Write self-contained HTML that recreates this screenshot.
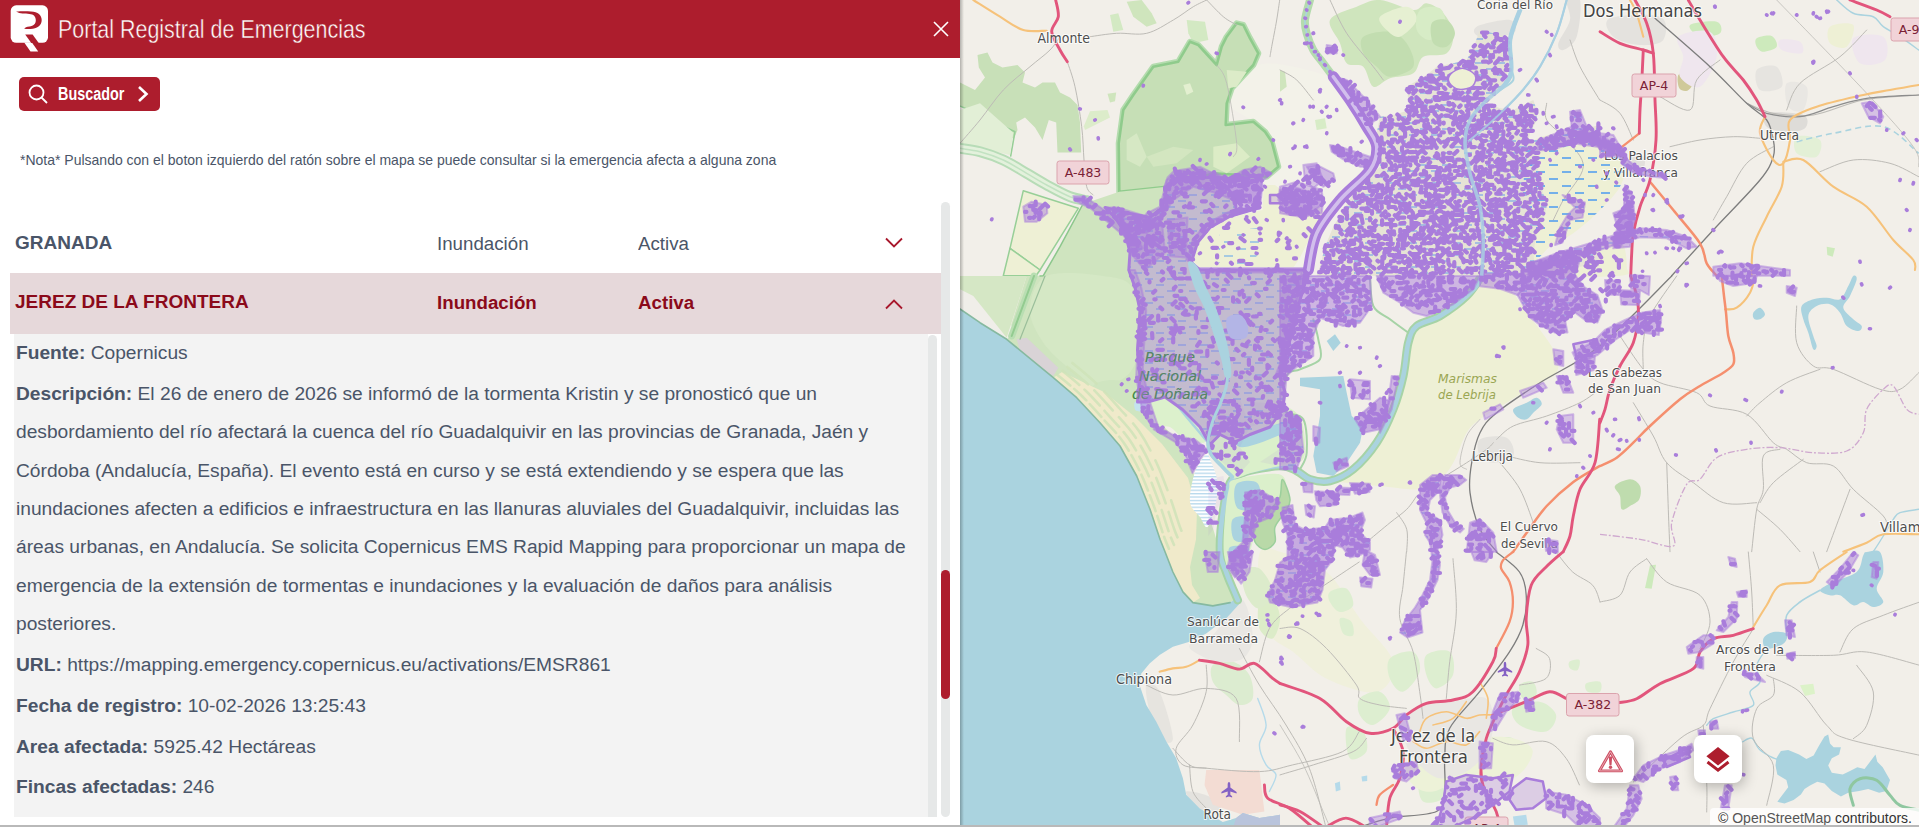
<!DOCTYPE html>
<html lang="es">
<head>
<meta charset="utf-8">
<title>Portal Registral de Emergencias</title>
<style>
*{box-sizing:border-box;margin:0;padding:0}
html,body{width:1919px;height:827px;overflow:hidden;background:#fff;font-family:"Liberation Sans",sans-serif;color:#4a5568}
#app{position:relative;width:1919px;height:827px;overflow:hidden}
#panel{position:absolute;left:0;top:0;width:960px;height:827px;background:#fff;overflow:hidden}
#hdr{position:absolute;left:0;top:0;width:960px;height:58px;background:#ad1d2d}
#logo{position:absolute;left:0;top:0;width:60px;height:58px}
#title{position:absolute;left:58px;top:13px;font-size:26px;line-height:32px;color:#fff;white-space:nowrap;transform-origin:0 50%;transform:scaleX(.825);font-weight:400;-webkit-text-stroke:.45px #ad1d2d}
#close{position:absolute;left:933px;top:21px;width:16px;height:16px}
#btn{position:absolute;left:19px;top:77px;width:141px;height:34px;border-radius:5px;background:#ad1d2d;color:#fff}
#btn svg{position:absolute}
#btn span{position:absolute;left:39px;top:6px;font-size:18px;line-height:22px;font-weight:700;white-space:nowrap;transform-origin:0 50%;transform:scaleX(.8)}
#nota{position:absolute;left:20px;top:151px;font-size:15px;line-height:18px;white-space:nowrap;transform-origin:0 50%;transform:scaleX(.933);color:#4a5568}
.row{position:absolute;left:10px;width:931px;height:61px}
.row .n{position:absolute;left:5px;font-size:19px;line-height:24px;font-weight:700;white-space:nowrap}
.row .c{position:absolute;font-size:19.2px;line-height:24px;white-space:nowrap;transform-origin:0 50%;transform:scaleX(.975)}
#r1{top:212px}
#r2{top:273px;background:#e6d8da;color:#8b0a1a}
#r2 .c{font-weight:700}
.chev{position:absolute;left:875px;width:18px;height:12px}
#det{position:absolute;left:14px;top:334px;width:914px;height:483px;background:#f3f3f3}
#det p{position:absolute;left:2px;font-size:19.2px;line-height:38.4px;white-space:nowrap;color:#4a5568}
#det b{font-weight:700}
#sb1{position:absolute;left:928px;top:335px;width:9px;height:482px;background:#e6e8e8;border-radius:5px 5px 0 0}
#sb2{position:absolute;left:941px;top:202px;width:9px;height:615px;background:#e6e8e8;border-radius:5px}
#sb2 i{position:absolute;left:0;top:368px;width:9px;height:129px;border-radius:5px;background:#ad1d2d}
#bottom{position:absolute;left:0;top:825px;width:1919px;height:2px;background:#b9b9b9}
#map{position:absolute;left:960px;top:0;width:959px;height:827px;background:#f2efe9;overflow:hidden}
.mb{position:absolute;top:735px;width:48px;height:48px;border-radius:8px;background:#fff;box-shadow:2px 3px 14px rgba(0,0,0,.28)}
.mb svg{position:absolute;left:0;top:0}
#attr{position:absolute;left:750px;top:808px;width:209px;height:18px;background:rgba(255,255,255,.8);border-radius:4px 0 0 0}
#attr span{position:absolute;left:8px;top:3px;font-size:14px;line-height:15px;color:#333;white-space:nowrap;transform-origin:0 50%;transform:scaleX(1)}
#attr span i{font-style:normal;color:#555}
</style>
</head>
<body>
<div id="app">
<div id="panel">
  <div id="hdr">
    <svg id="logo" viewBox="0 0 60 58"><rect x="10.700" y="5.300" width="37.300" height="37.500" rx="5.500" fill="#fff"/><path d="M24.200 42.500H31.900L38.200 51.600H30.500z" fill="#fff"/><path d="M25.200 34.400H32.600L38.700 42.900H31.300z" fill="#ad1d2d"/><path d="M16.100 11.600C20 11.300 26 11.200 31 11.500C38 12 41.700 15 41.700 20C41.700 25.500 37 28.800 30.500 29C28 29.100 26 29 24.200 28.700C25 27.300 26.500 26.600 29.500 26.400C33.500 26.100 35.800 23.800 35.800 20.300C35.800 16.500 33.500 14.300 29.500 14C25 13.700 20 14.200 16.100 11.600z" fill="#ad1d2d"/></svg>
    <div id="title">Portal Registral de Emergencias</div>
    <svg id="close" viewBox="0 0 16 16"><path d="M1 1L15 15M15 1L1 15" stroke="#fff" stroke-width="1.6" fill="none"/></svg>
  </div>
  <div id="btn">
    <svg style="left:8px;top:6px" width="22" height="22" viewBox="0 0 22 22"><circle cx="9.500" cy="9.500" r="7" fill="none" stroke="#fff" stroke-width="1.800"/><path d="M14.500 14.500L20 20" stroke="#fff" stroke-width="1.800"/></svg>
    <span>Buscador</span>
    <svg style="left:117px;top:8px" width="14" height="18" viewBox="0 0 14 18"><path d="M3 2L10.500 9 3 16" fill="none" stroke="#fff" stroke-width="2.600"/></svg>
  </div>
  <div id="nota">*Nota* Pulsando con el boton izquierdo del ratón sobre el mapa se puede consultar si la emergencia afecta a alguna zona</div>

  <div class="row" id="r1">
    <div class="n" style="top:19px">GRANADA</div>
    <div class="c" style="left:427px;top:20px">Inundación</div>
    <div class="c" style="left:628px;top:20px">Activa</div>
    <svg class="chev" style="top:25px" viewBox="0 0 18 12"><path d="M1 1.500L9 9.500 17 1.500" fill="none" stroke="#a8182c" stroke-width="1.800"/></svg>
  </div>
  <div class="row" id="r2">
    <div class="n" style="top:17px">JEREZ DE LA FRONTERA</div>
    <div class="c" style="left:427px;top:18px">Inundación</div>
    <div class="c" style="left:628px;top:18px">Activa</div>
    <svg class="chev" style="top:25px" viewBox="0 0 18 12"><path d="M1 10.500L9 2.500 17 10.500" fill="none" stroke="#a8182c" stroke-width="1.800"/></svg>
  </div>
  <div id="det">
    <p style="top:0px"><b>Fuente:</b> Copernicus</p>
    <p style="top:41px"><b>Descripción:</b> El 26 de enero de 2026 se informó de la tormenta Kristin y se pronosticó que un</p>
    <p style="top:79px">desbordamiento del río afectará la cuenca del río Guadalquivir en las provincias de Granada, Jaén y</p>
    <p style="top:118px">Córdoba (Andalucía, España). El evento está en curso y se está extendiendo y se espera que las</p>
    <p style="top:156px">inundaciones afecten a edificios e infraestructura en las llanuras aluviales del Guadalquivir, incluidas las</p>
    <p style="top:194px">áreas urbanas, en Andalucía. Se solicita Copernicus EMS Rapid Mapping para proporcionar un mapa de</p>
    <p style="top:233px">emergencia de la extensión de tormentas e inundaciones y la evaluación de daños para análisis</p>
    <p style="top:271px">posteriores.</p>
    <p style="top:312px"><b>URL:</b> https://mapping.emergency.copernicus.eu/activations/EMSR861</p>
    <p style="top:353px"><b>Fecha de registro:</b> 10-02-2026 13:25:43</p>
    <p style="top:394px"><b>Area afectada:</b> 5925.42 Hectáreas</p>
    <p style="top:434px"><b>Fincas afectadas:</b> 246</p>
  </div>
  <div id="sb1"></div>
  <div id="sb2"><i></i></div>
</div>
<div id="map">
<!--MAPSVG-->
<svg width="959" height="827" viewBox="960 0 959 827" font-family="'DejaVu Sans','Liberation Sans',sans-serif" style="position:absolute;left:0;top:0">
<defs><pattern id="wet" width="22" height="12" patternUnits="userSpaceOnUse"><path d="M1 3h8M12 9h8" stroke="#5b9df0" stroke-width="1.200" fill="none"/></pattern><pattern id="wet2" width="26" height="14" patternUnits="userSpaceOnUse"><path d="M2 4h9M15 11h9" stroke="#4c9bf0" stroke-width="1.300" fill="none"/></pattern></defs>
<rect x="960" y="0" width="959" height="827" fill="#f2efe9"/>
<path d="M1480 276C1486.7 274.3 1498.9 279.9 1506.7 286C1514.5 292.1 1518.9 302.1 1526.7 312.7C1534.5 323.2 1548.3 339.3 1553.3 349.3C1558.3 359.3 1560 366.6 1556.7 372.7C1553.4 378.8 1541.6 381 1533.3 386C1525 391 1515.6 397.1 1506.7 402.7C1497.8 408.2 1486.7 414.3 1480 419.3C1473.3 424.3 1471.2 425.5 1466.7 432.7C1462.2 439.9 1457.8 454.9 1453.3 462.7C1448.8 470.5 1445.5 474.9 1440 479.3C1434.5 483.7 1430 488.2 1420 489.3C1410 490.4 1392.2 487.1 1380 486C1367.8 484.9 1355 483.5 1346.7 482.7C1338.4 481.9 1328.9 483.2 1330 481C1331.1 478.8 1345.5 475.7 1353.3 469.3C1361.1 462.9 1370 452.7 1376.7 442.7C1383.4 432.7 1388.9 420.4 1393.3 409.3C1397.7 398.2 1400.8 387.1 1403.3 376C1405.8 364.9 1406.1 351 1408.3 342.7C1410.5 334.4 1411.4 330.4 1416.7 326C1422 321.6 1431.7 321 1440 316C1448.3 311 1460 302.7 1466.7 296C1473.4 289.3 1473.3 277.7 1480 276z" fill="#eef0d5"/>
<path d="M1226.7 100C1226.7 109.2 1245.8 115 1253.3 121.7C1260.8 128.4 1267.2 131.9 1271.7 140C1276.2 148.1 1281.7 163.1 1280 170C1278.3 176.9 1265 175 1261.7 181.7C1258.4 188.4 1267.5 203.3 1260 210C1252.5 216.7 1227.8 215.6 1216.7 221.7C1205.6 227.8 1197.8 238.6 1193.3 246.7C1188.8 254.8 1171.1 266.1 1190 270C1208.9 273.9 1286.2 276.1 1306.7 270C1327.2 263.9 1307.8 245 1313.3 233.3C1318.8 221.6 1331.1 211.1 1340 200C1348.9 188.9 1360.6 176.7 1366.7 166.7C1372.8 156.7 1377.8 149.4 1376.7 140C1375.6 130.6 1365.6 119.5 1360 110C1354.4 100.5 1354.4 90.5 1343.3 83.3C1332.2 76.1 1308.3 69.5 1293.3 66.7C1278.3 63.9 1264.4 61.2 1253.3 66.7C1242.2 72.2 1226.7 90.8 1226.7 100z" fill="#f3f2e9"/>
<path d="M1530 143.3C1538.3 134.4 1558.3 132.5 1573.3 133.3C1588.3 134.1 1611.1 143.9 1620 148.3C1628.9 152.8 1626.7 153.6 1626.7 160C1626.7 166.4 1625 177.8 1620 186.7C1615 195.6 1604.5 205.5 1596.7 213.3C1588.9 221.1 1581.1 227.7 1573.3 233.3C1565.5 238.9 1557.2 241.7 1550 246.7C1542.8 251.7 1535 265.5 1530 263.3C1525 261.1 1521.1 246.1 1520 233.3C1518.9 220.5 1521.6 201.7 1523.3 186.7C1525 171.7 1521.7 152.2 1530 143.3z" fill="#eef0d5"/>
<path d="M1540 263.3C1548.3 258.5 1576.7 250.6 1590 246.7C1603.3 242.8 1613.9 236.7 1620 240C1626.1 243.3 1626.7 260.8 1626.7 266.7C1626.7 272.6 1634.5 274.2 1620 275.7C1605.5 277.2 1553.3 277.8 1540 275.7C1526.7 273.6 1531.7 268.1 1540 263.3z" fill="#eef0d5"/>
<path d="M1023.3 190.7L1078.3 208.3L1040 270L1010 248.3z" fill="#eef0d5" stroke="#97cf97" stroke-width="1.5" stroke-linejoin="round"/>
<path d="M1010 248.3L1040 270L1036 275.7L1003.3 275.7z" fill="#eef0d5" stroke="#97cf97" stroke-width="1.5" stroke-linejoin="round"/>
<path d="M1260 552C1263.5 543.7 1269.6 548.7 1280.7 552C1291.8 555.3 1313.5 560.9 1326.7 572C1339.9 583.1 1348.9 603.7 1360 618.7C1371.1 633.7 1390.5 649.8 1393.3 662C1396.1 674.2 1387.8 689.2 1376.7 692C1365.6 694.8 1340.6 685.4 1326.7 678.7C1312.8 672 1302.8 659.2 1293.3 652C1283.8 644.8 1275.5 643.6 1270 635.3C1264.5 627 1261.7 615.9 1260 602C1258.3 588.1 1256.5 560.3 1260 552z" fill="#f0f0dc"/>
<path d="M977.5 55L987.5 52.5L992.5 62.5L1002.5 67.5L1017.5 65L1025 72.5L1022.5 82.5L1035 87.5L1042.5 82.5L1055 82.5L1060 92.5L1070 97.5L1077.5 105L1080 122.5L1081.2 152.5L1057.5 152.5L1056.2 122.5L1048.8 120L1042.5 140L1035 127.5L1025 117.5L1016.2 122.5L1017.5 130L1013.8 138.8L1000 132.5L960 105L960 82.5L975 90L985 77.5L978.8 67.5z" fill="#c8e0b8"/>
<path d="M1107.5 93.8L1116.2 92.5L1115 101.2L1110 102.5z" fill="#cfe5bd"/>
<path d="M1090 111.2L1107.5 110L1110 117.5L1100 122.5L1085 130L1083.8 126.2z" fill="#dcecca"/>
<path d="M1126.7 1.7L1141.7 0L1151.7 13.3L1156.7 23.3L1146.7 26.7L1133.3 16.7z" fill="#cfe5bd"/>
<path d="M1186.7 20L1205 21.7L1208.3 40L1193.3 43.3L1188.3 33.3z" fill="#d3e9c3"/>
<path d="M1110 15L1118.3 13.3L1123.3 30L1113.3 31.7z" fill="#d3e9c3"/>
<path d="M960 106L1015 131.7L1010.7 156" fill="none" stroke="#97cf97" stroke-width="1.5" stroke-linecap="round" stroke-linejoin="round"/>
<path d="M960 110L980 103.3L1013.3 132.7L1010 155L960 143.3z" fill="#e2efd6"/>
<path d="M1119.3 191.7L1118.7 143.3L1123.3 110L1133.3 95L1153.3 66.7L1178.3 61.7L1190 41.7L1198.3 45L1216.7 65L1221.7 46.7L1226.7 36.7L1236.7 23.3L1243.3 25L1250 38.3L1258.3 53.3L1253.3 65L1231.7 88.3L1226.7 103.3L1225.7 125L1253.3 121.7L1265 131.7L1271.7 141.7L1278.3 166.7L1266.7 176.7L1213.3 173.3L1166.7 186.7z" fill="#c6dfb6" stroke="#b4dcae" stroke-width="6" stroke-linejoin="round"/>
<path d="M1119.3 191.7L1118.7 143.3L1123.3 110L1133.3 95L1153.3 66.7L1178.3 61.7L1190 41.7L1198.3 45L1216.7 65L1221.7 46.7L1226.7 36.7L1236.7 23.3L1243.3 25L1250 38.3L1258.3 53.3L1253.3 65L1231.7 88.3L1226.7 103.3L1225.7 125L1253.3 121.7L1265 131.7L1271.7 141.7L1278.3 166.7L1266.7 176.7L1213.3 173.3L1166.7 186.7z" fill="#c6dfb6" stroke="#8fcb8c" stroke-width="2.6" stroke-linejoin="round"/>
<path d="M1183.3 85L1190 83.3L1193.3 91.7L1186.7 95z" fill="#e3efd0"/>
<path d="M1126.7 140L1136.7 133.3L1146.7 156.7L1140 166.7L1126.7 160z" fill="#d6e8c4"/>
<path d="M1146.7 156.7L1173.3 146.7L1193.3 150L1176.7 163.3L1153.3 166.7z" fill="#d3e6c0"/>
<path d="M1226.7 70L1246.7 71.7L1236.7 86.7L1228.3 88.3z" fill="#dcebc8"/>
<path d="M1213.3 146.7L1236.7 143.3L1250 156.7L1226.7 173.3L1213.3 166.7z" fill="#dcecc6"/>
<path d="M1330 20C1332.8 13.9 1348.4 10 1356.7 6.7C1365 3.4 1370.6 -0.5 1380 0C1389.4 0.5 1405.5 9.4 1413.3 10C1421.1 10.6 1421.7 2.7 1426.7 3.3C1431.7 3.9 1438.9 8.3 1443.3 13.3C1447.7 18.3 1452.7 26.6 1453.3 33.3C1453.9 40 1451.7 49.4 1446.7 53.3C1441.7 57.2 1428.9 53.4 1423.3 56.7C1417.7 60 1418.8 69.7 1413.3 73.3C1407.8 76.9 1396.7 76.1 1390 78.3C1383.3 80.5 1377.8 88.6 1373.3 86.7C1368.8 84.8 1367.7 70.6 1363.3 66.7C1358.9 62.8 1350.6 67.2 1346.7 63.3C1342.8 59.4 1342.8 50.5 1340 43.3C1337.2 36.1 1327.2 26.1 1330 20z" fill="#cfe5bd"/>
<path d="M1363.3 36.7C1367.8 33.1 1382.8 30.6 1390 31.7C1397.2 32.8 1402.8 37.5 1406.7 43.3C1410.6 49.1 1416.1 61.1 1413.3 66.7C1410.5 72.3 1396.1 76.7 1390 76.7C1383.9 76.7 1381.2 70.6 1376.7 66.7C1372.2 62.8 1365.5 58.3 1363.3 53.3C1361.1 48.3 1358.8 40.3 1363.3 36.7z" fill="#c2ddb0"/>
<path d="M1380 16.7C1383.3 12.8 1400.6 6.2 1406.7 6.7C1412.8 7.2 1417.8 15 1416.7 20C1415.6 25 1405 35 1400 36.7C1395 38.4 1390 33.3 1386.7 30C1383.4 26.7 1376.7 20.6 1380 16.7z" fill="#e6f0d2"/>
<path d="M1420 10C1423.9 6.4 1435.8 5.5 1440 8.3C1444.2 11.1 1446.7 21.4 1445 26.7C1443.3 32 1434.7 39.5 1430 40C1425.3 40.5 1418.4 35 1416.7 30C1415 25 1416.1 13.6 1420 10z" fill="#d7ecc6"/>
<path d="M1431.7 23.3C1433.9 19.4 1442.8 18.3 1446.7 20C1450.6 21.7 1455 28.8 1455 33.3C1455 37.8 1450.3 45 1446.7 46.7C1443.1 48.4 1435.8 47.2 1433.3 43.3C1430.8 39.4 1429.5 27.2 1431.7 23.3z" fill="#c2ddb0"/>
<path d="M1280 70L1285 71.7L1286.7 86.7L1280 91.7z" fill="#cfe5bd"/>
<path d="M1315 120L1325 118.3L1326.7 128.3L1316.7 130z" fill="#d7ecc6"/>
<path d="M1083 204L1119.3 191.7L1166.7 186.7L1166.7 233.3L1146.7 275.7L1146.7 276L1146.7 326L1140 362.7L1146.7 409.3L1173.3 436L1193.3 472.7L1213.3 529.3L1220 551.7L1222.8 552L1226.1 572L1232.8 588.6L1236.1 598.6L1230.1 602.6L1212.8 605.9L1192.9 602.6L1182.9 591.9L1172.9 572L1164.6 552L1160 539.3L1150 509.3L1136.7 476L1120 446L1100 422.7L1076.7 397.7L1053.3 377.7L1006.7 339.3L1026.7 276L1043.3 275.7L1060 246.7L1080 208.3z" fill="#cfe4bf"/>
<path d="M1046.7 276C1058.9 270.4 1088.9 273.8 1103.3 276C1117.7 278.2 1127.2 278.2 1133.3 289.3C1139.4 300.4 1141.1 328.2 1140 342.7C1138.9 357.1 1134.5 368.8 1126.7 376C1118.9 383.2 1102.8 387.1 1093.3 386C1083.8 384.9 1078.3 376.5 1070 369.3C1061.7 362.1 1050 352.7 1043.3 342.7C1036.6 332.7 1029.4 320.4 1030 309.3C1030.6 298.2 1034.5 281.6 1046.7 276z" fill="#d5e8c5"/>
<path d="M1093.3 386C1095 380.4 1117.8 377.7 1126.7 382.7C1135.6 387.7 1138.9 406 1146.7 416C1154.5 426 1166.1 432.7 1173.3 442.7C1180.5 452.7 1185.5 464.9 1190 476C1194.5 487.1 1199.5 500.4 1200 509.3C1200.5 518.2 1197.8 533.7 1193.3 529.3C1188.8 524.9 1181.1 496 1173.3 482.7C1165.5 469.4 1156.1 460.4 1146.7 449.3C1137.3 438.2 1125.6 426.6 1116.7 416C1107.8 405.4 1091.6 391.6 1093.3 386z" fill="#cfe5c0"/>
<path d="M1053.3 377.7L1076.7 397.7L1100 422.7L1120 446L1136.7 476L1150 509.3L1160 539.3L1165 551.7L1172.9 572L1182.9 591.9L1192.9 602.6L1200 598L1192 585L1190 567L1196 539.5L1197 510L1188 478L1162 444L1134 416L1104 392L1085 383L1062 372z" fill="#f0eaca"/>
<path d="M1057.2 374.7C1061.1 378 1072.8 387.2 1080.6 394.7C1088.4 402.2 1096.7 411.6 1103.9 419.7C1111.1 427.8 1117.8 434.1 1123.9 443C1130 451.9 1135.6 462.4 1140.6 473C1145.6 483.6 1150 495.8 1153.9 506.3C1157.8 516.9 1161.4 529.2 1163.9 536.3C1166.4 543.4 1168.1 546.6 1168.9 548.7" fill="none" stroke="#cfe3b9" stroke-width="2.6" stroke-linecap="round" stroke-linejoin="round" stroke-opacity=".85" stroke-dasharray="17 5"/>
<path d="M1062.3 370.8C1066.2 374.1 1077.9 383.3 1085.7 390.8C1093.5 398.3 1101.8 407.8 1109 415.8C1116.2 423.9 1122.9 430.2 1129 439.1C1135.1 448 1140.7 458.6 1145.7 469.1C1150.7 479.7 1155.1 491.9 1159 502.4C1162.9 513 1166.5 525.3 1169 532.4C1171.5 539.5 1173.1 542.7 1174 544.8" fill="none" stroke="#cfe3b9" stroke-width="2.6" stroke-linecap="round" stroke-linejoin="round" stroke-opacity=".85" stroke-dasharray="22 7"/>
<path d="M1067.3 366.9C1071.2 370.2 1083 379.4 1090.7 386.9C1098.5 394.4 1106.8 403.8 1114 411.9C1121.3 419.9 1127.9 426.3 1134 435.2C1140.2 444.1 1145.7 454.6 1150.7 465.2C1155.7 475.8 1160.2 487.9 1164 498.5C1167.9 509.1 1171.5 521.4 1174 528.5C1176.5 535.6 1178.2 538.8 1179 540.9" fill="none" stroke="#cfe3b9" stroke-width="2.6" stroke-linecap="round" stroke-linejoin="round" stroke-opacity=".85" stroke-dasharray="27 9"/>
<path d="M1072.4 363C1076.3 366.3 1088 375.5 1095.8 383C1103.6 390.5 1111.9 399.9 1119.1 408C1126.3 416.1 1133 422.4 1139.1 431.3C1145.2 440.2 1150.8 450.8 1155.8 461.3C1160.8 471.9 1165.2 484.1 1169.1 494.6C1173 505.1 1176.6 517.5 1179.1 524.6C1181.6 531.7 1183.3 534.9 1184.1 537" fill="none" stroke="#cfe3b9" stroke-width="2.6" stroke-linecap="round" stroke-linejoin="round" stroke-opacity=".85" stroke-dasharray="32 11"/>
<path d="M960 286L976.7 292.7L1010 322.7L1015 332.7L1006.7 339.3L980 322.7L960 309.3z" fill="#f0eee9"/>
<path d="M1016.7 339.3L1026.7 337.7L1058.3 367.7L1053.3 376L1036.7 366L1020 351z" fill="#d9d3d6"/>
<path d="M960 276L1026.7 276L1006.7 337.7L973.3 296L960 289.3z" fill="#d5e7c5"/>
<path d="M1034 276L1011.7 336" fill="none" stroke="#b9deb2" stroke-width="7" stroke-linecap="round" stroke-linejoin="round"/>
<path d="M1034 276L1011.7 336" fill="none" stroke="#93cb90" stroke-width="2" stroke-linecap="round" stroke-linejoin="round"/>
<path d="M1045 276L1020 339.3" fill="none" stroke="#9bbf9b" stroke-width="1.2" stroke-linecap="round" stroke-linejoin="round"/>
<path d="M1083 204L1060 246.7L1043.3 275.7L1040 276" fill="none" stroke="#8cc78c" stroke-width="1.5" stroke-linecap="round" stroke-linejoin="round"/>
<path d="M960 148.3C963.3 148.9 972.8 149.8 980 151.7C987.2 153.6 995.5 156.4 1003.3 160C1011.1 163.6 1019.5 169.1 1026.7 173.3C1033.9 177.5 1039.5 181.1 1046.7 185C1053.9 188.9 1063.3 194.1 1070 196.7C1076.7 199.3 1083.9 200 1086.7 200.7" fill="none" stroke="#b7dcb7" stroke-width="11" stroke-linecap="round" stroke-linejoin="round"/>
<path d="M960 148.3C963.3 148.9 972.8 149.8 980 151.7C987.2 153.6 995.5 156.4 1003.3 160C1011.1 163.6 1019.5 169.1 1026.7 173.3C1033.9 177.5 1039.5 181.1 1046.7 185C1053.9 188.9 1063.3 194.1 1070 196.7C1076.7 199.3 1083.9 200 1086.7 200.7" fill="none" stroke="#e3f1dc" stroke-width="7" stroke-linecap="round" stroke-linejoin="round"/>
<path d="M960 148.3C963.3 148.9 972.8 149.8 980 151.7C987.2 153.6 995.5 156.4 1003.3 160C1011.1 163.6 1019.5 169.1 1026.7 173.3C1033.9 177.5 1039.5 181.1 1046.7 185C1053.9 188.9 1063.3 194.1 1070 196.7C1076.7 199.3 1083.9 200 1086.7 200.7" fill="none" stroke="#c2e2c2" stroke-width="1.5" stroke-linecap="round" stroke-linejoin="round"/>
<path d="M1212.8 665.1C1216.1 661.8 1226.7 660.1 1232.8 661.8C1238.9 663.5 1246.1 669 1249.4 675.1C1252.7 681.2 1254.4 693.4 1252.7 698.4C1251 703.4 1243.8 705.6 1239.4 705C1235 704.4 1230.5 698.9 1226.1 695C1221.7 691.1 1215 686.7 1212.8 681.7C1210.6 676.7 1209.5 668.4 1212.8 665.1z" fill="#dcecd0"/>
<path d="M1259.4 601.9C1261.6 596.9 1269.3 595.8 1272.7 598.6C1276.1 601.4 1280 611.9 1280 618.5C1280 625.1 1276.1 636.8 1272.7 638.5C1269.3 640.2 1261.6 634.6 1259.4 628.5C1257.2 622.4 1257.2 606.9 1259.4 601.9z" fill="#dcecc8"/>
<path d="M1242.8 572C1245 567.6 1254.4 565.3 1259.4 568.6C1264.4 571.9 1272.7 585.2 1272.7 591.9C1272.7 598.6 1263.8 608 1259.4 608.6C1255 609.2 1248.9 601.3 1246.1 595.2C1243.3 589.1 1240.6 576.4 1242.8 572z" fill="#dcebcb"/>
<path d="M1252.7 738.3L1266.1 741.6L1272.7 764.9L1259.4 784.9L1249.4 764.9z" fill="#f2efe9"/>
<path d="M1329.9 591.9C1332.7 589.7 1342.6 586.4 1346.5 588.6C1350.4 590.8 1354.3 601.3 1353.2 605.2C1352.1 609.1 1343.8 612.5 1339.9 611.9C1336 611.3 1331.6 605.2 1329.9 601.9C1328.2 598.6 1327.1 594.1 1329.9 591.9z" fill="#ddeed0"/>
<path d="M1339.9 618.5C1341.3 616.6 1349.3 619.1 1351.5 621.9C1353.7 624.7 1354.6 633.3 1353.2 635.2C1351.8 637.1 1345.4 636.3 1343.2 633.5C1341 630.7 1338.5 620.4 1339.9 618.5z" fill="#ddeed0"/>
<path d="M1359.8 698.4C1363.1 694.5 1374.8 690 1379.8 691.7C1384.8 693.4 1390.9 702.9 1389.8 708.4C1388.7 713.9 1378.1 723.9 1373.1 725C1368.1 726.1 1362 719.4 1359.8 715C1357.6 710.6 1356.5 702.3 1359.8 698.4z" fill="#ddeed0"/>
<path d="M1389.8 658.5C1393.7 654.1 1408.1 649.6 1413.1 651.8C1418.1 654 1421.4 665.1 1419.7 671.8C1418 678.4 1408.1 690.6 1403.1 691.7C1398.1 692.8 1392 683.9 1389.8 678.4C1387.6 672.9 1385.9 662.9 1389.8 658.5z" fill="#ddeed0"/>
<path d="M1426.4 655.1C1430.3 651.2 1445.3 648.5 1449.7 651.8C1454.1 655.1 1455.2 669 1453 675.1C1450.8 681.2 1440.8 688.4 1436.4 688.4C1432 688.4 1428.1 680.6 1426.4 675.1C1424.7 669.6 1422.5 659 1426.4 655.1z" fill="#ddeed0"/>
<path d="M1346.5 728.3C1348.7 723.8 1359.9 727.7 1363.2 731.6C1366.5 735.5 1368.7 747.2 1366.5 751.6C1364.3 756 1353.2 762.2 1349.9 758.3C1346.6 754.4 1344.3 732.8 1346.5 728.3z" fill="#ddeed0"/>
<path d="M1492.9 741.6C1495.1 737.2 1508.5 735.5 1512.9 738.3C1517.3 741.1 1521.7 753.9 1519.5 758.3C1517.3 762.7 1504 767.7 1499.6 764.9C1495.2 762.1 1490.7 746 1492.9 741.6z" fill="#ddeed0"/>
<path d="M1512.9 708.4C1516.2 704.5 1532.3 700.6 1539.5 701.7C1546.7 702.8 1555 710 1556.1 715C1557.2 720 1552.2 729.9 1546.1 731.6C1540 733.3 1525 728.9 1519.5 725C1514 721.1 1509.6 712.3 1512.9 708.4z" fill="#ddeed0"/>
<path d="M1519.5 685.1C1521.2 682.3 1530 680.1 1532.8 681.7C1535.6 683.4 1537.9 692.2 1536.2 695C1534.5 697.8 1525.6 700 1522.8 698.4C1520 696.8 1517.8 687.9 1519.5 685.1z" fill="#ddeed0"/>
<path d="M1419.7 781.5C1422.5 777.6 1435.8 775.4 1439.7 778.2C1443.6 781 1445.8 794.3 1443 798.2C1440.2 802.1 1426.9 804.3 1423 801.5C1419.1 798.7 1416.9 785.4 1419.7 781.5z" fill="#ddeed0"/>
<path d="M1569.4 661.8C1571 660.4 1578 658.7 1579.4 660.1C1580.8 661.5 1579.2 668.7 1577.7 670.1C1576.2 671.5 1571.5 669.8 1570.1 668.4C1568.7 667 1567.9 663.2 1569.4 661.8z" fill="#ddeed0"/>
<path d="M1586.1 683.4C1588.1 681.7 1597.7 680.3 1600 681.7C1602.3 683.1 1602 690 1600 691.7C1598 693.4 1590 693.1 1587.7 691.7C1585.4 690.3 1584 685.1 1586.1 683.4z" fill="#ddeed0"/>
<path d="M1406.4 764.9C1410.3 759.4 1424.2 756 1436.4 751.6C1448.6 747.2 1466.8 740.5 1479.6 738.3C1492.3 736.1 1504 736.1 1512.9 738.3C1521.8 740.5 1532.8 745 1532.8 751.6C1532.8 758.2 1524 773.8 1512.9 778.2C1501.8 782.6 1479.6 776 1466.3 778.2C1453 780.4 1441.9 790.4 1433 791.5C1424.1 792.6 1417.5 789.3 1413.1 784.9C1408.7 780.5 1402.5 770.4 1406.4 764.9z" fill="#edf2d8"/>
<path d="M1678.3 75C1679.8 72.5 1685.9 71.9 1688.3 73.3C1690.7 74.7 1692.9 80.4 1692.7 83.3C1692.5 86.2 1689.5 89.9 1687.3 90.7C1685.1 91.5 1680.8 90.9 1679.3 88.3C1677.8 85.7 1676.8 77.5 1678.3 75z" fill="#cfc99a"/>
<path d="M1615 486C1616.7 483.2 1625.8 479.3 1630 479.3C1634.2 479.3 1638.5 482.7 1640 486C1641.5 489.3 1641 496 1639.3 499.3C1637.6 502.6 1632.9 504.3 1630 506C1627.1 507.7 1623.4 511 1621.7 509.3C1620 507.6 1621.1 499.9 1620 496C1618.9 492.1 1613.3 488.8 1615 486z" fill="#bfdcae"/>
<path d="M1650 565.3L1656 564.7L1651.7 588.7L1645 588z" fill="#cdeabc"/>
<path d="M1800 685.3L1813.3 683.7L1815 693.7L1805 696z" fill="#dcf2c8"/>
<path d="M1756.7 38.3C1759.2 36.5 1768.4 34.6 1771.7 36C1775 37.4 1778.1 44.1 1776.7 46.7C1775.3 49.3 1766.6 51.7 1763.3 51.7C1760 51.7 1757.8 48.9 1756.7 46.7C1755.6 44.5 1754.2 40.1 1756.7 38.3z" fill="#cdeabc"/>
<path d="M1690 25C1692.8 22.5 1711.7 20.3 1716.7 21.7C1721.7 23.1 1722.8 30.8 1720 33.3C1717.2 35.8 1705 38.1 1700 36.7C1695 35.3 1687.2 27.5 1690 25z" fill="#cdeabc"/>
<path d="M1826.7 246.7L1835 248.3L1832.7 256.7L1827.3 255z" fill="#cdeabc"/>
<path d="M1796.7 136.7C1800.6 134.5 1816.7 136.7 1820 140C1823.3 143.3 1820.6 154.5 1816.7 156.7C1812.8 158.9 1800 156.6 1796.7 153.3C1793.4 150 1792.8 138.9 1796.7 136.7z" fill="#e3f0d6"/>
<path d="M1678.3 36.7C1682.8 32.5 1703.6 28.4 1710 31.7C1716.4 35 1718.4 47.5 1716.7 56.7C1715 65.9 1706.1 83.4 1700 86.7C1693.9 90 1682.8 81.7 1680 76.7C1677.2 71.7 1683.6 63.4 1683.3 56.7C1683 50 1673.8 40.9 1678.3 36.7z" fill="#efe6ee"/>
<path d="M1780 40C1783 38.6 1796.4 39.5 1800 41.7C1803.6 43.9 1804.8 51.9 1801.7 53.3C1798.7 54.7 1785.3 52.2 1781.7 50C1778.1 47.8 1777 41.4 1780 40z" fill="#efe6ee"/>
<path d="M1853.3 38.3C1857.2 33.9 1878 33.1 1883.3 36.7C1888.6 40.3 1888.9 55.6 1885 60C1881.1 64.4 1865.3 66.9 1860 63.3C1854.7 59.7 1849.4 42.7 1853.3 38.3z" fill="#efe6ee"/>
<path d="M1830 26.7C1833.9 23.6 1850.5 21.7 1853.3 25C1856.1 28.3 1850.6 43.7 1846.7 46.7C1842.8 49.8 1832.8 46.6 1830 43.3C1827.2 40 1826.1 29.8 1830 26.7z" fill="#eef0d5"/>
<path d="M1610 18.3C1617.8 15 1651.1 13.1 1660 16.7C1668.9 20.3 1666.6 35.3 1663.3 40C1660 44.7 1648.3 45.5 1640 45C1631.7 44.5 1618.3 41.2 1613.3 36.7C1608.3 32.2 1602.2 21.6 1610 18.3z" fill="#e4e2de"/>
<path d="M1766.7 113.3C1772.8 111.3 1796.9 112.5 1803.3 115C1809.7 117.5 1807.8 125.5 1805 128.3C1802.2 131.1 1793.1 132 1786.7 131.7C1780.3 131.4 1770 129.8 1766.7 126.7C1763.4 123.6 1760.6 115.2 1766.7 113.3z" fill="#dedcd8"/>
<path d="M1756.7 70C1759.5 66.1 1772.5 63.9 1776.7 66.7C1780.9 69.5 1784.5 82.8 1781.7 86.7C1778.9 90.6 1764.2 92.8 1760 90C1755.8 87.2 1753.9 73.9 1756.7 70z" fill="#e6e4e0"/>
<path d="M1786.7 83.3C1789.8 80 1803.9 82.2 1806.7 86.7C1809.5 91.2 1806.4 106.7 1803.3 110C1800.2 113.3 1791.1 111.2 1788.3 106.7C1785.5 102.2 1783.6 86.6 1786.7 83.3z" fill="#e9e7e3"/>
<path d="M1630 156.7C1632.2 154.8 1641.1 154.8 1643.3 156.7C1645.5 158.6 1645.5 166.4 1643.3 168.3C1641.1 170.2 1632.2 170.2 1630 168.3C1627.8 166.4 1627.8 158.6 1630 156.7z" fill="#e2e0dc"/>
<path d="M1476.7 26.7C1481.7 23.9 1503.9 18.9 1510 20C1516.1 21.1 1518.3 30.5 1513.3 33.3C1508.3 36.1 1486.1 37.8 1480 36.7C1473.9 35.6 1471.7 29.5 1476.7 26.7z" fill="#e4e2de"/>
<path d="M1566.7 0C1568.4 -3.3 1578.3 -6.1 1580 0C1581.7 6.1 1579.5 28.4 1576.7 36.7C1573.9 45 1566.4 48.9 1563.3 50C1560.2 51.1 1557.2 48.3 1558.3 43.3C1559.4 38.3 1568.6 27.2 1570 20C1571.4 12.8 1565 3.3 1566.7 0z" fill="#e2e0dc"/>
<path d="M1413.1 708.4C1420.9 704.5 1440.8 703.4 1453 701.7C1465.2 700 1479.6 694.5 1486.3 698.4C1493 702.3 1492.9 716.1 1492.9 725C1492.9 733.9 1490.7 743.8 1486.3 751.6C1481.9 759.4 1474.1 767.2 1466.3 771.6C1458.5 776 1447.5 779.3 1439.7 778.2C1431.9 777.1 1425.2 770.5 1419.7 764.9C1414.2 759.3 1408.6 751.5 1406.4 744.9C1404.2 738.2 1405.3 731.1 1406.4 725C1407.5 718.9 1405.3 712.3 1413.1 708.4z" fill="#e9e7e3"/>
<path d="M1189.5 645.1C1191.7 641.8 1205 642.4 1212.8 635.2C1220.6 628 1230.5 606.9 1236.1 601.9C1241.6 596.9 1243.3 599.1 1246.1 605.2C1248.9 611.3 1253.2 629.6 1252.7 638.5C1252.2 647.4 1248.3 654.6 1242.8 658.5C1237.3 662.4 1226.7 662.4 1219.5 661.8C1212.3 661.2 1204.5 657.9 1199.5 655.1C1194.5 652.3 1187.3 648.4 1189.5 645.1z" fill="#e9e7e3"/>
<path d="M1146.3 685.1C1148 681.8 1155.2 682.8 1159.6 691.7C1164 700.6 1172.9 730.5 1172.9 738.3C1172.9 746.1 1163.5 742.7 1159.6 738.3C1155.7 733.9 1151.8 720.6 1149.6 711.7C1147.4 702.8 1144.6 688.4 1146.3 685.1z" fill="#e6e4df"/>
<path d="M1186.2 791.5C1188.4 789.8 1206.7 794.3 1212.8 798.2C1218.9 802.1 1225 813.1 1222.8 814.8C1220.6 816.5 1205.6 812.1 1199.5 808.2C1193.4 804.3 1184 793.2 1186.2 791.5z" fill="#e4e2de"/>
<path d="M1206.2 769.9L1259.4 769.9L1264.4 811.5L1242.8 814.8L1212.8 804.8L1204.5 784.9z" fill="#f3dcd3"/>
<path d="M1480 439.3C1484.5 436.2 1501.2 434.9 1506.7 437.7C1512.2 440.5 1515.5 451.8 1513.3 456C1511.1 460.2 1498.8 462.7 1493.3 462.7C1487.8 462.7 1482.2 459.9 1480 456C1477.8 452.1 1475.5 442.4 1480 439.3z" fill="#e4e2de"/>
<path d="M960 309L980 322.7L1006.7 339.3L1053.3 377.7L1076.7 397.7L1100 422.7L1120 446L1136.7 476L1150 509.3L1160 539.3L1165 551.7L1172.9 572L1182.9 591.9L1192.9 602.6L1212.8 605.9L1230.1 602.6L1237.8 596.9L1241.1 601.9L1226.1 618.5L1206.2 633.5L1189.5 641.8L1172.9 646.8L1159.6 655.1L1149.6 663.4L1141.3 673.4L1139.6 685.1L1146.3 705L1156.3 721.7L1166.3 741.6L1176.2 758.3L1182.9 778.2L1186.2 794.8L1199.5 808.2L1222.8 822.1L1236.1 818.1L1242.8 813.1L1259.4 818.1L1280 814.8L1280 828.1L960 828.1z" fill="#aad3df"/>
<path d="M960 309L980 322.7L1006.7 339.3L1053.3 377.7L1076.7 397.7L1100 422.7L1120 446L1136.7 476L1150 509.3L1160 539.3L1165 551.7L1172.9 572L1182.9 591.9L1192.9 602.6L1212.8 605.9L1230.1 602.6" fill="none" stroke="#86b9a0" stroke-width="1.6" stroke-linecap="round" stroke-linejoin="round"/>
<path d="M1236.1 818.1L1242.8 813.1L1259.4 818.1L1280 814.8L1280 828.1L1232.8 828.1z" fill="#b9c4dc"/>
<path d="M1481.7 275.7C1479.2 279.1 1473.7 289.3 1466.7 296C1459.8 302.7 1448.3 311 1440 316C1431.7 321 1422 321.6 1416.7 326C1411.4 330.4 1410.5 334.4 1408.3 342.7C1406.1 351 1405.8 364.9 1403.3 376C1400.8 387.1 1397.7 398.2 1393.3 409.3C1388.9 420.4 1383.4 432.7 1376.7 442.7C1370 452.7 1361.1 462.9 1353.3 469.3C1345.5 475.7 1337.2 479.3 1330 481C1322.8 482.7 1315.5 481 1310 479.3C1304.5 477.6 1301.7 473.2 1296.7 471C1291.7 468.8 1288.9 465.7 1280 466C1271.1 466.3 1251.6 469.9 1243.3 472.7C1235 475.5 1233.3 476.6 1230 482.7C1226.7 488.8 1225 497.8 1223.3 509.3C1221.6 520.8 1219.5 541.2 1220 551.7C1220.5 562.2 1224 565.9 1226.1 572C1228.2 578.1 1230.8 583.9 1232.8 588.6C1234.8 593.3 1237 598.3 1237.8 600.2" fill="none" stroke="#a6d3a6" stroke-width="8.5" stroke-linecap="round" stroke-linejoin="round"/>
<path d="M1520 10C1518.3 15 1511.7 28.9 1510 40C1508.3 51.1 1513.9 66.7 1510 76.7C1506.1 86.7 1493.4 92.8 1486.7 100C1480 107.2 1473.6 112.8 1470 120C1466.4 127.2 1465 134.4 1465 143.3C1465 152.2 1467.5 162.7 1470 173.3C1472.5 183.9 1477.8 195.6 1480 206.7C1482.2 217.8 1483 228.5 1483.3 240C1483.6 251.5 1484.5 266.4 1481.7 275.7C1478.9 285 1473.7 289.3 1466.7 296C1459.8 302.7 1448.3 311 1440 316C1431.7 321 1422 321.6 1416.7 326C1411.4 330.4 1410.5 334.4 1408.3 342.7C1406.1 351 1405.8 364.9 1403.3 376C1400.8 387.1 1397.7 398.2 1393.3 409.3C1388.9 420.4 1383.4 432.7 1376.7 442.7C1370 452.7 1361.1 462.9 1353.3 469.3C1345.5 475.7 1337.2 479.3 1330 481C1322.8 482.7 1315.5 481 1310 479.3C1304.5 477.6 1301.7 473.2 1296.7 471C1291.7 468.8 1288.9 465.7 1280 466C1271.1 466.3 1251.6 469.9 1243.3 472.7C1235 475.5 1233.3 476.6 1230 482.7C1226.7 488.8 1225 497.8 1223.3 509.3C1221.6 520.8 1219.5 541.2 1220 551.7C1220.5 562.2 1224 565.9 1226.1 572C1228.2 578.1 1230.8 583.9 1232.8 588.6C1234.8 593.3 1237 598.3 1237.8 600.2" fill="none" stroke="#aad3df" stroke-width="4.6" stroke-linecap="round" stroke-linejoin="round"/>
<path d="M1333.3 76.7C1331.6 74.5 1326.6 67.8 1323.3 63.3C1320 58.8 1316.1 55 1313.3 50C1310.5 45 1308.1 38.3 1306.7 33.3C1305.3 28.3 1304.5 25.6 1305 20C1305.5 14.4 1309.2 3.3 1310 0" fill="none" stroke="#b4dbae" stroke-width="8" stroke-linecap="round" stroke-linejoin="round"/>
<path d="M1333.3 76.7C1331.6 74.5 1326.6 67.8 1323.3 63.3C1320 58.8 1316.1 55 1313.3 50C1310.5 45 1308.1 38.3 1306.7 33.3C1305.3 28.3 1304.5 25.6 1305 20C1305.5 14.4 1309.2 3.3 1310 0" fill="none" stroke="#aad3df" stroke-width="1.6" stroke-linecap="round" stroke-linejoin="round"/>
<path d="M1566.7 0C1565 5.5 1561.2 22.2 1556.7 33.3C1552.2 44.4 1546.1 56.7 1540 66.7C1533.9 76.7 1527.8 84.4 1520 93.3C1512.2 102.2 1501.6 112.2 1493.3 120C1485 127.8 1473.9 136.7 1470 140" fill="none" stroke="#aad3df" stroke-width="2.2" stroke-linecap="round" stroke-linejoin="round"/>
<path d="M1510 66.7C1510.5 68.9 1515 76.1 1513.3 80C1511.6 83.9 1502.2 88.3 1500 90" fill="none" stroke="#aad3df" stroke-width="2" stroke-linecap="round" stroke-linejoin="round"/>
<path d="M1262.5 210L1230 217.5L1211.2 228.8L1198.8 242.5L1193 261.2L1200 267L1293.8 267L1300 257.5L1307.5 242.5L1317.5 225L1325 212.5L1320 207.5L1300 205L1275 185L1263.8 185z" fill="#eef0d5"/>
<path d="M1220 232.5L1260 227.5L1265 245L1250 265L1217.5 262.5z" fill="url(#wet2)" opacity=".6"/>
<path d="M1210 402C1215.4 396.2 1229.2 392 1240 392C1250.8 392 1265 397.8 1275 402C1285 406.2 1295 408.7 1300 417C1305 425.3 1305.4 444.3 1305 452C1304.6 459.7 1302.5 460.7 1297.5 463.2C1292.5 465.7 1282.9 465.3 1275 467C1267.1 468.7 1257.1 471.3 1250 473.2C1242.9 475.1 1237.5 479.6 1232.5 478.2C1227.5 476.8 1223.8 469.3 1220 464.5C1216.2 459.7 1212.1 455.8 1210 449.5C1207.9 443.2 1207.5 434.9 1207.5 427C1207.5 419.1 1204.6 407.8 1210 402z" fill="#dbf0cb"/>
<path d="M1235 479.5C1243.5 477 1271.7 472 1280 474.5C1288.3 477 1285.8 489.1 1285 494.5C1284.2 499.9 1279.2 503.2 1275 507C1270.8 510.8 1264.2 509.5 1260 517C1255.8 524.5 1253.3 542.4 1250 552C1246.7 561.6 1243.3 571.2 1240 574.5C1236.7 577.8 1232.7 575.8 1230 572C1227.3 568.2 1224.6 561.2 1223.8 552C1223 542.8 1224.2 527.4 1225 517C1225.8 506.6 1227.1 495.8 1228.8 489.5C1230.5 483.2 1226.5 482 1235 479.5z" fill="#dbf0cb"/>
<path d="M1147.5 402C1149.4 397.4 1159.2 395.8 1165 397C1170.8 398.2 1176.7 404.5 1182.5 409.5C1188.3 414.5 1196.2 421.6 1200 427C1203.8 432.4 1207.5 439.9 1205 442C1202.5 444.1 1190.8 442 1185 439.5C1179.2 437 1175.2 429.5 1170 427C1164.8 424.5 1157.5 428.7 1153.8 424.5C1150 420.3 1145.6 406.6 1147.5 402z" fill="#dcf1cc"/>
<path d="M1282.5 479.5C1284.2 479.9 1289.6 494.1 1290 499.5C1290.4 504.9 1287.5 507.4 1285 512C1282.5 516.6 1276.7 522 1275 527C1273.3 532 1276.7 538.2 1275 542C1273.3 545.8 1268.3 549.5 1265 549.5C1261.7 549.5 1256.9 545.8 1255 542C1253.1 538.2 1252.5 531.2 1253.8 527C1255 522.8 1259.4 520.3 1262.5 517C1265.6 513.7 1269.6 510.3 1272.5 507C1275.4 503.7 1278.3 501.6 1280 497C1281.7 492.4 1280.8 479.1 1282.5 479.5z" fill="#b9d9a8" stroke="#9ccf9c" stroke-width="1.5" stroke-linejoin="round"/>
<path d="M1188 263C1188.4 259.4 1194 261.9 1197 266C1200 270.1 1203.3 281 1206.2 287.5C1209.1 294 1211.9 298.8 1214.5 305C1217.1 311.2 1219.8 318.3 1222 325C1224.2 331.7 1226.1 338.8 1227.5 345C1228.9 351.2 1229.9 357.2 1230.5 362.5C1231.1 367.8 1231.9 374.4 1231 376.8C1230.1 379.2 1226.5 379.2 1225 376.8C1223.5 374.4 1223.3 367.8 1222 362.5C1220.7 357.2 1218.9 351.2 1217 345C1215.1 338.8 1212.8 331.7 1210.5 325C1208.2 318.3 1205.7 311.2 1203 305C1200.3 298.8 1197 294.5 1194.5 287.5C1192 280.5 1187.6 266.6 1188 263z" fill="#aad3df"/>
<path d="M1227.5 377C1227.3 378.7 1227.5 382.4 1226.2 387C1225 391.6 1222.3 398.7 1220 404.5C1217.7 410.3 1214.5 415.8 1212.5 422C1210.5 428.2 1208.2 436.6 1208 442C1207.8 447.4 1208.8 450.3 1211.2 454.5C1213.6 458.7 1219 463.2 1222.5 467C1226 470.8 1230.8 475.3 1232.5 477" fill="none" stroke="#aad3df" stroke-width="3.5" stroke-linecap="round" stroke-linejoin="round"/>
<path d="M1172.5 399.5C1174.2 401.6 1178.8 407.4 1182.5 412C1186.2 416.6 1190.8 422 1195 427C1199.2 432 1205.4 439.5 1207.5 442" fill="none" stroke="#aad3df" stroke-width="2.5" stroke-linecap="round" stroke-linejoin="round"/>
<path d="M1285 275C1284.2 277.1 1280 282.5 1280 287.5C1280 292.5 1285.8 299.6 1285 305C1284.2 310.4 1278.3 315.8 1275 320C1271.7 324.2 1267.1 325.8 1265 330C1262.9 334.2 1263.3 340 1262.5 345C1261.7 350 1261.2 354.7 1260 360C1258.8 365.3 1256.2 372.7 1255 376.8C1253.8 380.9 1253.8 381.6 1252.5 384.5C1251.2 387.4 1250.8 391.2 1247.5 394.5C1244.2 397.8 1237.1 400.3 1232.5 404.5C1227.9 408.7 1223.8 414.1 1220 419.5C1216.2 424.9 1211.7 434.1 1210 437" fill="none" stroke="#aad3df" stroke-width="2.5" stroke-linecap="round" stroke-linejoin="round"/>
<path d="M1235 439.5C1236.7 437 1243.3 434.5 1250 432C1256.7 429.5 1268.3 426.2 1275 424.5C1281.7 422.8 1287.1 421.2 1290 422C1292.9 422.8 1295 427 1292.5 429.5C1290 432 1281.2 434.5 1275 437C1268.8 439.5 1260.8 442.8 1255 444.5C1249.2 446.2 1243.3 447.8 1240 447C1236.7 446.2 1233.3 442 1235 439.5z" fill="#aad3df"/>
<path d="M1227.5 317.5C1229.7 315 1236.7 313.8 1240 315C1243.3 316.2 1246.5 321.2 1247.5 325C1248.5 328.8 1248.7 335.2 1246.2 337.5C1243.7 339.8 1235.7 340.1 1232.5 338.8C1229.3 337.6 1227.8 333.6 1227 330C1226.2 326.4 1225.3 320 1227.5 317.5z" fill="#b3b5e6"/>
<path d="M1213.8 287.5L1219.5 287L1220.5 294.5L1214.5 295z" fill="#aad3df"/>
<path d="M1227.5 290L1233.8 289.5L1234 295L1228 295.5z" fill="#aad3df"/>
<path d="M1236.2 484.5C1239.5 480.3 1253.7 479.4 1257.5 483.2C1261.3 486.9 1262.1 502.8 1258.8 507C1255.5 511.2 1241.3 511.9 1237.5 508.2C1233.7 504.4 1232.9 488.7 1236.2 484.5z" fill="#aad3df"/>
<path d="M1232.5 519.5C1234.8 516 1245 514.9 1247.5 518.2C1250 521.5 1249.8 536 1247.5 539.5C1245.2 543 1236.3 542.8 1233.8 539.5C1231.3 536.2 1230.2 523 1232.5 519.5z" fill="#aad3df"/>
<path d="M1230 547C1232.7 545.1 1244.6 545.3 1247.5 547C1250.4 548.7 1250.2 555.1 1247.5 557C1244.8 558.9 1234.1 559.9 1231.2 558.2C1228.3 556.5 1227.3 548.9 1230 547z" fill="#aad3df"/>
<path d="M1135 402C1136.5 400.3 1143.1 399.6 1145 400.8C1146.9 402.1 1147.7 407.8 1146.2 409.5C1144.7 411.2 1138.1 412.1 1136.2 410.8C1134.3 409.6 1133.5 403.7 1135 402z" fill="#c4e3ee"/>
<pattern id="hz" width="6" height="3.4" patternUnits="userSpaceOnUse"><rect width="6" height="3.4" fill="#fff"/><rect width="6" height="1.3" fill="#b7d8ec"/></pattern>
<path d="M1195 472C1197.7 464.1 1203.7 456.6 1206.2 454.5C1208.7 452.4 1208.1 454.9 1210 459.5C1211.9 464.1 1216.7 474.1 1217.5 482C1218.3 489.9 1216.7 499.5 1215 507C1213.3 514.5 1210 525.3 1207.5 527C1205 528.7 1202.9 521.2 1200 517C1197.1 512.8 1190.8 509.5 1190 502C1189.2 494.5 1192.3 479.9 1195 472z" fill="url(#hz)"/>
<path d="M1300 377.7L1343.3 376L1346.7 392.7L1351.7 416L1363.3 426L1360 442.7L1346.7 462.7L1333.3 476L1316.7 472.7L1313.3 456L1320 416L1320 389.3L1300 386z" fill="#aad3df"/>
<path d="M1326.7 341L1335 334.3L1340.7 342.7L1333.3 351z" fill="#aad3df"/>
<path d="M1280 422.7C1282.2 420.5 1290 423.8 1293.3 426C1296.6 428.2 1301.1 433.2 1300 436C1298.9 438.8 1290 442.1 1286.7 442.7C1283.4 443.2 1281.1 442.6 1280 439.3C1278.9 436 1277.8 424.9 1280 422.7z" fill="#aad3df"/>
<path d="M1370 276C1370.5 281 1370 298.8 1373.3 306C1376.6 313.2 1384.2 314.9 1390 319.3C1395.8 323.8 1405.2 330.5 1408.3 332.7" fill="none" stroke="#a6d3a6" stroke-width="2" stroke-linecap="round" stroke-linejoin="round"/>
<path d="M1313.3 319.3C1314.1 322.6 1317.2 332.6 1318.3 339.3C1319.4 346 1323 354.3 1320 359.3C1317 364.3 1305.5 366.5 1300 369.3C1294.5 372.1 1289.5 369.3 1286.7 376C1283.9 382.7 1280.5 402.1 1283.3 409.3C1286.1 416.5 1299.4 412.1 1303.3 419.3C1307.2 426.5 1307.2 444.4 1306.7 452.7C1306.2 461 1301.1 466.5 1300 469.3" fill="none" stroke="#a6d3a6" stroke-width="2" stroke-linecap="round" stroke-linejoin="round"/>
<path d="M1513.3 409.3C1514.7 406.8 1522.8 404.6 1526.7 402.7C1530.6 400.8 1534.2 397.4 1536.7 397.7C1539.2 398 1542.3 401.8 1541.7 404.3C1541.1 406.8 1535.8 410.2 1533.3 412.7C1530.8 415.2 1529.2 418.5 1526.7 419.3C1524.2 420.1 1520.5 419.4 1518.3 417.7C1516.1 416 1511.9 411.8 1513.3 409.3z" fill="#aad3df"/>
<path d="M1801.7 306C1803.4 302.7 1809.1 300.7 1813.3 299.3C1817.5 297.9 1822.2 297.7 1826.7 297.7C1831.2 297.7 1836.4 301.2 1840 299.3C1843.6 297.4 1846.1 289.9 1848.3 286C1850.5 282.1 1851.9 277.1 1853.3 276C1854.7 274.9 1857.2 276 1856.7 279.3C1856.2 282.6 1852.2 291.3 1850 296C1847.8 300.7 1842.8 303.8 1843.3 307.7C1843.8 311.6 1850.2 316.2 1853.3 319.3C1856.4 322.4 1860.9 324.1 1861.7 326C1862.5 327.9 1860.8 331 1858.3 331C1855.8 331 1849.8 329.1 1846.7 326C1843.7 322.9 1842.8 316.3 1840 312.7C1837.2 309.1 1833.9 305.4 1830 304.3C1826.1 303.2 1820.3 304.1 1816.7 306C1813.1 307.9 1808.9 311 1808.3 316C1807.7 321 1811.9 331 1813.3 336C1814.7 341 1816.7 343.8 1816.7 346C1816.7 348.2 1814.7 351.5 1813.3 349.3C1811.9 347.1 1810 337.7 1808.3 332.7C1806.6 327.7 1804.4 323.8 1803.3 319.3C1802.2 314.9 1800 309.3 1801.7 306z" fill="#aad3df"/>
<path d="M1753.3 312.7C1754.3 310.9 1758 307.4 1760 307.7C1762 308 1765 312.4 1765 314.3C1765 316.2 1761.8 318.6 1760 319.3C1758.2 320 1755.1 319.8 1754 318.7C1752.9 317.6 1752.3 314.5 1753.3 312.7z" fill="#aad3df"/>
<path d="M1820 590.3C1820.5 588.1 1827.2 585 1833.3 582C1839.4 579 1851.7 576.5 1856.7 572C1861.7 567.5 1861.6 558.6 1863.3 555.3C1865 552 1863.9 552.5 1866.7 552C1869.5 551.5 1877.2 548.7 1880 552C1882.8 555.3 1883.8 565.9 1883.3 572C1882.8 578.1 1876.7 583.7 1876.7 588.7C1876.7 593.7 1883.9 599 1883.3 602C1882.7 605 1876.6 607 1873.3 607C1870 607 1866.6 602.3 1863.3 602C1860 601.7 1857.2 606.4 1853.3 605.3C1849.4 604.2 1843.9 597 1840 595.3C1836.1 593.6 1833.3 596.1 1830 595.3C1826.7 594.5 1819.5 592.5 1820 590.3z" fill="#aad3df"/>
<path d="M1763.3 638.7C1764.4 635.9 1769.4 632.8 1773.3 632C1777.2 631.2 1785 631.8 1786.7 633.7C1788.4 635.7 1786.6 641.2 1783.3 643.7C1780 646.2 1770 649.5 1766.7 648.7C1763.4 647.9 1762.2 641.5 1763.3 638.7z" fill="#aad3df"/>
<path d="M1776.4 758.2L1780.9 750.9L1788.2 750L1799.1 754.5L1806.4 759.1L1813.6 755.5L1819.1 745.5L1824.5 736.4L1828.2 734.5L1830 743.6L1833.6 747.3L1840.9 747.3L1839.1 754.5L1831.8 758.2L1828.2 765.5L1831.8 772.7L1842.7 774.5L1850 770.9L1857.3 767.3L1864.5 769.1L1875.5 754.5L1877.3 761.8L1882.7 767.3L1890 780L1886.4 790.9L1879.1 792.7L1868.2 789.1L1859.1 790.9L1848.2 792.7L1840.9 796.4L1831.8 790.9L1824.5 783.6L1817.3 781.8L1810 785.5L1804.5 789.1L1800.9 794.5L1793.6 800L1784.5 803.6L1777.3 801.8L1782.7 794.5L1788.2 787.3L1786.4 780L1777.3 774.5L1775.5 765.5z" fill="#aad3df"/>
<path d="M1742.7 741.8C1744.2 741.2 1749.1 737 1751.8 738.2C1754.5 739.4 1756.1 746.1 1759.1 749.1C1762.1 752.1 1767.1 754.7 1770 756.4C1772.9 758.1 1775.3 758.6 1776.4 759.1" fill="none" stroke="#aad3df" stroke-width="1.4" stroke-linecap="round" stroke-linejoin="round"/>
<path d="M1820 590.3C1816.7 592.2 1805.5 597.8 1800 602C1794.5 606.2 1788.9 610 1786.7 615.3C1784.5 620.6 1786.7 630.6 1786.7 633.7" fill="none" stroke="#aad3df" stroke-width="1.6" stroke-linecap="round" stroke-linejoin="round"/>
<path d="M1766.7 648.7C1765 651.5 1757.8 659.8 1756.7 665.3C1755.6 670.8 1761.1 677.5 1760 682C1758.9 686.5 1751.1 688.1 1750 692C1748.9 695.9 1756.1 702 1753.3 705.3C1750.5 708.6 1740 709.8 1733.3 712C1726.6 714.2 1717.7 716.5 1713.3 718.7C1708.9 720.9 1707.8 724.2 1706.7 725.3" fill="none" stroke="#aad3df" stroke-width="1.4" stroke-linecap="round" stroke-linejoin="round"/>
<path d="M1918.7 509.3C1915.6 509.9 1904.2 511 1900 512.7C1895.8 514.4 1896.1 515.4 1893.3 519.3C1890.5 523.2 1886.6 530.6 1883.3 536C1880 541.4 1875 549.1 1873.3 551.7" fill="none" stroke="#aad3df" stroke-width="1.4" stroke-linecap="round" stroke-linejoin="round"/>
<path d="M1836.7 0C1839.5 2.2 1847.2 10.5 1853.3 13.3C1859.4 16.1 1868.3 14.5 1873.3 16.7C1878.3 18.9 1878.8 23.4 1883.3 26.7C1887.8 30 1894.1 32.8 1900 36.7C1905.9 40.6 1915.6 47.8 1918.7 50" fill="none" stroke="#aad3df" stroke-width="1.5" stroke-linecap="round" stroke-linejoin="round"/>
<path d="M1796.7 141.7C1802.8 140.3 1818.9 135.8 1833.3 133.3C1847.7 130.8 1869.1 123.4 1883.3 126.7C1897.5 130 1912.8 148.9 1918.7 153.3" fill="none" stroke="#aad3df" stroke-width="1.6" stroke-dasharray="6 4"/>
<path d="M1257.7 698.4C1259.1 702.8 1265.8 717.2 1266.1 725C1266.4 732.8 1259.4 738.2 1259.4 744.9C1259.4 751.5 1263.3 759.9 1266.1 764.9C1268.9 769.9 1275.5 770.5 1276 774.9C1276.5 779.3 1270.5 788.7 1269.4 791.5" fill="none" stroke="#b5daea" stroke-width="1.4" stroke-linecap="round" stroke-linejoin="round"/>
<path d="M1334.9 783.2L1339.9 781.5L1340.5 789.9L1335.9 791.5z" fill="#b5daea"/>
<path d="M1361.5 776.6L1367.2 775.6L1367.2 780.9L1362.2 781.5z" fill="#b5daea"/>
<path d="M1512.9 816.5L1526.2 814.8L1527.8 824.8L1514.5 825.5z" fill="#b5daea"/>
<path d="M1853.3 805.3C1852.8 802.5 1848.9 793.1 1850 788.7C1851.1 784.3 1855.5 780.1 1860 778.7C1864.5 777.3 1871.7 777.5 1876.7 780.3C1881.7 783.1 1886.1 791.1 1890 795.3C1893.9 799.5 1895 802.8 1900 805.3C1905 807.8 1916.4 809.5 1919.7 810.3" fill="none" stroke="#8fc7a0" stroke-width="3" stroke-linecap="round" stroke-linejoin="round"/>
<path d="M960 143.3C963.3 139.4 972.8 128.9 980 120C987.2 111.1 995 98.9 1003.3 90C1011.6 81.1 1022.2 73.4 1030 66.7C1037.8 60 1045 55 1050 50C1055 45 1058.3 38.9 1060 36.7" fill="none" stroke="#bdbbb6" stroke-width="1" stroke-linecap="round" stroke-linejoin="round"/>
<path d="M1067.3 61.7C1068.6 65.9 1072.6 75.9 1075 86.7C1077.4 97.5 1080.2 114.5 1081.7 126.7C1083.2 138.9 1083.2 150 1084 160C1084.8 170 1085.2 180.9 1086.7 186.7C1088.2 192.5 1092.2 193.6 1093.3 195" fill="none" stroke="#bdbbb6" stroke-width="1" stroke-linecap="round" stroke-linejoin="round"/>
<path d="M1090 36.7C1094.5 36.1 1107.2 33.9 1116.7 33.3C1126.2 32.7 1137.3 35.5 1146.7 33.3C1156.1 31.1 1165.5 24.4 1173.3 20C1181.1 15.6 1187.7 10 1193.3 6.7C1198.9 3.4 1204.5 1.1 1206.7 0" fill="none" stroke="#bdbbb6" stroke-width="1" stroke-linecap="round" stroke-linejoin="round"/>
<path d="M1206.7 0C1209.5 2.8 1218.3 12.5 1223.3 16.7C1228.3 20.9 1234.5 23.6 1236.7 25" fill="none" stroke="#bdbbb6" stroke-width="1" stroke-linecap="round" stroke-linejoin="round"/>
<path d="M1279.7 0C1279.2 3.3 1278 12.2 1276.7 20C1275.4 27.8 1272.8 40.6 1271.7 46.7C1270.6 52.8 1270.3 55 1270 56.7" fill="none" stroke="#bdbbb6" stroke-width="1" stroke-linecap="round" stroke-linejoin="round"/>
<path d="M1216.7 65C1218.4 68 1223.4 70.2 1226.7 83.3C1230 96.3 1235.6 131.1 1236.7 143.3C1237.8 155.5 1233.9 154.5 1233.3 156.7" fill="none" stroke="#bdbbb6" stroke-width="0.8" stroke-linecap="round" stroke-linejoin="round"/>
<path d="M1280 70C1282.8 71.7 1291.2 75 1296.7 80C1302.2 85 1310.5 96.7 1313.3 100" fill="none" stroke="#bdbbb6" stroke-width="1" stroke-linecap="round" stroke-linejoin="round"/>
<path d="M1330 0C1332.8 5.5 1339.5 22.2 1346.7 33.3C1353.9 44.4 1367.2 58.9 1373.3 66.7C1379.4 74.5 1381.6 77.8 1383.3 80" fill="none" stroke="#bdbbb6" stroke-width="1" stroke-linecap="round" stroke-linejoin="round"/>
<path d="M1599.7 100C1596.4 94.5 1585 76.7 1580 66.7C1575 56.7 1571.7 44.5 1570 40" fill="none" stroke="#bdbbb6" stroke-width="1" stroke-linecap="round" stroke-linejoin="round"/>
<path d="M1546.7 103.3C1546.7 106.1 1543.4 113.9 1546.7 120C1550 126.1 1560.6 132.2 1566.7 140C1572.8 147.8 1583.9 156.7 1583.3 166.7C1582.7 176.7 1568.3 191.1 1563.3 200C1558.3 208.9 1555 216.7 1553.3 220" fill="none" stroke="#bdbbb6" stroke-width="1" stroke-linecap="round" stroke-linejoin="round"/>
<path d="M1600 100C1603.3 102.2 1614.5 106.6 1620 113.3C1625.5 120 1631.1 135.6 1633.3 140" fill="none" stroke="#bdbbb6" stroke-width="1" stroke-linecap="round" stroke-linejoin="round"/>
<path d="M1660 96.7C1665 98.9 1683.9 112.8 1690 110C1696.1 107.2 1691.7 88.3 1696.7 80C1701.7 71.7 1716.1 63.3 1720 60" fill="none" stroke="#bdbbb6" stroke-width="1" stroke-linecap="round" stroke-linejoin="round"/>
<path d="M1670 146.7C1675 145.6 1689.5 141.7 1700 140C1710.5 138.3 1723.3 137 1733.3 136.7C1743.3 136.4 1755.5 138 1760 138.3" fill="none" stroke="#bdbbb6" stroke-width="1" stroke-linecap="round" stroke-linejoin="round"/>
<path d="M1773.3 146.7C1768.9 149.5 1754.5 155 1746.7 163.3C1738.9 171.6 1732.3 187.2 1726.7 196.7C1721.1 206.1 1715.5 216.1 1713.3 220" fill="none" stroke="#bdbbb6" stroke-width="1" stroke-linecap="round" stroke-linejoin="round"/>
<path d="M1786.7 110C1788.9 105.5 1791.1 92.2 1800 83.3C1808.9 74.4 1828.9 65.6 1840 56.7C1851.1 47.8 1862.2 34.5 1866.7 30" fill="none" stroke="#bdbbb6" stroke-width="1" stroke-linecap="round" stroke-linejoin="round"/>
<path d="M1776.7 0C1791.7 15.5 1843.9 68.8 1866.7 93.3C1889.5 117.8 1904.6 134.5 1913.3 146.7C1922 158.9 1917.8 163.4 1918.7 166.7" fill="none" stroke="#bdbbb6" stroke-width="0.8" stroke-linecap="round" stroke-linejoin="round"/>
<path d="M1820 171.7C1825.5 169.8 1841.6 161.4 1853.3 160C1865 158.6 1879.1 160.5 1890 163.3C1900.9 166.1 1913.9 174.5 1918.7 176.7" fill="none" stroke="#bdbbb6" stroke-width="1" stroke-linecap="round" stroke-linejoin="round"/>
<path d="M1746.7 103.3C1751.1 105 1762.2 111.3 1773.3 113.3C1784.4 115.2 1798.3 117.2 1813.3 115C1828.3 112.8 1845.7 103.3 1863.3 100C1880.9 96.7 1909.5 95.8 1918.7 95" fill="none" stroke="#bdbbb6" stroke-width="1.2" stroke-linecap="round" stroke-linejoin="round"/>
<path d="M1620 336C1623.9 341.6 1636.6 361.5 1643.3 369.3C1650 377.1 1651.1 378.8 1660 382.7C1668.9 386.6 1688.4 388.8 1696.7 392.7C1705 396.6 1701.7 402.4 1710 406C1718.3 409.6 1736.2 408.2 1746.7 414.3C1757.2 420.4 1766.6 436.9 1773.3 442.7C1780 448.5 1781.1 446 1786.7 449.3C1792.3 452.6 1798.9 459.9 1806.7 462.7C1814.5 465.5 1825.5 461.6 1833.3 466C1841.1 470.4 1845 481 1853.3 489.3C1861.6 497.6 1877.7 509.3 1883.3 516C1888.9 522.7 1886.1 527.1 1886.7 529.3" fill="none" stroke="#bdbbb6" stroke-width="1" stroke-linecap="round" stroke-linejoin="round"/>
<path d="M1676.7 276C1672.2 282.7 1655.6 304.9 1650 316C1644.4 327.1 1644.4 333.8 1643.3 342.7C1642.2 351.6 1643.3 364.9 1643.3 369.3" fill="none" stroke="#bdbbb6" stroke-width="1" stroke-linecap="round" stroke-linejoin="round"/>
<path d="M1633.3 402.7C1636.6 408.2 1647.7 426 1653.3 436C1658.9 446 1660 454.9 1666.7 462.7C1673.4 470.5 1683.9 476 1693.3 482.7C1702.7 489.4 1712.7 499.4 1723.3 502.7C1733.9 506 1751.1 502.7 1756.7 502.7" fill="none" stroke="#bdbbb6" stroke-width="1" stroke-linecap="round" stroke-linejoin="round"/>
<path d="M1796.7 306C1796.7 312.1 1793.9 332.7 1796.7 342.7C1799.5 352.7 1807.2 361.6 1813.3 366C1819.4 370.4 1822.2 365.4 1833.3 369.3C1844.4 373.2 1868.9 386 1880 389.3C1891.1 392.6 1893.5 392.1 1900 389.3C1906.5 386.5 1915.6 375.5 1918.7 372.7" fill="none" stroke="#bdbbb6" stroke-width="1" stroke-linecap="round" stroke-linejoin="round"/>
<path d="M1820 369.3C1814.5 371.5 1796.7 377.1 1786.7 382.7C1776.7 388.3 1766.7 397.1 1760 402.7C1753.3 408.2 1748.9 413.8 1746.7 416" fill="none" stroke="#bdbbb6" stroke-width="1" stroke-linecap="round" stroke-linejoin="round"/>
<path d="M1780 449.3C1777.2 450.4 1766.1 449.3 1763.3 456C1760.5 462.7 1764.4 480.4 1763.3 489.3C1762.2 498.2 1758.6 498.9 1756.7 509.3C1754.8 519.7 1752.5 544.6 1751.7 551.7" fill="none" stroke="#bdbbb6" stroke-width="1" stroke-linecap="round" stroke-linejoin="round"/>
<path d="M1803.3 459.3C1798.3 463.2 1780.5 475.5 1773.3 482.7C1766.1 489.9 1762.2 499.4 1760 502.7" fill="none" stroke="#bdbbb6" stroke-width="1" stroke-linecap="round" stroke-linejoin="round"/>
<path d="M1666.7 462.7C1667 470.5 1667.8 494.5 1668.3 509.3C1668.8 524.1 1669.7 544.6 1670 551.7" fill="none" stroke="#bdbbb6" stroke-width="1" stroke-linecap="round" stroke-linejoin="round"/>
<path d="M1850 489.3C1848.3 493.8 1843.9 505.6 1840 516C1836.1 526.4 1828.9 545.8 1826.7 551.7" fill="none" stroke="#bdbbb6" stroke-width="1" stroke-linecap="round" stroke-linejoin="round"/>
<path d="M1756.7 509.3C1760.6 512.6 1772.8 522.2 1780 529.3C1787.2 536.4 1796.7 548 1800 551.7" fill="none" stroke="#bdbbb6" stroke-width="1" stroke-linecap="round" stroke-linejoin="round"/>
<path d="M1600 534.3C1606.7 535.1 1627.8 537.3 1640 539.3C1652.2 541.2 1668 548.8 1673.3 546C1678.6 543.2 1669.5 533 1671.7 522.7C1673.9 512.4 1682 491.5 1686.7 484.3C1691.4 477.1 1695 483.7 1700 479.3C1705 474.9 1708.9 462.7 1716.7 457.7C1724.5 452.7 1736.2 451 1746.7 449.3C1757.2 447.6 1768.9 447.1 1780 447.7C1791.1 448.3 1802.2 452.1 1813.3 452.7C1824.4 453.2 1838.4 454.3 1846.7 451C1855 447.7 1860 439.6 1863.3 432.7C1866.6 425.8 1863.4 416.5 1866.7 409.3C1870 402.1 1878.9 393.2 1883.3 389.3C1887.7 385.4 1889.4 382.7 1893.3 386C1897.2 389.3 1902.5 404.6 1906.7 409.3C1910.9 414 1916.7 413.5 1918.7 414.3" fill="none" stroke="#cfa8cf" stroke-width="1.3" stroke-dasharray="7 2 2 2"/>
<path d="M1646.7 558.7C1650 562.6 1657.8 575.9 1666.7 582C1675.6 588.1 1692.8 588.6 1700 595.3C1707.2 602 1710 613.1 1710 622C1710 630.9 1701.7 644.2 1700 648.7" fill="none" stroke="#bdbbb6" stroke-width="1" stroke-linecap="round" stroke-linejoin="round"/>
<path d="M1748.3 552C1748.9 558.7 1750.9 579.2 1751.7 592C1752.5 604.8 1753 622.6 1753.3 628.7" fill="none" stroke="#bdbbb6" stroke-width="1" stroke-linecap="round" stroke-linejoin="round"/>
<path d="M1753.3 628.7C1750 634.2 1740.5 648.7 1733.3 662C1726.1 675.3 1715 698.2 1710 708.7C1705 719.2 1708.3 720.3 1703.3 725.3C1698.3 730.3 1691.7 729.2 1680 738.7C1668.3 748.2 1641.1 774.8 1633.3 782" fill="none" stroke="#bdbbb6" stroke-width="1" stroke-linecap="round" stroke-linejoin="round"/>
<path d="M1766.7 675.3C1772.2 678.1 1790 683.7 1800 692C1810 700.3 1818.9 717.5 1826.7 725.3C1834.5 733.1 1831.2 733.7 1846.7 738.7C1862.2 743.7 1907.5 752.5 1919.7 755.3" fill="none" stroke="#bdbbb6" stroke-width="1" stroke-linecap="round" stroke-linejoin="round"/>
<path d="M1776.7 655.3C1786.1 655.3 1818.3 655.8 1833.3 655.3C1848.3 654.8 1852.3 650.3 1866.7 652C1881.1 653.7 1910.9 663.1 1919.7 665.3" fill="none" stroke="#bdbbb6" stroke-width="1" stroke-linecap="round" stroke-linejoin="round"/>
<path d="M1773.3 678.7C1773.3 681.5 1776.1 690.3 1773.3 695.3C1770.5 700.3 1760 701.5 1756.7 708.7C1753.4 715.9 1750.5 729.3 1753.3 738.7C1756.1 748.1 1771.1 754.2 1773.3 765.3C1775.5 776.4 1767.8 798.6 1766.7 805.3" fill="none" stroke="#bdbbb6" stroke-width="1" stroke-linecap="round" stroke-linejoin="round"/>
<path d="M1856.7 665.3C1859.5 669.8 1871.6 682 1873.3 692C1875 702 1870 717.5 1866.7 725.3C1863.4 733.1 1855.5 736.5 1853.3 738.7" fill="none" stroke="#bdbbb6" stroke-width="1" stroke-linecap="round" stroke-linejoin="round"/>
<path d="M1919.7 602C1913.6 604.2 1894.4 610.8 1883.3 615.3C1872.2 619.8 1860.5 622.6 1853.3 628.7C1846.1 634.8 1842.2 648.1 1840 652" fill="none" stroke="#bdbbb6" stroke-width="1" stroke-linecap="round" stroke-linejoin="round"/>
<path d="M1600 602C1603.3 600.9 1615 600.3 1620 595.3C1625 590.3 1625.5 578.1 1630 572C1634.5 565.9 1643.9 560.9 1646.7 558.7" fill="none" stroke="#bdbbb6" stroke-width="1" stroke-linecap="round" stroke-linejoin="round"/>
<path d="M1703.3 725.3C1703.9 734.8 1706.1 767.5 1706.7 782C1707.3 796.5 1706.7 807 1706.7 812" fill="none" stroke="#bdbbb6" stroke-width="1" stroke-linecap="round" stroke-linejoin="round"/>
<path d="M1813.3 552L1820 572" fill="none" stroke="#bdbbb6" stroke-width="1" stroke-linecap="round" stroke-linejoin="round"/>
<path d="M1440 479.3C1444.5 476.5 1458.9 467.7 1466.7 462.7C1474.5 457.7 1482.3 452.6 1486.7 449.3C1491.1 446 1492.2 443.8 1493.3 442.7" fill="none" stroke="#bdbbb6" stroke-width="1" stroke-linecap="round" stroke-linejoin="round"/>
<path d="M1500 462.7C1503.3 467.1 1514.5 479.3 1520 489.3C1525.5 499.3 1531.1 517.1 1533.3 522.7" fill="none" stroke="#bdbbb6" stroke-width="1" stroke-linecap="round" stroke-linejoin="round"/>
<path d="M1506.7 456C1512.2 457.1 1527.8 461.6 1540 462.7C1552.2 463.8 1573.3 462.7 1580 462.7" fill="none" stroke="#bdbbb6" stroke-width="1" stroke-linecap="round" stroke-linejoin="round"/>
<path d="M1496.7 439.3C1499.5 437.1 1505 429.9 1513.3 426C1521.6 422.1 1535.6 419.9 1546.7 416C1557.8 412.1 1571.2 407.1 1580 402.7C1588.8 398.2 1596.4 391.5 1599.7 389.3" fill="none" stroke="#bdbbb6" stroke-width="1" stroke-linecap="round" stroke-linejoin="round"/>
<path d="M1480 419.3C1477.8 422.1 1470 428.8 1466.7 436C1463.4 443.2 1460 457.1 1460 462.7C1460 468.2 1465.6 468.2 1466.7 469.3" fill="none" stroke="#bdbbb6" stroke-width="0.8" stroke-linecap="round" stroke-linejoin="round"/>
<path d="M1370 539.3C1373.3 536.5 1383.9 527.7 1390 522.7C1396.1 517.7 1402.2 513.8 1406.7 509.3C1411.2 504.9 1415 498.2 1416.7 496" fill="none" stroke="#bdbbb6" stroke-width="1" stroke-linecap="round" stroke-linejoin="round"/>
<path d="M1396.7 512.7C1398.4 515.5 1405 522.8 1406.7 529.3C1408.4 535.8 1406.7 548 1406.7 551.7" fill="none" stroke="#bdbbb6" stroke-width="1" stroke-linecap="round" stroke-linejoin="round"/>
<path d="M1206.2 665.1C1206.2 669.5 1208.4 681.7 1206.2 691.7C1204 701.7 1197.9 715.6 1192.9 725C1187.9 734.4 1177.9 741.6 1176.2 748.3C1174.5 754.9 1177.9 761.6 1182.9 764.9C1187.9 768.2 1202.3 767.7 1206.2 768.2" fill="none" stroke="#bdbbb6" stroke-width="1" stroke-linecap="round" stroke-linejoin="round"/>
<path d="M1146.3 685.1C1150.7 686.8 1162.9 694.5 1172.9 695C1182.9 695.5 1195.7 687.8 1206.2 688.4C1216.7 689 1230.6 689.5 1236.1 698.4C1241.6 707.3 1238.9 734.4 1239.4 741.6" fill="none" stroke="#bdbbb6" stroke-width="1" stroke-linecap="round" stroke-linejoin="round"/>
<path d="M1239.4 648.5C1242.7 654.6 1251.6 672.4 1259.4 685.1C1267.2 697.9 1277.7 711.1 1286 725C1294.3 738.9 1302.6 751.2 1309.3 768.2C1316 785.2 1323.1 817.3 1325.9 827.1" fill="none" stroke="#bdbbb6" stroke-width="1" stroke-linecap="round" stroke-linejoin="round"/>
<path d="M1172.9 748.3C1175.7 751.1 1184 761.6 1189.5 764.9C1195 768.2 1194.5 767.1 1206.2 768.2C1217.9 769.3 1245 772.2 1259.4 771.6C1273.8 771 1278.8 768.2 1292.7 764.9C1306.6 761.6 1331.5 757.1 1342.6 751.6C1353.7 746.1 1356.4 734.9 1359.2 731.6" fill="none" stroke="#bdbbb6" stroke-width="1" stroke-linecap="round" stroke-linejoin="round"/>
<path d="M1189.5 764.9C1190.1 769.3 1190.1 784.3 1192.9 791.5C1195.7 798.7 1204 805.4 1206.2 808.2" fill="none" stroke="#bdbbb6" stroke-width="1" stroke-linecap="round" stroke-linejoin="round"/>
<path d="M1259.4 661.8C1261.1 656.2 1264.4 637.4 1269.4 628.5C1274.4 619.6 1281 615.2 1289.3 608.6C1297.6 602 1307.6 596.4 1319.3 588.6C1331 580.8 1352.5 566.4 1359.2 562" fill="none" stroke="#bdbbb6" stroke-width="1" stroke-linecap="round" stroke-linejoin="round"/>
<path d="M1280 628.5C1283.3 628.5 1292.2 625.2 1300 628.5C1307.8 631.8 1317.2 639.1 1326.6 648.5C1336 657.9 1351 676.8 1356.5 685.1C1362 693.4 1355.9 695.1 1359.8 698.4C1363.7 701.7 1372 703.3 1379.8 705C1387.6 706.7 1402 707.8 1406.4 708.4" fill="none" stroke="#bdbbb6" stroke-width="1" stroke-linecap="round" stroke-linejoin="round"/>
<path d="M1406.4 552C1405.9 557.5 1404.2 574.2 1403.1 585.3C1402 596.4 1398.1 607.4 1399.8 618.5C1401.5 629.6 1409.8 639.6 1413.1 651.8C1416.4 664 1418 680.6 1419.7 691.7C1421.4 702.8 1422.5 713.9 1423 718.3" fill="none" stroke="#bdbbb6" stroke-width="1" stroke-linecap="round" stroke-linejoin="round"/>
<path d="M1453 558.7C1453.5 567.6 1456.8 594.7 1456.3 611.9C1455.8 629.1 1451.4 647.4 1449.7 661.8C1448 676.2 1446.9 692.3 1446.3 698.4" fill="none" stroke="#bdbbb6" stroke-width="1" stroke-linecap="round" stroke-linejoin="round"/>
<path d="M1280 725C1283.9 731.6 1296.1 750.5 1303.3 764.9C1310.5 779.3 1318.8 801.1 1323.2 811.5C1327.6 821.9 1328.8 824.5 1329.9 827.1" fill="none" stroke="#bdbbb6" stroke-width="0.8" stroke-linecap="round" stroke-linejoin="round"/>
<path d="M1280 774.9C1285.5 773.2 1301.1 768.8 1313.3 764.9C1325.5 761 1344.3 756 1353.2 751.6C1362.1 747.2 1364.3 740.5 1366.5 738.3" fill="none" stroke="#bdbbb6" stroke-width="1" stroke-linecap="round" stroke-linejoin="round"/>
<path d="M1556.1 552C1558.9 555.3 1566.6 566.5 1572.7 572C1578.8 577.5 1588.2 580.3 1592.7 585.3C1597.2 590.3 1598.8 599.1 1600 601.9" fill="none" stroke="#bdbbb6" stroke-width="1" stroke-linecap="round" stroke-linejoin="round"/>
<path d="M1519.5 685.1C1523.9 684 1541.1 682.8 1546.1 678.4C1551.1 674 1551.2 663.5 1549.5 658.5C1547.8 653.5 1538.4 650.2 1536.2 648.5" fill="none" stroke="#bdbbb6" stroke-width="1" stroke-linecap="round" stroke-linejoin="round"/>
<path d="M1492.9 738.3C1496.2 739.4 1504 744.3 1512.9 744.9C1521.8 745.5 1537.2 739.4 1546.1 741.6C1555 743.8 1560.5 751.1 1566.1 758.3C1571.6 765.5 1577.2 780.5 1579.4 784.9" fill="none" stroke="#bdbbb6" stroke-width="1" stroke-linecap="round" stroke-linejoin="round"/>
<path d="M1655 18.3C1664.2 26.4 1694.7 52.5 1710 66.7C1725.3 80.9 1737.2 94.4 1746.7 103.3C1756.2 112.2 1762.3 113.9 1766.7 120C1771.1 126.1 1772.2 133.9 1773.3 140C1774.4 146.1 1775.5 150 1773.3 156.7C1771.1 163.4 1770 167.8 1760 180C1750 192.2 1728 214.1 1713.3 230C1698.6 245.9 1678.6 268.1 1671.7 275.7" fill="none" stroke="#7d7d7d" stroke-width="1.3" stroke-linecap="round" stroke-linejoin="round"/>
<path d="M1746.7 103.3C1750 105 1757.8 111.1 1766.7 113.3C1775.6 115.5 1788.9 117.8 1800 116.7C1811.1 115.6 1822.2 109.8 1833.3 106.7C1844.4 103.6 1852.5 100.2 1866.7 98.3C1880.9 96.3 1910 95.5 1918.7 95" fill="none" stroke="#8c8c8c" stroke-width="1.2" stroke-linecap="round" stroke-linejoin="round"/>
<path d="M1671.7 276C1659.7 287.7 1621.7 328.2 1599.7 346C1577.8 363.8 1557.2 371.6 1540 382.7C1522.8 393.8 1506.7 404.4 1496.7 412.7C1486.7 421 1484.2 424.4 1480 432.7C1475.8 441 1473.4 452.7 1471.7 462.7C1470 472.7 1468.6 481.6 1470 492.7C1471.4 503.8 1475.5 519.5 1480 529.3C1484.5 539.1 1493.9 548 1496.7 551.7" fill="none" stroke="#7d7d7d" stroke-width="1.3" stroke-linecap="round" stroke-linejoin="round"/>
<path d="M1496.2 552C1500.1 555.3 1514.5 564.8 1519.5 572C1524.5 579.2 1525.7 586.3 1526.2 595.2C1526.8 604.1 1525.6 615.8 1522.8 625.2C1520 634.6 1516.7 640.7 1509.5 651.8C1502.3 662.9 1489.6 679 1479.6 691.7C1469.6 704.5 1455.5 717.2 1449.7 728.3C1443.9 739.4 1445.5 747.8 1444.7 758.3C1443.9 768.8 1446.1 782.6 1444.7 791.5C1443.3 800.4 1445.6 807.1 1436.4 811.5C1427.2 815.9 1402.6 815.5 1389.8 818.1C1377 820.7 1364.8 825.6 1359.8 827.1" fill="none" stroke="#7d7d7d" stroke-width="1.3" stroke-linecap="round" stroke-linejoin="round"/>
<path d="M973.3 0C977.8 2.8 991.7 11.7 1000 16.7C1008.3 21.7 1015.5 27.7 1023.3 30C1031.1 32.3 1042.8 30.6 1046.7 30.7" fill="none" stroke="#f6c27a" stroke-width="2.1" stroke-linecap="round" stroke-linejoin="round"/>
<path d="M1765 116.7C1764.2 119.5 1758.6 126.1 1760 133.3C1761.4 140.5 1769.4 155 1773.3 160C1777.2 165 1780.5 166.6 1783.3 163.3C1786.1 160 1788.9 147.2 1790 140C1791.1 132.8 1785.5 125.5 1790 120C1794.5 114.5 1804.5 110.9 1816.7 106.7C1828.9 102.5 1851.1 97.8 1863.3 95C1875.5 92.2 1880.8 91.7 1890 90C1899.2 88.3 1913.9 85.8 1918.7 85" fill="none" stroke="#f6c27a" stroke-width="2.1" stroke-linecap="round" stroke-linejoin="round"/>
<path d="M1783.3 163.3C1783 167.2 1784.5 177.8 1781.7 186.7C1778.9 195.6 1771.4 206.7 1766.7 216.7C1762 226.7 1755.8 236.9 1753.3 246.7C1750.8 256.5 1752 270.9 1751.7 275.7" fill="none" stroke="#f6c27a" stroke-width="2.1" stroke-linecap="round" stroke-linejoin="round"/>
<path d="M1783.3 161.7C1786.6 161.4 1795 155.8 1803.3 160C1811.6 164.2 1822.7 178.9 1833.3 186.7C1843.9 194.5 1856.7 197.8 1866.7 206.7C1876.7 215.6 1885.5 231.1 1893.3 240C1901.1 248.9 1909.7 255 1913.3 260C1916.9 265 1914.7 268.3 1915 270" fill="none" stroke="#f6c27a" stroke-width="2.1" stroke-linecap="round" stroke-linejoin="round"/>
<path d="M1630 0C1631.1 2.2 1634.5 7.2 1636.7 13.3C1638.9 19.4 1642.2 32.8 1643.3 36.7" fill="none" stroke="#f6c27a" stroke-width="2.1" stroke-linecap="round" stroke-linejoin="round"/>
<path d="M1620 148.3L1639.3 133.3" fill="none" stroke="#f58f6e" stroke-width="2.3" stroke-linecap="round" stroke-linejoin="round"/>
<path d="M1725 309.3C1727 309 1732.5 310.5 1736.7 307.7C1740.9 304.9 1747 298 1750 292.7C1753 287.4 1754.2 278.8 1755 276" fill="none" stroke="#f6c27a" stroke-width="2.1" stroke-linecap="round" stroke-linejoin="round"/>
<path d="M1843.3 551.7C1847.2 550.2 1860 545.6 1866.7 542.7C1873.4 539.8 1874.6 535.7 1883.3 534.3C1892 532.9 1912.8 534.3 1918.7 534.3" fill="none" stroke="#f6c27a" stroke-width="2.1" stroke-linecap="round" stroke-linejoin="round"/>
<path d="M1753.3 627C1755.5 623.4 1762.2 612.2 1766.7 605.3C1771.2 598.3 1772.8 589.2 1780 585.3C1787.2 581.4 1803.3 584.5 1810 582C1816.7 579.5 1813.9 575.3 1820 570.3C1826.1 565.3 1842.2 555 1846.7 552" fill="none" stroke="#f6c27a" stroke-width="2.1" stroke-linecap="round" stroke-linejoin="round"/>
<path d="M1159.6 671.8C1161.8 671.2 1168.5 669.2 1172.9 668.4C1177.3 667.6 1181.8 668.2 1186.2 666.8C1190.6 665.4 1197.3 661.2 1199.5 660.1" fill="none" stroke="#f6c27a" stroke-width="2.1" stroke-linecap="round" stroke-linejoin="round"/>
<path d="M1419.7 731.6C1420.8 729.4 1422 721.6 1426.4 718.3C1430.8 715 1439.7 711.7 1446.3 711.7C1452.9 711.7 1460.8 717.8 1466.3 718.3C1471.8 718.8 1475.2 715.5 1479.6 715C1484 714.5 1490.7 715 1492.9 715" fill="none" stroke="#f6c27a" stroke-width="1.6" stroke-linecap="round" stroke-linejoin="round"/>
<path d="M1413.1 741.6C1415.3 742.7 1420.9 748.3 1426.4 748.3C1431.9 748.3 1439.7 742.2 1446.3 741.6C1452.9 741 1460.8 746.6 1466.3 744.9C1471.8 743.2 1477.4 733.8 1479.6 731.6" fill="none" stroke="#f6c27a" stroke-width="1.6" stroke-linecap="round" stroke-linejoin="round"/>
<path d="M1433 725C1436.3 723.9 1447.5 722.2 1453 718.3C1458.5 714.4 1464.1 704.5 1466.3 701.7" fill="none" stroke="#f6c27a" stroke-width="1.6" stroke-linecap="round" stroke-linejoin="round"/>
<path d="M1479.6 681.7C1481 684.5 1486.8 692.3 1487.9 698.4C1489 704.5 1486.6 715 1486.3 718.3" fill="none" stroke="#f6c27a" stroke-width="1.6" stroke-linecap="round" stroke-linejoin="round"/>
<path d="M1376.5 804.8C1377 803.1 1377 798.1 1379.8 794.8C1382.6 791.5 1390.9 786.5 1393.1 784.9" fill="none" stroke="#f58f6e" stroke-width="2.3" stroke-linecap="round" stroke-linejoin="round"/>
<path d="M1650 181.7C1653.9 186.4 1665 199.7 1673.3 210C1681.6 220.3 1694.4 234.4 1700 243.3C1705.6 252.2 1703.9 257.9 1706.7 263.3C1709.5 268.7 1715 273.6 1716.7 275.7" fill="none" stroke="#f58f6e" stroke-width="2.5" stroke-linecap="round" stroke-linejoin="round"/>
<path d="M1721.7 276C1722.1 279.3 1723.3 289.9 1724 296C1724.7 302.1 1725.3 306 1726 312.7C1726.7 319.4 1727.1 329.3 1728.3 336C1729.5 342.7 1732.5 348 1733.3 352.7C1734.1 357.4 1735 361 1733.3 364.3C1731.6 367.6 1728.8 369.1 1723.3 372.7C1717.8 376.3 1707.2 381.6 1700 386C1692.8 390.4 1688.3 392.6 1680 399.3C1671.7 406 1657.8 418.8 1650 426C1642.2 433.2 1638.8 437.4 1633.3 442.7C1627.8 448 1622.2 453.8 1616.7 457.7C1611.2 461.6 1602.8 464.6 1600 466" fill="none" stroke="#f58f6e" stroke-width="2.5" stroke-linecap="round" stroke-linejoin="round"/>
<path d="M1599.7 466C1595.3 468.7 1582.1 475.3 1573.3 482C1564.5 488.7 1554.5 497.6 1546.7 506C1538.9 514.5 1532.3 525.1 1526.7 532.7C1521.1 540.3 1515.5 548.5 1513.3 551.7" fill="none" stroke="#f58f6e" stroke-width="2.5" stroke-linecap="round" stroke-linejoin="round"/>
<path d="M1512.9 552C1511.2 553.4 1504.9 557.5 1502.9 560.3C1501 563.1 1500.1 565 1501.2 568.6C1502.3 572.2 1507.5 576.4 1509.5 581.9C1511.5 587.4 1512.9 595.2 1512.9 601.9C1512.9 608.6 1512.3 614.1 1509.5 621.9C1506.7 629.7 1498.4 644.1 1496.2 648.5" fill="none" stroke="#f58f6e" stroke-width="2.3" stroke-linecap="round" stroke-linejoin="round"/>
<path d="M1055.7 0C1056.1 2.8 1059 11.4 1058.3 16.7C1057.6 22 1051.4 26.1 1051.7 31.7C1052 37.2 1057.4 45 1060 50C1062.6 55 1066.1 59.8 1067.3 61.7" fill="none" stroke="#e2557c" stroke-width="2.9" stroke-linecap="round" stroke-linejoin="round"/>
<path d="M1600 31.7C1603.3 33.6 1612.8 40.2 1620 43.3C1627.2 46.3 1637.8 48.3 1643.3 50C1648.8 51.7 1651.6 52.8 1653.3 53.3" fill="none" stroke="#e2557c" stroke-width="2.9" stroke-linecap="round" stroke-linejoin="round"/>
<path d="M1643.3 50C1643 55.5 1642.2 73.3 1641.7 83.3C1641.2 93.3 1640.4 101.7 1640 110C1639.6 118.3 1639.4 129.4 1639.3 133.3" fill="none" stroke="#e2557c" stroke-width="2.9" stroke-linecap="round" stroke-linejoin="round"/>
<path d="M1635 0C1637 3.9 1643.7 14.4 1646.7 23.3C1649.8 32.2 1651.9 40.5 1653.3 53.3C1654.7 66.1 1654.5 85.5 1655 100C1655.5 114.5 1656.8 126.7 1656 140C1655.2 153.3 1652.7 168.9 1650 180C1647.3 191.1 1642.8 197.8 1640 206.7C1637.2 215.6 1634.7 225.5 1633.3 233.3C1631.9 241.1 1632.1 246.2 1631.7 253.3C1631.3 260.4 1630.9 272 1630.7 275.7" fill="none" stroke="#e2557c" stroke-width="2.9" stroke-linecap="round" stroke-linejoin="round"/>
<path d="M1688.3 0C1690.2 3.3 1694.2 10.5 1700 20C1705.8 29.5 1716.1 46.7 1723.3 56.7C1730.5 66.7 1737.7 72.8 1743.3 80C1748.9 87.2 1753.1 93.9 1756.7 100C1760.3 106.1 1763.6 113.9 1765 116.7" fill="none" stroke="#e2557c" stroke-width="2.9" stroke-linecap="round" stroke-linejoin="round"/>
<path d="M1850 0C1854.5 1.7 1870 7.2 1876.7 10C1883.4 12.8 1887.8 15.6 1890 16.7" fill="none" stroke="#e2557c" stroke-width="2.9" stroke-linecap="round" stroke-linejoin="round"/>
<path d="M1630.7 276C1631.7 279.3 1635.4 289.3 1636.7 296C1638 302.7 1638.9 308.2 1638.3 316C1637.7 323.8 1636.3 334.4 1633.3 342.7C1630.2 351 1623.9 358.2 1620 366C1616.1 373.8 1612.5 382.1 1610 389.3C1607.5 396.5 1606.7 403.7 1605 409.3C1603.3 414.9 1600.8 420.5 1600 422.7" fill="none" stroke="#e2557c" stroke-width="2.9" stroke-linecap="round" stroke-linejoin="round"/>
<path d="M1599.7 419.3C1598.9 426.5 1598.3 451 1595 462.7C1591.7 474.4 1583.6 480.4 1580 489.3C1576.4 498.2 1575 508.2 1573.3 516C1571.6 523.8 1571.7 530 1570 536C1568.3 542 1564.4 549.1 1563.3 551.7" fill="none" stroke="#e2557c" stroke-width="2.9" stroke-linecap="round" stroke-linejoin="round"/>
<path d="M1562.8 552C1560 554.5 1551.4 561.5 1546.1 567C1540.8 572.5 1534.5 576.7 1531.2 585.3C1527.9 593.9 1526.8 608.5 1526.2 618.5C1525.6 628.5 1528.9 636.2 1527.8 645.1C1526.7 654 1523.1 663.5 1519.5 671.8C1515.9 680.1 1510.1 687.8 1506.2 695C1502.3 702.2 1499.5 707.8 1496.2 715C1492.9 722.2 1488.8 730 1486.3 738.3C1483.8 746.6 1481.9 757.1 1481.3 764.9C1480.7 772.7 1480.4 777.1 1482.9 784.9C1485.4 792.7 1493.4 804.5 1496.2 811.5C1499 818.5 1499 824.5 1499.6 827.1" fill="none" stroke="#e2557c" stroke-width="2.9" stroke-linecap="round" stroke-linejoin="round"/>
<path d="M1280 683.4C1286.7 685.9 1308.8 692 1319.9 698.4C1331 704.8 1338.2 715.9 1346.5 721.7C1354.8 727.5 1362 732.2 1369.8 733.3C1377.6 734.4 1387 731.3 1393.1 728.3C1399.2 725.2 1400.9 719.1 1406.4 715C1412 710.9 1418.6 705.9 1426.4 703.4C1434.2 700.9 1445.2 702 1453 700C1460.8 698 1466.2 698.1 1472.9 691.7C1479.6 685.3 1489 669 1492.9 661.8C1496.8 654.6 1495.7 650.7 1496.2 648.5" fill="none" stroke="#e2557c" stroke-width="2.9" stroke-linecap="round" stroke-linejoin="round"/>
<path d="M1492.9 715C1498.5 712.8 1516.8 705.6 1526.2 701.7C1535.6 697.8 1542.8 692.2 1549.5 691.7C1556.2 691.2 1563.3 697.3 1566.1 698.4" fill="none" stroke="#e2557c" stroke-width="2.9" stroke-linecap="round" stroke-linejoin="round"/>
<path d="M1393.1 728.3C1394.8 732.2 1402 743.3 1403.1 751.6C1404.2 759.9 1402 770.4 1399.8 778.2C1397.6 786 1392 790.1 1389.8 798.2C1387.6 806.4 1387 822.3 1386.5 827.1" fill="none" stroke="#e2557c" stroke-width="2.9" stroke-linecap="round" stroke-linejoin="round"/>
<path d="M1280 804.8C1283.3 805.9 1292.8 807.8 1300 811.5C1307.2 815.2 1319.3 824.5 1323.2 827.1" fill="none" stroke="#e2557c" stroke-width="2.9" stroke-linecap="round" stroke-linejoin="round"/>
<path d="M1618.3 702.7C1621.4 702 1629.8 701.9 1636.7 698.7C1643.7 695.5 1650.6 688.7 1660 683.7C1669.4 678.7 1686.6 674 1693.3 668.7C1700 663.4 1696.7 657 1700 652C1703.3 647 1707.8 641.5 1713.3 638.7C1718.8 635.9 1726.6 637 1733.3 635.3C1740 633.6 1750 629.8 1753.3 628.7" fill="none" stroke="#e2557c" stroke-width="2.9" stroke-linecap="round" stroke-linejoin="round"/>
<path d="M1199.5 660.1C1202.8 660.6 1212.8 661.9 1219.5 663.4C1226.2 664.9 1233.6 669.1 1239.4 669.1C1245.2 669.1 1248.9 661.9 1254.4 663.4C1260 664.9 1268.4 675.1 1272.7 678.4C1277 681.7 1278.8 682.6 1280 683.4" fill="none" stroke="#e2557c" stroke-width="2.9" stroke-linecap="round" stroke-linejoin="round"/>
<path d="M1264.4 784.9C1265 787.1 1263.6 794.3 1267.7 798.2C1271.8 802.1 1281.8 803.4 1289.3 808.2C1296.8 813 1308.7 824 1312.6 827.1" fill="none" stroke="#e2557c" stroke-width="2.9" stroke-linecap="round" stroke-linejoin="round"/>
<path d="M1325.9 827.1C1329.2 825.6 1339.2 818.1 1345.9 818.1C1352.6 818.1 1362.6 825.6 1365.9 827.1" fill="none" stroke="#e2557c" stroke-width="2.9" stroke-linecap="round" stroke-linejoin="round"/>
<path d="M1480 30L1493.3 33.3L1506.7 36.7L1508.3 53.3L1510 66.7L1503.3 83.3L1496.7 93.3L1486.7 103.3L1500 108.3L1513.3 110L1526.7 103.3L1533.3 100L1536.7 110L1536.7 120L1530 133.3L1528.3 140L1546.7 140L1570 133.3L1586.7 128.3L1599.7 125L1599.7 140L1580 143.3L1553.3 150L1536.7 153.3L1538.3 173.3L1543.3 193.3L1546.7 206.7L1543.3 220L1536.7 233.3L1533.3 253.3L1535 266.7L1546.7 263.3L1570 253.3L1599.7 246.7L1599.7 263.3L1580 266.7L1563.3 275.7L1316.7 275.7L1320 266.7L1325 246.7L1333.3 226.7L1343.3 210L1353.3 193.3L1366.7 180L1380 166.7L1378.3 150L1376.7 133.3L1380 116.7L1393.3 115L1410 110L1408.3 100L1406.7 86.7L1426.7 75L1436.7 66.7L1453.3 63.3L1466.7 60L1475 43.3z" fill="#eef0d5"/>
<path d="M1480 30L1493.3 33.3L1506.7 36.7L1508.3 53.3L1510 66.7L1503.3 83.3L1496.7 93.3L1486.7 103.3L1500 108.3L1513.3 110L1526.7 103.3L1533.3 100L1536.7 110L1536.7 120L1530 133.3L1528.3 140L1546.7 140L1570 133.3L1586.7 128.3L1599.7 125L1599.7 140L1580 143.3L1553.3 150L1536.7 153.3L1538.3 173.3L1543.3 193.3L1546.7 206.7L1543.3 220L1536.7 233.3L1533.3 253.3L1535 266.7L1546.7 263.3L1570 253.3L1599.7 246.7L1599.7 263.3L1580 266.7L1563.3 275.7L1316.7 275.7L1320 266.7L1325 246.7L1333.3 226.7L1343.3 210L1353.3 193.3L1366.7 180L1380 166.7L1378.3 150L1376.7 133.3L1380 116.7L1393.3 115L1410 110L1408.3 100L1406.7 86.7L1426.7 75L1436.7 66.7L1453.3 63.3L1466.7 60L1475 43.3z" fill="url(#wet)"/>
<path d="M1570 111.7L1580 110L1586.7 126.7L1596.7 133.3L1620 146.7L1626.7 156.7L1616.7 156.7L1596.7 146.7L1573.3 143.3L1550 150L1536.7 150L1540 140L1560 131.7L1571.7 126.7z" fill="url(#wet)"/>
<path d="M1530 263.3L1556.7 253.3L1590 243.3L1620 233.3L1640 228.3L1666.7 230L1686.7 236.7L1696.7 246.7L1686.7 248.3L1666.7 238.3L1640 237.3L1620 243.3L1590 253.3L1556.7 263.3L1533.3 273.3z" fill="url(#wet)"/>
<path d="M1580 129L1605 140L1623 148L1627 159L1636 167L1652 171.5L1666 174L1666 178L1650 176.5L1633 172.5L1623 165L1619 155L1602 148L1580 138z" fill="url(#wet)"/>
<path d="M1280 276L1370 276L1371.7 306L1360 322.7L1343.3 326L1320 317.7L1313.3 336L1313.3 356L1293.3 369.3L1286.7 376L1283.3 409.3L1300 419.3L1303.3 449.3L1296.7 469.3L1280 469.3z" fill="url(#wet)"/>
<path d="M1282.5 507.5L1292.5 505L1295 525L1305 530L1325 527.5L1330 520L1350 517.5L1362.5 512.5L1365 520L1360 532.5L1370 542.5L1370 550L1360 555L1350 557.5L1342.5 547.5L1335 545L1332.5 560L1325 570L1322.5 590L1317.5 602.5L1302.5 605L1292.5 607.5L1270 602.5L1267.5 595L1275 580L1280 562.5L1287.5 557.5L1287.5 535L1282.5 522.5z" fill="url(#wet)"/>
<path d="M1420 485L1432.5 475L1442.5 475L1440 490L1430 500L1427.5 512.5L1440 520L1442.5 535L1437.5 550L1440 565L1437.5 580L1427.5 600L1420 610L1422.5 632.5L1407.5 637.5L1400 632.5L1405 620L1415 607.5L1422.5 595L1430 580L1432.5 560L1430 542.5L1425 535L1427.5 525L1420 510z" fill="url(#wet)"/>
<path d="M1530 262.5L1565 255L1580 260L1575 275L1585 287.5L1597.5 295L1602.5 310L1597.5 322.5L1585 320L1575 312.5L1565 320L1567.5 332.5L1555 332.5L1540 325L1530 317.5L1517.5 295L1525 287.5L1528.8 270z" fill="url(#wet)"/>
<path d="M1530 143.3C1538.3 134.4 1558.3 132.5 1573.3 133.3C1588.3 134.1 1611.1 143.9 1620 148.3C1628.9 152.8 1626.7 153.6 1626.7 160C1626.7 166.4 1625 177.8 1620 186.7C1615 195.6 1604.5 205.5 1596.7 213.3C1588.9 221.1 1581.1 227.7 1573.3 233.3C1565.5 238.9 1557.2 241.7 1550 246.7C1542.8 251.7 1535 265.5 1530 263.3C1525 261.1 1521.1 246.1 1520 233.3C1518.9 220.5 1521.6 201.7 1523.3 186.7C1525 171.7 1521.7 152.2 1530 143.3z" fill="url(#wet2)"/>
<path d="M1105 207.5L1125 212.5L1150 217.5L1162.5 207.5L1167.5 185L1182.5 177.5L1210 177.5L1225 185L1235 197.5L1236.2 210L1260 207.5L1230 216.2L1210 227.5L1197.5 242.5L1191.2 262.5L1200 270L1302.5 270L1308.8 270L1300 300L1292.5 330L1285 360L1280 376.8L1285 392L1282.5 409.5L1270 427L1250 434.5L1235 442L1220 434.5L1210 444.5L1200 427L1182.5 409.5L1165 397L1147.5 402L1137.5 402L1140 377L1137.5 350L1138.8 330L1140 310L1135 287.5L1128.8 270L1130 252.5L1125 232.5L1115 217.5z" fill="#d6e8c6"/>
<path d="M1105 207.5L1125 212.5L1150 217.5L1162.5 207.5L1167.5 185L1182.5 177.5L1210 177.5L1225 185L1235 197.5L1236.2 210L1260 207.5L1230 216.2L1210 227.5L1197.5 242.5L1191.2 262.5L1200 270L1302.5 270L1308.8 270L1300 300L1292.5 330L1285 360L1280 376.8L1285 392L1282.5 409.5L1270 427L1250 434.5L1235 442L1220 434.5L1210 444.5L1200 427L1182.5 409.5L1165 397L1147.5 402L1137.5 402L1140 377L1137.5 350L1138.8 330L1140 310L1135 287.5L1128.8 270L1130 252.5L1125 232.5L1115 217.5z" fill="url(#wet)"/>
<text x="1037.5" y="43" font-size="13.5" fill="#4d4d4d" textLength="52.5" lengthAdjust="spacingAndGlyphs" stroke="#fff" stroke-opacity=".75" stroke-width="2.2" paint-order="stroke" stroke-linejoin="round">Almonte</text>
<text x="1477" y="9" font-size="12.5" fill="#4d4d4d" textLength="76" lengthAdjust="spacingAndGlyphs" stroke="#fff" stroke-opacity=".75" stroke-width="2.2" paint-order="stroke" stroke-linejoin="round">Coria del Río</text>
<text x="1583" y="17" font-size="18" fill="#444" textLength="119" lengthAdjust="spacingAndGlyphs" stroke="#fff" stroke-opacity=".75" stroke-width="2.2" paint-order="stroke" stroke-linejoin="round">Dos Hermanas</text>
<text x="1760" y="139.5" font-size="13.5" fill="#4d4d4d" textLength="39" lengthAdjust="spacingAndGlyphs" stroke="#fff" stroke-opacity=".75" stroke-width="2.2" paint-order="stroke" stroke-linejoin="round">Utrera</text>
<text x="1604" y="160" font-size="13" fill="#4d4d4d" textLength="74" lengthAdjust="spacingAndGlyphs" stroke="#fff" stroke-opacity=".75" stroke-width="2.2" paint-order="stroke" stroke-linejoin="round">Los Palacios</text>
<text x="1603" y="177" font-size="13" fill="#4d4d4d" textLength="75" lengthAdjust="spacingAndGlyphs" stroke="#fff" stroke-opacity=".75" stroke-width="2.2" paint-order="stroke" stroke-linejoin="round">y Villafranca</text>
<text x="1145" y="362" font-size="13.5" fill="#3f8a46" textLength="50" lengthAdjust="spacingAndGlyphs" font-style="italic">Parque</text>
<text x="1139" y="380.5" font-size="13.5" fill="#3f8a46" textLength="62" lengthAdjust="spacingAndGlyphs" font-style="italic">Nacional</text>
<text x="1132" y="399" font-size="13.5" fill="#3f8a46" textLength="76" lengthAdjust="spacingAndGlyphs" font-style="italic">de Doñana</text>
<text x="1438" y="383" font-size="12.5" fill="#9aa653" textLength="59" lengthAdjust="spacingAndGlyphs" font-style="italic">Marismas</text>
<text x="1438" y="399" font-size="12.5" fill="#9aa653" textLength="58" lengthAdjust="spacingAndGlyphs" font-style="italic">de Lebrija</text>
<text x="1588" y="377" font-size="13" fill="#4d4d4d" textLength="74" lengthAdjust="spacingAndGlyphs" stroke="#fff" stroke-opacity=".75" stroke-width="2.2" paint-order="stroke" stroke-linejoin="round">Las Cabezas</text>
<text x="1588" y="393" font-size="13" fill="#4d4d4d" textLength="73" lengthAdjust="spacingAndGlyphs" stroke="#fff" stroke-opacity=".75" stroke-width="2.2" paint-order="stroke" stroke-linejoin="round">de San Juan</text>
<text x="1472" y="461" font-size="13.5" fill="#4d4d4d" textLength="41" lengthAdjust="spacingAndGlyphs" stroke="#fff" stroke-opacity=".75" stroke-width="2.2" paint-order="stroke" stroke-linejoin="round">Lebrija</text>
<text x="1500" y="531" font-size="13" fill="#4d4d4d" textLength="58" lengthAdjust="spacingAndGlyphs" stroke="#fff" stroke-opacity=".75" stroke-width="2.2" paint-order="stroke" stroke-linejoin="round">El Cuervo</text>
<text x="1501" y="548" font-size="13" fill="#4d4d4d" textLength="57" lengthAdjust="spacingAndGlyphs" stroke="#fff" stroke-opacity=".75" stroke-width="2.2" paint-order="stroke" stroke-linejoin="round">de Sevilla</text>
<text x="1880" y="532" font-size="13.5" fill="#4d4d4d" textLength="71" lengthAdjust="spacingAndGlyphs" stroke="#fff" stroke-opacity=".75" stroke-width="2.2" paint-order="stroke" stroke-linejoin="round">Villamartín</text>
<text x="1187" y="626" font-size="13" fill="#4d4d4d" textLength="72" lengthAdjust="spacingAndGlyphs" stroke="#fff" stroke-opacity=".75" stroke-width="2.2" paint-order="stroke" stroke-linejoin="round">Sanlúcar de</text>
<text x="1189" y="642.5" font-size="13" fill="#4d4d4d" textLength="69" lengthAdjust="spacingAndGlyphs" stroke="#fff" stroke-opacity=".75" stroke-width="2.2" paint-order="stroke" stroke-linejoin="round">Barrameda</text>
<text x="1116" y="683.5" font-size="13.5" fill="#4d4d4d" textLength="56" lengthAdjust="spacingAndGlyphs" stroke="#fff" stroke-opacity=".75" stroke-width="2.2" paint-order="stroke" stroke-linejoin="round">Chipiona</text>
<text x="1203.5" y="819" font-size="13.5" fill="#4d4d4d" textLength="27.5" lengthAdjust="spacingAndGlyphs" stroke="#fff" stroke-opacity=".75" stroke-width="2.2" paint-order="stroke" stroke-linejoin="round">Rota</text>
<text x="1391" y="742" font-size="18" fill="#444" textLength="84" lengthAdjust="spacingAndGlyphs" stroke="#fff" stroke-opacity=".75" stroke-width="2.2" paint-order="stroke" stroke-linejoin="round">Jerez de la</text>
<text x="1399" y="763" font-size="18" fill="#444" textLength="69" lengthAdjust="spacingAndGlyphs" stroke="#fff" stroke-opacity=".75" stroke-width="2.2" paint-order="stroke" stroke-linejoin="round">Frontera</text>
<text x="1716" y="654" font-size="13" fill="#4d4d4d" textLength="68" lengthAdjust="spacingAndGlyphs" stroke="#fff" stroke-opacity=".75" stroke-width="2.2" paint-order="stroke" stroke-linejoin="round">Arcos de la</text>
<text x="1724" y="671" font-size="13" fill="#4d4d4d" textLength="52" lengthAdjust="spacingAndGlyphs" stroke="#fff" stroke-opacity=".75" stroke-width="2.2" paint-order="stroke" stroke-linejoin="round">Frontera</text>
<rect x="1057" y="161" width="52" height="23" rx="2.5" fill="#f1d3d8" stroke="#dba3ad" stroke-width="1"/>
<text x="1083" y="177" font-size="12.5" fill="#7a2135" text-anchor="middle">A-483</text>
<rect x="1632" y="74" width="44" height="23" rx="2.5" fill="#f1d3d8" stroke="#dba3ad" stroke-width="1"/>
<text x="1654" y="90" font-size="12.5" fill="#7a2135" text-anchor="middle">AP-4</text>
<rect x="1891" y="18" width="44" height="23" rx="2.5" fill="#f1d3d8" stroke="#dba3ad" stroke-width="1"/>
<text x="1913" y="34" font-size="12.5" fill="#7a2135" text-anchor="middle">A-92</text>
<rect x="1566.5" y="693.5" width="52.5" height="22.5" rx="2.5" fill="#f1d3d8" stroke="#dba3ad" stroke-width="1"/>
<text x="1592.8" y="709.2" font-size="12.5" fill="#7a2135" text-anchor="middle">A-382</text>
<rect x="1465" y="817" width="43" height="23" rx="2.5" fill="#f1d3d8" stroke="#dba3ad" stroke-width="1"/>
<text x="1486.5" y="833" font-size="12.5" fill="#7a2135" text-anchor="middle">AP-4</text>
<path transform="translate(1229 789.5) scale(0.95)" d="M0 -8C1 -8 1.4 -6.500 1.400 -5V-2L8 2.500V4.200L1.400 2.200V5.500L3.300 7V8.300L0 7.400L-3.300 8.300V7L-1.400 5.500V2.200L-8 4.200V2.500L-1.400 -2V-5C-1.400 -6.500 -1 -8 0 -8z" fill="#8461c4"/>
<path transform="translate(1505 669) scale(0.9)" d="M0 -8C1 -8 1.4 -6.500 1.400 -5V-2L8 2.500V4.200L1.400 2.200V5.500L3.300 7V8.300L0 7.400L-3.300 8.300V7L-1.400 5.500V2.200L-8 4.200V2.500L-1.400 -2V-5C-1.400 -6.500 -1 -8 0 -8z" fill="#8461c4"/>
<path d="M1023.3 206.7L1031.7 201.7L1046.7 205L1047.3 213.3L1036.7 221.7L1025 221.7z" fill="#a97ddb" fill-opacity="0.5" stroke="#a97ddb" stroke-opacity=".5" stroke-width="2" stroke-linejoin="round"/>
<path d="M1073.3 196L1085 196.7L1103.3 209.3L1120 217.7L1133.3 231L1142.7 248.3L1134 253.3L1124 236L1107.3 221.7L1090 208L1075 200.7z" fill="#a97ddb" fill-opacity="0.6" stroke="#a97ddb" stroke-opacity=".5" stroke-width="2" stroke-linejoin="round"/>
<path d="M1133.3 230L1146.7 213.3L1160 206.7L1166.7 180L1180 170L1200 166.7L1213.3 173.3L1226.7 180L1243.3 170L1260 166.7L1271.7 173.3L1261.7 181.7L1260 200L1250 203.3L1233.3 200L1216.7 193.3L1193.3 186.7L1173.3 200L1160 220L1146.7 233.3z" fill="#a97ddb" fill-opacity="0.5" stroke="#a97ddb" stroke-opacity=".5" stroke-width="2" stroke-linejoin="round"/>
<path d="M1303.3 165L1316.7 163.3L1323.3 180L1313.3 188.3L1305 180z" fill="#a97ddb" fill-opacity="0.4" stroke="#a97ddb" stroke-opacity=".5" stroke-width="2" stroke-linejoin="round"/>
<path d="M1280 186.7L1296.7 181.7L1321.7 190L1323.3 203.3L1306.7 216.7L1286.7 213.3L1278.3 200z" fill="#a97ddb" fill-opacity="0.4" stroke="#a97ddb" stroke-opacity=".5" stroke-width="2" stroke-linejoin="round"/>
<path d="M1480 30L1493.3 33.3L1506.7 36.7L1508.3 53.3L1510 66.7L1503.3 83.3L1496.7 93.3L1486.7 103.3L1500 108.3L1513.3 110L1526.7 103.3L1533.3 100L1536.7 110L1536.7 120L1530 133.3L1528.3 140L1546.7 140L1570 133.3L1586.7 128.3L1599.7 125L1599.7 140L1580 143.3L1553.3 150L1536.7 153.3L1538.3 173.3L1543.3 193.3L1546.7 206.7L1543.3 220L1536.7 233.3L1533.3 253.3L1535 266.7L1546.7 263.3L1570 253.3L1599.7 246.7L1599.7 263.3L1580 266.7L1563.3 275.7L1316.7 275.7L1320 266.7L1325 246.7L1333.3 226.7L1343.3 210L1353.3 193.3L1366.7 180L1380 166.7L1378.3 150L1376.7 133.3L1380 116.7L1393.3 115L1410 110L1408.3 100L1406.7 86.7L1426.7 75L1436.7 66.7L1453.3 63.3L1466.7 60L1475 43.3z" fill="#a97ddb" fill-opacity="0.1"/>
<path d="M1340 78.3L1346.7 80L1366.7 100L1380 116.7L1366.7 126.7L1350 100z" fill="#a97ddb" fill-opacity="0.5" stroke="#a97ddb" stroke-opacity=".5" stroke-width="2" stroke-linejoin="round"/>
<path d="M1326.7 45L1336.7 46.7L1336.7 53.3L1326.7 53.3z" fill="#a97ddb" fill-opacity="0.5" stroke="#a97ddb" stroke-opacity=".5" stroke-width="2" stroke-linejoin="round"/>
<path d="M1330 145L1340 146.7L1370 156.7L1369.3 166.7L1360 166.7L1343.3 159.3L1331.7 151.7z" fill="#a97ddb" fill-opacity="0.6" stroke="#a97ddb" stroke-opacity=".5" stroke-width="2" stroke-linejoin="round"/>
<path d="M1306.7 166.7L1316.7 165L1333.3 173.3L1335 180L1323.3 186.7L1313.3 176.7z" fill="#a97ddb" fill-opacity="0.5" stroke="#a97ddb" stroke-opacity=".5" stroke-width="2" stroke-linejoin="round"/>
<path d="M1280 190L1293.3 186.7L1313.3 193.3L1323.3 200L1321.7 213.3L1300 216.7L1280 213.3z" fill="#a97ddb" fill-opacity="0.5" stroke="#a97ddb" stroke-opacity=".5" stroke-width="2" stroke-linejoin="round"/>
<path d="M1570 111.7L1580 110L1586.7 126.7L1596.7 133.3L1620 146.7L1626.7 156.7L1616.7 156.7L1596.7 146.7L1573.3 143.3L1550 150L1536.7 150L1540 140L1560 131.7L1571.7 126.7z" fill="#a97ddb" fill-opacity="0.5" stroke="#a97ddb" stroke-opacity=".5" stroke-width="2" stroke-linejoin="round"/>
<path d="M1530 263.3L1556.7 253.3L1590 243.3L1620 233.3L1640 228.3L1666.7 230L1686.7 236.7L1696.7 246.7L1686.7 248.3L1666.7 238.3L1640 237.3L1620 243.3L1590 253.3L1556.7 263.3L1533.3 273.3z" fill="#a97ddb" fill-opacity="0.5" stroke="#a97ddb" stroke-opacity=".5" stroke-width="2" stroke-linejoin="round"/>
<path d="M1713.3 266.7L1740 263.3L1790 270L1790 275.7L1713.3 275.7z" fill="#a97ddb" fill-opacity="0.5" stroke="#a97ddb" stroke-opacity=".5" stroke-width="2" stroke-linejoin="round"/>
<path d="M1861.7 103.3L1871.7 101.7L1883.3 116.7L1880 123.3L1868.3 116.7z" fill="#a97ddb" fill-opacity="0.4" stroke="#a97ddb" stroke-opacity=".5" stroke-width="2" stroke-linejoin="round"/>
<path d="M1580 129L1605 140L1623 148L1627 159L1636 167L1652 171.5L1666 174L1666 178L1650 176.5L1633 172.5L1623 165L1619 155L1602 148L1580 138z" fill="#a97ddb" fill-opacity="0.6" stroke="#a97ddb" stroke-opacity=".5" stroke-width="2" stroke-linejoin="round"/>
<path d="M1600 133.3L1613.3 135L1620 146.7L1613.3 156.7L1600 156.7z" fill="#a97ddb" fill-opacity="0.4" stroke="#a97ddb" stroke-opacity=".5" stroke-width="2" stroke-linejoin="round"/>
<path d="M1613.3 213.3L1630 206.7L1633.3 226.7L1630 246.7L1613.3 248.3L1618.3 230z" fill="#a97ddb" fill-opacity="0.5" stroke="#a97ddb" stroke-opacity=".5" stroke-width="2" stroke-linejoin="round"/>
<path d="M1280 276L1370 276L1371.7 306L1360 322.7L1343.3 326L1320 317.7L1313.3 336L1313.3 356L1293.3 369.3L1286.7 376L1283.3 409.3L1300 419.3L1303.3 449.3L1296.7 469.3L1280 469.3z" fill="#a97ddb" fill-opacity="0.5" stroke="#a97ddb" stroke-opacity=".5" stroke-width="2" stroke-linejoin="round"/>
<path d="M1376.7 276L1480 276L1473.3 289.3L1453.3 304.3L1426.7 316L1413.3 312.7L1400 302.7L1383.3 292.7z" fill="#a97ddb" fill-opacity="0.5" stroke="#a97ddb" stroke-opacity=".5" stroke-width="2" stroke-linejoin="round"/>
<path d="M1553.3 349.3L1563.3 351L1563.3 366L1555 364.3z" fill="#a97ddb" fill-opacity="0.5" stroke="#a97ddb" stroke-opacity=".5" stroke-width="2" stroke-linejoin="round"/>
<path d="M1556.7 376L1566.7 376L1573.3 392.7L1563.3 392.7z" fill="#a97ddb" fill-opacity="0.5" stroke="#a97ddb" stroke-opacity=".5" stroke-width="2" stroke-linejoin="round"/>
<path d="M1520 391L1543.3 382.7L1546.7 387.7L1523.3 397.7z" fill="#a97ddb" fill-opacity="0.4" stroke="#a97ddb" stroke-opacity=".5" stroke-width="2" stroke-linejoin="round"/>
<path d="M1483.3 412.7L1500 404.3L1503.3 409.3L1485 419.3z" fill="#a97ddb" fill-opacity="0.4" stroke="#a97ddb" stroke-opacity=".5" stroke-width="2" stroke-linejoin="round"/>
<path d="M1560 416L1573.3 414.3L1573.3 442.7L1563.3 442.7L1556.7 429.3z" fill="#a97ddb" fill-opacity="0.4" stroke="#a97ddb" stroke-opacity=".5" stroke-width="2" stroke-linejoin="round"/>
<path d="M1350 379.3L1370 381L1370 399.3L1351.7 397.7z" fill="#a97ddb" fill-opacity="0.4" stroke="#a97ddb" stroke-opacity=".5" stroke-width="2" stroke-linejoin="round"/>
<path d="M1380 397.7L1390 401L1380 429.3L1363.3 432.7L1355 419.3z" fill="#a97ddb" fill-opacity="0.6" stroke="#a97ddb" stroke-opacity=".5" stroke-width="2" stroke-linejoin="round"/>
<path d="M1391.7 376L1398.3 376L1391.7 409.3L1380 432.7L1378.3 422.7L1388.3 402.7z" fill="#a97ddb" fill-opacity="0.5" stroke="#a97ddb" stroke-opacity=".5" stroke-width="2" stroke-linejoin="round"/>
<path d="M1333.3 462.7L1346.7 457.7L1348.3 466L1336.7 471z" fill="#a97ddb" fill-opacity="0.6" stroke="#a97ddb" stroke-opacity=".5" stroke-width="2" stroke-linejoin="round"/>
<path d="M1313.3 426L1320 427.7L1319.3 442.7L1313.3 441z" fill="#a97ddb" fill-opacity="0.5" stroke="#a97ddb" stroke-opacity=".5" stroke-width="2" stroke-linejoin="round"/>
<path d="M1470 522.7L1480 519.3L1493.3 532.7L1496.7 551.7L1466.7 551.7z" fill="#a97ddb" fill-opacity="0.5" stroke="#a97ddb" stroke-opacity=".5" stroke-width="2" stroke-linejoin="round"/>
<path d="M1105 207.5L1125 212.5L1150 217.5L1162.5 207.5L1167.5 185L1182.5 177.5L1210 177.5L1225 185L1235 197.5L1236.2 210L1260 207.5L1230 216.2L1210 227.5L1197.5 242.5L1191.2 262.5L1200 270L1302.5 270L1308.8 270L1300 300L1292.5 330L1285 360L1280 376.8L1285 392L1282.5 409.5L1270 427L1250 434.5L1235 442L1220 434.5L1210 444.5L1200 427L1182.5 409.5L1165 397L1147.5 402L1137.5 402L1140 377L1137.5 350L1138.8 330L1140 310L1135 287.5L1128.8 270L1130 252.5L1125 232.5L1115 217.5z" fill="#a97ddb" fill-opacity=".42" stroke="#a97ddb" stroke-width="3" stroke-linejoin="round"/>
<path d="M1262.5 210L1230 217.5L1211.2 228.8L1198.8 242.5L1193 261.2L1200 267L1293.8 267L1300 257.5L1307.5 242.5L1317.5 225L1325 212.5L1300 205z" fill="#a97ddb" fill-opacity="0"/>
<path d="M1105 207.5L1117.5 207.5L1150 217.5L1162.5 227.5L1165 252.5L1145 270L1130 252.5L1125 232.5L1115 217.5z" fill="#a97ddb" fill-opacity="0.4" stroke="#a97ddb" stroke-opacity=".5" stroke-width="2" stroke-linejoin="round"/>
<path d="M1165 185L1182.5 177.5L1195 180L1210 177.5L1225 185L1235 197.5L1236.2 210L1260 207.5L1262.5 185L1260 175L1240 175L1230 180L1215 172.5L1195 172.5L1175 170L1167.5 177.5z" fill="#a97ddb" fill-opacity="0.4" stroke="#a97ddb" stroke-opacity=".5" stroke-width="2" stroke-linejoin="round"/>
<path d="M1235 210L1260 207.5L1230 216.2L1210 227.5L1197.5 242.5L1191.2 262.5L1186.2 260L1192.5 240L1206.2 223.8L1227.5 212.5z" fill="#a97ddb" fill-opacity="0.5" stroke="#a97ddb" stroke-opacity=".5" stroke-width="2" stroke-linejoin="round"/>
<path d="M1200 268L1302.5 268L1308.8 270L1300 300L1292.5 330L1285 360L1280 376.8L1275 376.8L1281.2 360L1288.8 330L1296.2 300L1301.2 272.5L1200 272.5z" fill="#a97ddb" fill-opacity="0.4" stroke="#a97ddb" stroke-opacity=".5" stroke-width="2" stroke-linejoin="round"/>
<path d="M1136.2 376.8L1137.5 350L1138.8 330L1140 310L1135 287.5L1128.8 270L1135 270L1141.2 287.5L1146.2 310L1145 330L1143.8 350L1142.5 376.8z" fill="#a97ddb" fill-opacity="0.4" stroke="#a97ddb" stroke-opacity=".5" stroke-width="2" stroke-linejoin="round"/>
<path d="M1167.5 220L1187.5 217.5L1186.2 257.5L1170 256.2z" fill="#a97ddb" fill-opacity="0.4" stroke="#a97ddb" stroke-opacity=".5" stroke-width="2" stroke-linejoin="round"/>
<path d="M1153.8 424.5L1175 435.8L1195 439.5L1207.5 449.5L1200 459.5L1192.5 473.2L1185 454.5L1175 442L1153.8 429.5z" fill="#a97ddb" fill-opacity="0.6" stroke="#a97ddb" stroke-opacity=".5" stroke-width="2" stroke-linejoin="round"/>
<path d="M1207.5 402L1240 399.5L1250 427L1240 447L1250 462L1240 473.2L1225 464.5L1210 452L1207.5 427z" fill="#a97ddb" fill-opacity="0.1"/>
<path d="M1250 402L1285 404.5L1290 417L1302.5 427L1301.2 452L1297.5 463.2L1275 465L1260 462L1275 452L1290 442L1287.5 427L1265 422L1250 427z" fill="#a97ddb" fill-opacity="0.1"/>
<path d="M1136.2 377L1143.8 377L1150 402L1157.5 424.5L1152.5 427L1142.5 412z" fill="#a97ddb" fill-opacity="0.5" stroke="#a97ddb" stroke-opacity=".5" stroke-width="2" stroke-linejoin="round"/>
<path d="M1208.3 479.3L1223.3 476L1226.7 492.7L1216.7 509.3L1213.3 529.3L1208.3 536z" fill="#a97ddb" fill-opacity="0.1"/>
<path d="M1282.5 507.5L1292.5 505L1295 525L1305 530L1325 527.5L1330 520L1350 517.5L1362.5 512.5L1365 520L1360 532.5L1370 542.5L1370 550L1360 555L1350 557.5L1342.5 547.5L1335 545L1332.5 560L1325 570L1322.5 590L1317.5 602.5L1302.5 605L1292.5 607.5L1270 602.5L1267.5 595L1275 580L1280 562.5L1287.5 557.5L1287.5 535L1282.5 522.5z" fill="#a97ddb" fill-opacity="0.6" stroke="#a97ddb" stroke-opacity=".5" stroke-width="2" stroke-linejoin="round"/>
<path d="M1365 550L1375 555L1380 575L1370 575L1362.5 565z" fill="#a97ddb" fill-opacity="0.6" stroke="#a97ddb" stroke-opacity=".5" stroke-width="2" stroke-linejoin="round"/>
<path d="M1360 577.5L1372.5 578.8L1371.2 587.5L1361.2 586.2z" fill="#a97ddb" fill-opacity="0.6" stroke="#a97ddb" stroke-opacity=".5" stroke-width="2" stroke-linejoin="round"/>
<path d="M1302.5 482.5L1312.5 483.8L1312.5 492.5L1303.8 492z" fill="#a97ddb" fill-opacity="0.6" stroke="#a97ddb" stroke-opacity=".5" stroke-width="2" stroke-linejoin="round"/>
<path d="M1315 491.2L1337.5 492.5L1336.2 505L1320 506.2L1316.2 500z" fill="#a97ddb" fill-opacity="0.6" stroke="#a97ddb" stroke-opacity=".5" stroke-width="2" stroke-linejoin="round"/>
<path d="M1337.5 487.5L1350 488L1349.5 495L1338 494.5z" fill="#a97ddb" fill-opacity="0.6" stroke="#a97ddb" stroke-opacity=".5" stroke-width="2" stroke-linejoin="round"/>
<path d="M1350 483L1370 483.8L1369.5 492L1355 493.8z" fill="#a97ddb" fill-opacity="0.6" stroke="#a97ddb" stroke-opacity=".5" stroke-width="2" stroke-linejoin="round"/>
<path d="M1305 505L1315 506.2L1313.8 517.5L1306.2 515z" fill="#a97ddb" fill-opacity="0.5" stroke="#a97ddb" stroke-opacity=".5" stroke-width="2" stroke-linejoin="round"/>
<path d="M1245 492.5L1260 490L1280 502.5L1270 517.5L1257.5 522.5L1250 542.5L1245 565L1235 577.5L1227.5 567.5L1230 555L1242.5 542.5L1245 517.5z" fill="#a97ddb" fill-opacity="0.6" stroke="#a97ddb" stroke-opacity=".5" stroke-width="2" stroke-linejoin="round"/>
<path d="M1420 485L1432.5 475L1442.5 475L1440 490L1430 500L1427.5 512.5L1440 520L1442.5 535L1437.5 550L1440 565L1437.5 580L1427.5 600L1420 610L1422.5 632.5L1407.5 637.5L1400 632.5L1405 620L1415 607.5L1422.5 595L1430 580L1432.5 560L1430 542.5L1425 535L1427.5 525L1420 510z" fill="#a97ddb" fill-opacity="0.6" stroke="#a97ddb" stroke-opacity=".5" stroke-width="2" stroke-linejoin="round"/>
<path d="M1445 475L1459.8 475L1466.2 480L1459.8 485L1450 487.5L1445 497.5L1447.5 510L1455 522.5L1463.8 528.8L1460 532.5L1451.2 527.5L1442.5 512.5L1440 495z" fill="#a97ddb" fill-opacity="0.6" stroke="#a97ddb" stroke-opacity=".5" stroke-width="2" stroke-linejoin="round"/>
<path d="M1530 262.5L1565 255L1580 260L1575 275L1585 287.5L1597.5 295L1602.5 310L1597.5 322.5L1585 320L1575 312.5L1565 320L1567.5 332.5L1555 332.5L1540 325L1530 317.5L1517.5 295L1525 287.5L1528.8 270z" fill="#a97ddb" fill-opacity="0.6" stroke="#a97ddb" stroke-opacity=".5" stroke-width="2" stroke-linejoin="round"/>
<path d="M1580 255L1620 252.5L1622.5 275L1620 300L1602.5 305L1597.5 295L1585 287.5L1575 275z" fill="#a97ddb" fill-opacity="0"/>
<path d="M1605 280L1620 281.2L1618.8 295L1606.2 294.5z" fill="#a97ddb" fill-opacity="0.5" stroke="#a97ddb" stroke-opacity=".5" stroke-width="2" stroke-linejoin="round"/>
<path d="M1620 290L1640 291.2L1638.8 305L1621.2 304.5z" fill="#a97ddb" fill-opacity="0.5" stroke="#a97ddb" stroke-opacity=".5" stroke-width="2" stroke-linejoin="round"/>
<path d="M1630 275L1650 276.2L1648.8 295L1640 290L1631.2 288.8z" fill="#a97ddb" fill-opacity="0.5" stroke="#a97ddb" stroke-opacity=".5" stroke-width="2" stroke-linejoin="round"/>
<path d="M1572.5 352.5L1592.5 342.5L1605 330L1625 320L1642.5 312.5L1660 310L1661.2 320L1658.8 335L1642.5 332.5L1630 330L1615 340L1597.5 355L1577.5 362.5z" fill="#a97ddb" fill-opacity="0.5" stroke="#a97ddb" stroke-opacity=".5" stroke-width="2" stroke-linejoin="round"/>
<path d="M1575 362.5L1595 356.2L1593.8 370L1576.2 375z" fill="#a97ddb" fill-opacity="0.5" stroke="#a97ddb" stroke-opacity=".5" stroke-width="2" stroke-linejoin="round"/>
<path d="M1625 185L1632.5 195L1635 220L1630 232.5L1620 247.5L1612.5 245L1617.5 227.5L1623.8 207.5z" fill="#a97ddb" fill-opacity="0.6" stroke="#a97ddb" stroke-opacity=".5" stroke-width="2" stroke-linejoin="round"/>
<path d="M1562.5 195L1585 202.5L1582.5 217.5L1570 220L1562.5 242.5L1555 245L1560 227.5L1567.5 215L1575 207.5z" fill="#a97ddb" fill-opacity="0.5" stroke="#a97ddb" stroke-opacity=".5" stroke-width="2" stroke-linejoin="round"/>
<path d="M1480 273.8L1530 273.8L1528.8 282.5L1517.5 295L1500 288.8L1480 286.2z" fill="#a97ddb" fill-opacity="0.5" stroke="#a97ddb" stroke-opacity=".5" stroke-width="2" stroke-linejoin="round"/>
<path d="M1545 539.5L1557.5 541L1558 552L1546 551z" fill="#a97ddb" fill-opacity="0.6" stroke="#a97ddb" stroke-opacity=".5" stroke-width="2" stroke-linejoin="round"/>
<path d="M1204.5 552L1219.5 552L1217.8 572L1207.8 572z" fill="#a97ddb" fill-opacity="0.5" stroke="#a97ddb" stroke-opacity=".5" stroke-width="2" stroke-linejoin="round"/>
<path d="M1227.8 552L1252.7 552L1249.4 572L1241.1 583.6L1232.8 572z" fill="#a97ddb" fill-opacity="0.5" stroke="#a97ddb" stroke-opacity=".5" stroke-width="2" stroke-linejoin="round"/>
<path d="M1471.3 552L1492.9 552L1486.3 562L1474.6 560.3z" fill="#a97ddb" fill-opacity="0.5" stroke="#a97ddb" stroke-opacity=".5" stroke-width="2" stroke-linejoin="round"/>
<path d="M1499.6 695L1517.9 691.7L1519.5 698.4L1506.2 711.7L1496.2 728.3L1489.6 731.6L1492.9 711.7z" fill="#a97ddb" fill-opacity="0.5" stroke="#a97ddb" stroke-opacity=".5" stroke-width="2" stroke-linejoin="round"/>
<path d="M1479.6 741.6L1492.9 743.3L1491.2 768.2L1479.6 768.2z" fill="#a97ddb" fill-opacity="0.5" stroke="#a97ddb" stroke-opacity=".5" stroke-width="2" stroke-linejoin="round"/>
<path d="M1396.4 715L1404.8 713.3L1411.4 738.3L1403.1 740z" fill="#a97ddb" fill-opacity="0.5" stroke="#a97ddb" stroke-opacity=".5" stroke-width="2" stroke-linejoin="round"/>
<path d="M1393.1 766.6L1416.4 761.6L1418.1 771.6L1406.4 781.5L1394.8 778.2z" fill="#a97ddb" fill-opacity="0.4" stroke="#a97ddb" stroke-opacity=".5" stroke-width="2" stroke-linejoin="round"/>
<path d="M1524.5 700L1532.8 698.4L1534.5 710L1526.2 711.7z" fill="#a97ddb" fill-opacity="0.5" stroke="#a97ddb" stroke-opacity=".5" stroke-width="2" stroke-linejoin="round"/>
<path d="M1443 778.2L1512.9 773.2L1512.9 794.8L1492.9 808.2L1479.6 818.1L1456.3 827.1L1429.7 827.1L1439.7 804.8z" fill="#a97ddb" fill-opacity="0"/>
<path d="M1546.1 791.5L1566.1 794.8L1586.1 804.8L1600 818.1L1600 827.1L1579.4 827.1L1566.1 814.8L1546.1 808.2z" fill="#a97ddb" fill-opacity="0.4" stroke="#a97ddb" stroke-opacity=".5" stroke-width="2" stroke-linejoin="round"/>
<path d="M1369.8 818.1L1399.8 811.5L1401.4 818.1L1376.5 827.1L1369.8 827.1z" fill="#a97ddb" fill-opacity="0.4" stroke="#a97ddb" stroke-opacity=".5" stroke-width="2" stroke-linejoin="round"/>
<path d="M1716.7 276L1756.7 276L1755 282.7L1733.3 286L1720 281z" fill="#a97ddb" fill-opacity="0.5" stroke="#a97ddb" stroke-opacity=".5" stroke-width="2" stroke-linejoin="round"/>
<path d="M1786.7 286L1796.7 287.7L1795 296L1786.7 292.7z" fill="#a97ddb" fill-opacity="0.6" stroke="#a97ddb" stroke-opacity=".5" stroke-width="2" stroke-linejoin="round"/>
<path d="M1728.3 557L1735 558.7L1736.7 567L1730.7 565.3z" fill="#a97ddb" fill-opacity="0.6" stroke="#a97ddb" stroke-opacity=".5" stroke-width="2" stroke-linejoin="round"/>
<path d="M1736.7 592L1746.7 590.3L1746.7 597L1738.3 597z" fill="#a97ddb" fill-opacity="0.6" stroke="#a97ddb" stroke-opacity=".5" stroke-width="2" stroke-linejoin="round"/>
<path d="M1731.7 602L1737.3 602L1736.7 618.7L1723.3 632L1716.7 630.3L1728.3 617z" fill="#a97ddb" fill-opacity="0.5" stroke="#a97ddb" stroke-opacity=".5" stroke-width="2" stroke-linejoin="round"/>
<path d="M1686.7 647L1703.3 635.3L1713.3 635.3L1713.3 643.7L1700 652L1688.3 653.7z" fill="#a97ddb" fill-opacity="0.5" stroke="#a97ddb" stroke-opacity=".5" stroke-width="2" stroke-linejoin="round"/>
<path d="M1696.7 657L1703.3 657L1703.3 668.7L1696.7 667z" fill="#a97ddb" fill-opacity="0.5" stroke="#a97ddb" stroke-opacity=".5" stroke-width="2" stroke-linejoin="round"/>
<path d="M1785 620.3L1791.7 620.3L1795 637L1786.7 635.3z" fill="#a97ddb" fill-opacity="0.5" stroke="#a97ddb" stroke-opacity=".5" stroke-width="2" stroke-linejoin="round"/>
<path d="M1786.7 653.7L1795 652L1795 658L1787.3 658.7z" fill="#a97ddb" fill-opacity="0.5" stroke="#a97ddb" stroke-opacity=".5" stroke-width="2" stroke-linejoin="round"/>
<path d="M1743.3 672L1756.7 673.7L1765 682L1756.7 680.3L1745 677z" fill="#a97ddb" fill-opacity="0.4" stroke="#a97ddb" stroke-opacity=".5" stroke-width="2" stroke-linejoin="round"/>
<path d="M1826.7 582L1840 568.7L1853.3 552L1858.3 555.3L1848.3 572L1833.3 587z" fill="#a97ddb" fill-opacity="0.5" stroke="#a97ddb" stroke-opacity=".5" stroke-width="2" stroke-linejoin="round"/>
<path d="M1873.3 562L1878.3 562L1876.7 578.7L1871.7 577z" fill="#a97ddb" fill-opacity="0.5" stroke="#a97ddb" stroke-opacity=".5" stroke-width="2" stroke-linejoin="round"/>
<path d="M1633.3 778.7L1643.3 765.3L1663.3 755.3L1683.3 748.7L1691.7 743.7L1693.3 750.3L1680 762L1660 768.7L1643.3 782z" fill="#a97ddb" fill-opacity="0.5" stroke="#a97ddb" stroke-opacity=".5" stroke-width="2" stroke-linejoin="round"/>
<path d="M1630 785.3L1638.3 785.3L1641.7 798.7L1633.3 815.3L1623.3 827.7L1613.3 827.7L1626.7 808.7z" fill="#a97ddb" fill-opacity="0.5" stroke="#a97ddb" stroke-opacity=".5" stroke-width="2" stroke-linejoin="round"/>
<path d="M1710 722L1716.7 720.3L1718.3 728.7L1711.7 728.7z" fill="#a97ddb" fill-opacity="0.6" stroke="#a97ddb" stroke-opacity=".5" stroke-width="2" stroke-linejoin="round"/>
<path d="M1698.3 730.3L1705 730.3L1705 735.3L1699 735.3z" fill="#a97ddb" fill-opacity="0.6" stroke="#a97ddb" stroke-opacity=".5" stroke-width="2" stroke-linejoin="round"/>
<path d="M1670 777L1676 776L1678.3 790.3L1672.7 790.3z" fill="#a97ddb" fill-opacity="0.5" stroke="#a97ddb" stroke-opacity=".5" stroke-width="2" stroke-linejoin="round"/>
<path d="M1725 785.3L1731.7 785.3L1728.3 808.7L1720.7 808.7z" fill="#a97ddb" fill-opacity="0.4" stroke="#a97ddb" stroke-opacity=".5" stroke-width="2" stroke-linejoin="round"/>
<path d="M1270 195L1285 195L1285 203.3L1270 203.3z" fill="#a97ddb" fill-opacity=".3" stroke="#a97ddb" stroke-width="2.500" stroke-linejoin="round"/>
<path d="M1573.3 344.3L1596.7 339.3L1599.7 351L1576.7 357.7z" fill="#a97ddb" fill-opacity=".3" stroke="#a97ddb" stroke-width="2.500" stroke-linejoin="round"/>
<path d="M1446.3 781.5L1466.3 774.9L1492.9 778.2L1512.9 774.9L1509.5 791.5L1492.9 804.8L1479.6 814.8L1453 827.1L1436.4 827.1L1443 804.8z" fill="#a97ddb" fill-opacity=".3" stroke="#a97ddb" stroke-width="2.500" stroke-linejoin="round"/>
<path d="M1512.9 788.2L1526.2 778.2L1542.8 781.5L1546.1 798.2L1532.8 808.2L1516.2 809.8L1509.5 799.8z" fill="#a97ddb" fill-opacity=".3" stroke="#a97ddb" stroke-width="2.500" stroke-linejoin="round"/>
<path d="M1663.3 760.3L1686.7 748.7L1690 757L1666.7 767z" fill="#a97ddb" fill-opacity=".3" stroke="#a97ddb" stroke-width="2.500" stroke-linejoin="round"/>
<path d="M1308.3 270C1309.7 263.9 1311.4 245 1316.7 233.3C1322 221.6 1331.1 210.6 1340 200C1348.9 189.4 1363.9 178.9 1370 170C1376.1 161.1 1377.2 153.9 1376.7 146.7C1376.2 139.5 1371.2 134.5 1366.7 126.7C1362.2 118.9 1355.6 108.3 1350 100C1344.4 91.7 1336.1 80.6 1333.3 76.7" fill="none" stroke="#a97ddb" stroke-width="11" stroke-linecap="round"/>
<path d="M1308.3 270C1309.7 263.9 1311.4 245 1316.7 233.3C1322 221.6 1331.1 210.6 1340 200C1348.9 189.4 1363.9 178.9 1370 170C1376.1 161.1 1377.2 153.9 1376.7 146.7C1376.2 139.5 1371.2 134.5 1366.7 126.7C1362.2 118.9 1355.6 108.3 1350 100C1344.4 91.7 1336.1 80.6 1333.3 76.7" fill="none" stroke="#d2bfec" stroke-width="3.5" stroke-linecap="round"/>
<path d="M1200.1 159.6l-0.2 0.8M1206.9 163.8l-0.5 0.4M1230.3 153.5l-0.5 1.1M1243.1 107.2l0.4 0.3M1258.6 158.7l-0.5 0.5M1273.1 139.8l0.3 0.4M1143.4 85.4l-0.2 0.6M1079.7 108.9l0.6 0.1M1095.3 119.9l-0.5 0.2M1098.2 137.7l0.1 1.2M1069.7 148.9l0.7 0.9M991.9 219l-0.3 0.7M1216.2 53.1l1 0.4M1188.6 2.5l-0.6 0.4M1180.1 173.1l-0.1 0.4M1173.5 179.9l-0.3 0.3M1193.6 172.9l-0.6 0.8M1246.9 173.1l-0.3 0.4M1252.8 186.6l1 0.3M1249.7 199.8l0.5 0.5M1264.6 186.3l0.8 0.7M1280.3 99.7l-0.6 0.5M1293.7 123.1l-0.8 0.5M1320.4 89.6l-0.8 0.8M1310 106.3l0.1 0.7M1329.8 49.9l0.3 0.2M1313.3 33l0.1 0.5M1343.4 79.8l-0.3 0.4M1333.5 46.6l-0.3 0.2M1307.2 43l-1 0.6M1343.1 54.9l0.4 0.3M1321.5 111.4l0.5 0.6M1328 116.3l0.7 0.9M1303.4 119.7l-0.3 0.7M1293.5 148.2l-0.5 0.2M1305.3 146.7l-0.6 0.1M1243.2 234.8l0.3 0.3M1259.9 233.2l0.2 0.3M1280.5 233.2l-1 0.2M1286.8 238l-0.2 0.6M1223.8 246.5l-0.9 0.5M1238.8 248.1l-1.1 0.4M1256.2 253.2l0.9 0.2M1296.5 246.3l0.4 0.7M1276.7 259.7l0 0.6M1216.5 263.2l0.4 0.3M1200.4 253l-0.9 0.7M1246.9 216.7l-0.4 0M1266.3 219.7l0.9 0.6M1330 71.5l-0.1 0.4M1324.6 64.6l0.8 0.7M1320.2 59.2l-0.3 0.3M1315.5 51.6l-1.1 0.1M1310.4 43.2l0.6 0.1M1307.5 34.9l-0.4 0.1M1306.4 26.6l-0.7 0.1M1304.9 18.1l0.7 0.3M1306.5 9.8l0.3 0.4M1309 2.5l0.6 0.5M1318.3 54.7l-0 0.6M1311.5 46.3l0.3 0.9M1293.1 123.2l0.4 0.3M1295.1 146.2l-0.3 1.1M1306.6 146.1l0.3 1.1M1285.1 181.4l-0.2 0.6M1283.2 219.5l0.1 1.1M1287 238l-0.6 0.6M1319.8 91.7l0.3 0.1M1313.3 106.4l-0 0.7M1330.4 116.6l-0.7 0.3M1326.9 106.4l-0.5 0.6M1281.7 102.8l-0.1 1M1362.1 141.3l-0.8 0.8M1313.6 33.2l-0.6 0.2M1305.5 43.3l-0.9 0.1M1320.1 58l-0.2 0.6M1342.9 79.8l0.9 0.4M1400.2 21.3l-0.4 0.8M1290.4 166.6l-0.7 0.2M1300.1 173l-0.1 0.6M1326.8 132.9l-0.1 0.7M1336.6 109.5l0.2 1M1546.4 31.4l0.6 0.6M1551.6 34.7l0.2 0.5M1549.7 54.5l0.6 1.1M1536.2 79.3l1 1.5M1527.7 94.9l1.2 0.1M1513.4 112.5l-0.2 1.6M1520.4 116.2l-0.8 1M1543.2 112.6l0.1 1.4M1546.9 123.2l-0.5 0.2M1554 116.5l-1.5 0.4M1556.5 126l0.4 1.3M1574.1 113.3l-1.6 0M1580.1 119.7l-0.2 0.6M1572.6 126.2l1.4 1M1520.5 69.6l-1 0.7M1549.9 159.7l0.3 0.6M1556.9 153.1l-0.4 0.4M1579.7 166.6l0.6 0.1M1539.4 173.2l1.1 0.3M1593.2 159.8l0.3 0.3M1606.8 173l-0.2 0.7M1546.7 199.5l0 1.1M1540.5 219.7l-0.9 0.7M1596.6 186.2l0.2 1M1607 199.8l-0.5 0.4M1715.1 6.4l-0.2 0.6M1771.8 13.2l-0.2 0.3M1796.8 14.8l-0.2 0.3M1816.3 16.5l0.7 0.5M1826.6 11.2l0.3 1.1M1813.8 61.4l-1 0.6M1849.8 72.9l0.4 0.7M1903.7 133l-0.7 0.6M1916.3 139.6l0.8 0.8M1906.4 209.6l0.6 0.8M1910.1 229.6l-0.3 0.8M1859.9 261.2l0.2 1M1720.4 251.3l-0.8 0.8M1653.3 209.8l0.1 0.3M1667.1 201.4l-0.8 0.6M1679.9 216.4l0.2 0.6M1646.6 253l0.2 0.5M1673 248.2l0.5 0.2M1630.3 166.5l-0.7 0.3M1613.4 128.2l-0.3 0.1M1653.2 173.2l0.2 0.2M1886.8 129.8l-0.1 0.5M1856.8 96.3l-0.1 0.9M1900.2 179.5l-0.3 1M1913.5 182.7l-0.4 1.3M1714.7 6.2l0.5 0.9M1773.6 12.9l-0.6 0.9M1766.6 14.8l0.3 0.4M1796.6 14.8l0.2 0.4M1813.4 12.8l-0.2 1.1M1820.5 18.2l-0.9 0.2M1828.5 11.5l-0.4 0.4M1813.6 62.5l-0.6 0.5M1612.8 128.1l1 0.5M1643.1 179.7l0.4 0.6M1653.5 194.7l-0.4 0.7M1653.2 209.7l0.3 0.6M1667.1 199.6l-0.9 0.7M1681.8 216.5l-0.2 0.4M1721.4 251.5l0.6 0.3M1724.7 266.5l0.7 0.3M1687.3 263.1l-1.1 0.4M1712.9 229.6l0.9 0.8M1650.3 229.8l-0.6 0.4M1666.1 248.1l1.1 0.4M1679.5 248.2l1 0.3M1496.8 355.6l-0.2 0.7M1503 347.2l0.7 0.9M1409.4 482.5l1.1 0.4M1381.4 484.2l0.7 0.1M1340.3 372.5l-0.7 0.4M1360.3 372.5l-0.6 0.5M1376.9 357.2l-0.4 1M1319.5 402.5l1.1 0.5M1380.3 365.8l-0.7 0.5M1346.8 345.8l-0.2 0.4M1360.3 347.6l-0.6 0.2M1532.8 402.6l0.9 0.1M1546.9 422.3l-0.5 0.7M1550.1 448.9l-0.3 0.8M1582.9 467.3l0.7 0.9M1589.9 455.8l0.3 0.4M1576.8 475.7l-0.1 0.6M1593.6 412.5l-0.5 0.3M1579.7 405.5l0.6 1.1M1520 309.1l0.1 0.4M1387 392.2l-0.6 1M1339.9 385.5l0.2 1.1M1121.9 384l-0.4 0.6M1128.8 379.2l-0.9 0.2M1126.9 390.8l-0.4 0.3M1144.7 414.3l0.7 0M1149.6 421l0.8 0M1380.1 484.7l-0.1 0.6M1410.1 482.1l-0.2 0.9M1267.9 614.9l-0.9 0.1M1268.8 623.5l0.1 0.6M1296.7 623.6l-0.9 0.5M1289 635.9l-0.4 0.7M1281.1 657.3l0.2 0.4M1280.7 662.3l1 0.5M1319.3 614.7l-1 0.6M1390.4 637.6l-0.7 0.8M1302.4 616.1l0.3 0.1M1652.2 209.8l0.5 0.5M1654.9 252.4l0.2 0.3M1678.7 249.7l0.3 0.7M1677.7 270.8l-0.4 0.9M1686.1 284.5l0.1 1M1717.3 277.1l0.3 0.7M1503.9 347.1l-0.2 0.8M1498.3 356l1 0.4M1616 182.2l0.5 0.6M1719 252.2l-0.4 0.6M1645.1 194.5l-0.1 1M1667.4 202l0.1 1M1682.8 215.9l-0.5 0.6M1551.2 244.5l-0.1 1M1555.9 235l0.6 0M1642.7 271.2l-0.3 0M1659.9 305.7l0.3 0.9M1653.9 334.9l-0.2 0.3M1267.5 620.1l0.4 0.3M1269.6 625.1l-0.4 0.2M1274 732.9l0.9 0.8M1302.9 726.4l-0.7 0.7M1281.1 658.1l-0.2 0.7M1281.8 662.9l0.3 1.1M1289.4 636.3l-0.3 0.9M1297.6 623l0.2 0.9M1318.8 615.1l1 0.1M1389.6 638.2l0.3 0.7M1302.8 726.5l1 0.4M1389.6 638.1l0.3 0.8M1413.4 788l-0.7 0.3M1281.4 658.1l0.7 0.7M1316.3 613.3l0.5 0.3M1296.8 623.2l-0.4 0.6M1290.2 636.6l-0.4 0.5M1687.3 284.7l-1.2 1.1M1861.5 283.8l0.4 1M1890.5 287.2l-0.9 0.9M1842.8 297.1l1 1.1M1870.5 328.7l-1.1 0M1833 367.6l-0.6 0.2M1781.9 391.3l-0.3 0.7M1709.7 395.1l0.7 0.4M1745 399.7l1.5 0.6M1751 442.3l0.1 0.8M1715.8 449.8l0.5 1.1M1675.6 454.9l0.7 0.2M1638.8 417.9l0.4 1.7M1639.3 439.6l-0 0.7M1615.6 419.3l-1.1 0.1M1606.4 429.3l0.7 1.5M1613.6 434.8l-0.7 1M1620.8 439.6l-1.5 0.8M1626.6 440.7l0.2 0.5M1617.5 449.1l1.7 0.4M1863.4 514.7l-1.4 0.5M1759.4 285.9l1.2 0.1M1895.1 614.4l-0.2 0.5M1742.8 710.8l-0.3 1M1747.6 710.1l-1.7 0.4M1871.4 585.1l0.6 0.4M1853 570.3l0.6 0.1M1742.8 774.5l1 0.3" fill="none" stroke="#a97ddb" stroke-width="3.600" stroke-linecap="round"/>
<path d="M1029.6 206.1l1.2 0M1035.7 201.7l0 3.5M1045.1 203.7l2.9 2.9M1033.3 205.7l0 4.3M1036.2 210l0 1.7M1040 208.7l3.2 -3.2M1025.1 211.9l1.3 0M1035.4 212.6l5.2 0M1040.7 213.2l0 1.6M1029.1 217.8l1.7 0M1033.5 217.7l1.3 -1.3M1039.2 214l0 5.3M1075.4 199.7l4.6 0M1083.5 197.4l0 4.3M1086.9 201.6l3.8 -3.8M1083.4 200.2l3.3 3.3M1088.2 206.5l1.6 0M1093.1 207.5l2.5 -2.5M1096 213.3l5.4 0M1103.5 211.8l0.2 4.7M1106.6 212.1l2.6 0M1101.2 218.6l4.6 0M1107.3 218.1l0.7 0.7M1108.7 219.2l3.5 2.5M1121.1 219l1.2 1.2M1108.8 226.2l3.8 -3.8M1122.3 226l1.2 1.2M1125.9 228.1l2.7 -2.7M1121.1 229.1l0 4.6M1125 228l4 3.6M1128.3 230.3l3.8 0M1125.5 235l1.5 -1.5M1126.5 235.8l4.2 0M1130 237l5.3 0M1125.2 241.1l4.7 0M1136.3 239.5l2.7 2.7M1130.4 244.1l4.4 0M1137.6 242.1l0 4.4M1135.3 250l1 1M1192.8 166.1l3.2 3.2M1197.1 170.6l4.6 0M1252 170.9l3.5 -3.5M1263.2 169.1l0 2.7M1177 174.3l2.6 2.6M1184.5 172.8l-1.6 3.4M1186.1 172.8l0 1.2M1196.7 173.5l1.9 0M1200.8 172.7l2.8 2.8M1204.2 172.6l0 2.8M1214.1 172.2l0 3.9M1235.3 175l3.9 0M1243.4 172.9l1.3 -1.3M1245.3 171.4l2.3 2.3M1250.1 175.8l5.4 0M1258.4 175.5l3.9 0M1266.2 173.7l1.3 1.3M1268 173.5l1.7 0M1171.9 176.5l1.5 1.5M1177.2 178.6l2 2M1178.9 179.1l2.3 -2.3M1185.6 177.8l-2.2 2.5M1188.6 178.5l1.1 0M1191.1 179l5.4 0M1211.5 180.1l2.1 0M1219.2 178.4l2.4 0M1224.1 180.2l4.6 0M1230.2 178.3l2.5 2.5M1239.7 180l-4.9 0.1M1241.2 178l2.6 0M1246.1 178.3l2.3 0M1260 178.3l1.8 2.3M1173.5 183.9l3.5 -3.5M1179.9 182.7l1.5 1.5M1185.7 181.3l1.7 0M1190.3 181.5l1.6 0M1192.3 184.2l1.3 -1.3M1196.5 180.8l3 3M1206.7 184.1l2.2 0M1217.1 184.6l3.4 0.6M1219.7 182.3l3.5 3.8M1225.5 181.4l4.8 0M1233.3 180.3l1.9 4.8M1240.6 185.9l2.9 -2.9M1247.8 182.3l3.5 0M1251.3 181.2l2.6 0M1257.4 180.7l-0.7 1M1165.1 187.4l0 2.9M1169.2 184.2l0 5.1M1176.5 187.7l0.7 0.9M1182.5 188.5l3.6 0M1188.2 187.4l1 0M1199.2 187.2l1.5 -1.5M1204.5 186.2l1.2 1.2M1208.1 190.4l3.2 -3.2M1212.8 186.5l0.5 1.3M1217.6 187l2.3 -2.3M1220 190.5l2.6 -2.6M1226.5 188.7l1.2 -1.2M1238.8 186.2l3.3 0M1253.8 188.1l2.2 0M1259 189.7l2.7 0M1175.5 193l-1.6 0.8M1175.5 191.3l1.5 1.5M1180.9 192.1l2.2 2.2M1220.3 193.1l1.4 -1.4M1230.7 194.3l4.3 0M1237.5 192.9l1.1 0M1241.9 191.2l0 1.5M1259.3 192.6l-0.9 1.8M1165 194.5l2.7 2.7M1169.8 198l0.9 0.9M1232.3 198.7l1 -1M1236.9 196.9l1.5 1.5M1237.3 196.9l4.2 0M1242 195.6l4.8 0M1249.9 195.7l0 2.9M1256.4 197.1l0.5 1M1161.4 200.3l0 4.9M1165 200.3l2.4 0M1169.2 201.8l2.8 0M1237.5 200.7l2.9 0M1242.7 201.2l3.2 0M1259.2 197.2l-1.6 5.2M1166.5 204.1l0 5.1M1155.5 214.1l2.9 -2.9M1161 209.4l1.3 1.3M1148.9 212.4l2.3 2.3M1161.4 215.2l0 3.5M1144.6 220.4l1.8 0M1148.9 220.4l2 2M1158.1 218l1.1 1.1M1146.3 223.9l1.1 1.1M1149.8 223.5l1.7 0M1152.2 223l3.8 3.8M1132.7 229.5l4.5 0M1136.5 229.7l3.3 -3.3M1317.3 167.7l1.1 0M1311.5 170.1l2.6 0.3M1318.3 169.6l0 3.3M1314.2 172.9l0 3.3M1303.3 180.1l3.5 -3.5M1307.7 179.9l3.9 -3.9M1315.1 175.8l0 4.2M1317.4 181.4l4 0M1320.9 177.8l3.4 3.7M1307.9 182.9l1.5 0M1294.3 185.2l3.5 -3.5M1302.2 185.1l1.6 1.6M1285.5 188.9l1.3 2.5M1288.8 189.2l2 0M1296.2 190.5l2.8 0M1312.1 190l2.4 0M1319.6 190.3l1.3 0M1280.7 194.5l2 0M1282 192.8l3.2 3.2M1289.9 194.9l2.6 0M1296.1 193.4l1.8 1.8M1305 192l-1.9 0.5M1308.8 192.3l0 1.7M1312 195.4l3.4 -3.4M1317.2 192.6l0.7 3.5M1289.7 194.1l0 4.4M1290.8 198.9l2.3 0M1298.2 199.5l-3.2 0.7M1303.6 197.4l-0.1 4.1M1309.8 199.9l1.5 -1.5M1320.9 196.6l1 1M1287 202.4l-1 2.1M1292.8 201.3l3.5 0M1307.6 201.2l1.2 0M1312.1 201.9l1.7 0M1315.3 203l1 0M1323.7 202.3l-2.2 2.7M1292.2 206.3l1.1 0M1294.6 207.6l3.4 -3.4M1307.2 207l0 2.4M1309.3 207.5l1.3 0M1285.5 210.3l1 1M1289.6 211.7l1.1 0M1295.1 213.2l4 0M1300.8 209l1 5.2M1303.1 214.2l2.9 -2.9M1308.8 209.9l3.8 3.8M1304.9 214.5l0 3.5M1482 32.6l5.3 0M1494.9 34.1l2.2 0M1484.1 35.5l1.4 1.4M1497.4 36.8l-1.1 0.2M1498.5 39.1l3.3 0M1504.8 37.3l1.8 1.8M1492.9 42.7l1.1 1.1M1493.9 42l2.4 -2.4M1501.6 40.1l-1.5 0M1504.1 42.7l4.1 0M1473.7 46.5l1.2 -1.2M1480.9 45.3l-0.7 1M1482.6 46l0 1.2M1485.5 47.5l2.7 -2.7M1490.7 47.3l3 0M1498.5 48.3l3.1 -3.1M1503.3 45.3l3.4 0M1470.8 51.3l2.3 0M1480.4 51.1l5.2 0M1486 52.2l1.4 0M1495 51.5l1.4 0M1502.7 48.5l-3.6 2.9M1504.5 49.3l3.8 0M1471.8 56.8l3.5 -3.5M1477.5 55.5l1.3 -1.3M1481.5 54.2l1.5 0M1485 55.3l-1 1.1M1490.3 55l0 4M1493 54.9l0 2.4M1505.1 51.1l0.1 5.4M1505.9 56.1l1.7 1.7M1462.9 60.9l3 1.5M1467.7 61.8l5.2 0M1471.5 57.2l2 2M1483 61.6l3.3 0M1490.8 61.1l-2.3 1.4M1495.1 63.4l3.3 -3.3M1499.2 58.5l3.4 1M1505.6 58.5l4.8 0M1439.6 66.8l1.5 -1.5M1449.2 67.6l2.1 -2.1M1459 64.5l2.4 -2.4M1463.9 65.9l4.9 0M1471.5 65l1 0M1506.2 66.2l1.2 -1.2M1436.9 70.8l3.8 0M1441.9 67.9l0 1.1M1449.4 67.6l-5.1 0.9M1456.2 68.5l2.5 0M1469.6 66.3l0 2.9M1472.5 67.7l3.4 0M1481.8 71.1l3.9 0M1493.1 70.2l2.1 -2.1M1497.4 70.2l2.5 0M1505.7 69.9l4 0M1428.6 75.7l3.2 0M1440.2 73.5l2.1 0M1442.8 73.9l0 3.1M1451.5 74.4l-2 1.4M1476.4 72.3l0 4.3M1482.8 72.9l3 0M1494.7 73.2l2.8 0M1501.5 72.5l2.8 2.8M1421.4 78l1 1M1425.9 78.4l1.9 0.8M1427.7 78l5.5 0M1433.4 78.8l2.7 2.7M1438.4 79.4l1.8 -1.8M1442.1 78.3l4 0M1449.1 75.8l0 4.8M1473.3 79.5l4.8 0M1476.6 76.4l3.9 2.4M1482.9 76.7l1.7 0M1486.9 76.9l3.5 3.5M1491.4 80.3l3.8 0M1502.4 79.6l3.3 -3.3M1417 84.6l3.7 0.7M1420.1 80.3l2.4 2.4M1424.1 84l2.3 0M1430 81.7l4.7 0M1434.8 81.3l3 3M1438.8 84.8l2.2 0M1448.6 84l2 2M1452.5 83.8l1 1M1482.9 83.9l0.8 -0.8M1484.6 82.6l0 5.3M1489.7 83.7l1.1 0M1407.3 88.8l5.2 0M1409.9 87l3.2 0M1425.7 86.5l4.9 0M1428.9 91.2l3.4 -3.4M1434.8 88.7l3.5 0M1443.9 87.5l1.4 1.4M1454.6 90.2l1.5 -1.5M1468.8 86.4l0 4.8M1469.8 87.8l4.9 0M1476.8 88l3.9 0M1484.3 87.6l2.1 -2.1M1489.3 89.2l1.7 -1.7M1494.4 87.7l2.3 -2.3M1406.9 90.1l2.1 2.1M1413.3 92.6l0 1.2M1416.1 90.2l-1.1 1.4M1420.5 90.8l2.6 0M1426.9 92.1l3.2 0M1438.6 93l4.5 0M1443.3 93.9l3.7 0M1453.6 94.1l4.1 0M1459 92.6l-3.2 0.8M1460.5 94.6l1.9 -1.9M1468 92.3l1.2 -1.2M1474.6 94.5l2.9 -2.9M1479.3 93.4l3.6 0M1493.8 90.3l0 3.6M1409.9 99.6l1.7 -1.7M1416.4 97.2l3.1 3.1M1434.5 97.2l3.1 0M1444.5 95.5l-3.2 2.7M1447.6 98.5l-4 0.5M1447.6 97.4l4.2 0M1454.1 97.8l2.3 -2.3M1455.2 98.3l5.5 0M1464.3 97.4l1 1M1467.8 96.1l0 5.1M1471.1 98.3l5.1 0M1477.2 94.2l-0.9 3.2M1480 98.9l3.7 0M1410 100.8l2.9 2.9M1416.8 97.7l0 5.1M1418 100.1l4.2 3M1426 100.8l1.1 1.1M1427.4 101.3l3.6 0M1435.1 99.8l4.6 0M1448.4 102.9l1 0M1463.1 100.1l1.7 0M1469.8 97.8l-1.3 4.4M1476.8 104.1l1.4 -1.4M1480.5 100.1l3.8 0M1486.1 100.8l1.3 -1.3M1407.8 106.5l3.6 0M1414.3 107.6l2 0M1417.8 105.9l2.5 0M1422.7 106.8l2.7 0M1430.7 107.3l4 0M1436.8 105.4l2.5 2.5M1441.3 106.3l2 2.2M1448.7 104.6l1.3 0M1452.8 104.1l1.6 1.6M1459.2 106.9l1.4 -1.4M1466.5 106.4l1.6 -1.6M1471.5 104.7l0 4M1475.1 104.6l0 1.7M1476.8 107.8l1.9 0M1483 104.9l2.6 1.6M1487.6 105.7l5 0M1491 105.8l3.4 0M1521.1 105.9l0 2.4M1524.6 108.1l3.4 -3.4M1530.9 105.6l0 3.2M1406.6 110.1l3 3M1410.6 110.4l3.1 0M1416.2 110.2l0 3.6M1422.3 108.5l0 2.7M1425.6 108.6l0 2.1M1429.2 111l4.2 0M1431.6 109.8l3.3 3.3M1441.3 109.2l2.4 0M1447.2 110l3.4 1.1M1450.6 111.8l2.3 -2.3M1461.2 111.7l1.4 1.4M1467.2 110.7l1.3 -1.3M1476.2 107.8l3.2 3.3M1483.9 108l0 3.2M1488.2 108.7l1.1 2.6M1493.9 110.8l2.9 2.9M1499 111.8l2 2M1503.7 111.9l3.1 -3.1M1508.8 110.2l0 1.8M1511.7 113.1l1.4 -1.4M1520.1 107.4l3.8 3.8M1522.9 109.7l3.3 3.3M1530.7 110.5l3.9 0M1536.4 109.8l0 3.3M1389.3 117.3l1.4 -1.4M1397.4 114.4l2.1 2.1M1409.2 115.5l0 3.7M1413.3 115.5l3.4 -3.4M1418.4 116.1l2.3 0M1422.3 114.6l1.4 0M1426.6 115.6l1.6 -1.6M1434.7 113.9l3.7 3.7M1438.8 118l2.8 -2.8M1445.6 115.6l2.6 0M1450.5 116.7l1.2 0.7M1456.2 112.5l-1.3 2.6M1459.8 117.2l2.7 0M1463.9 117.4l2 -2M1468.3 112.2l0 5.5M1474.4 115.5l-2.4 2.5M1481.7 115.2l4.8 0M1486.2 114.1l3.2 0M1493.2 112.8l0 5.4M1494.8 113l1.4 1.4M1498.1 115.2l5.3 0M1503 114l2.7 0.9M1509.4 113.8l2.7 0M1514.8 116.9l3.8 0M1519.1 116.3l1.2 1.2M1521.8 112.9l4.5 3.1M1527.3 116.1l4.7 0M1384.8 118.9l0 2.8M1389.5 120l2.8 0M1398.7 117.9l0 1.2M1402.6 118.9l3.6 3.6M1405.2 121.6l2.7 -2.7M1415.5 121.7l2.9 0M1421.4 119.8l2.8 1.4M1425.6 120.1l1.7 0M1433.2 120.6l1.8 2M1438.6 118.9l0 3.8M1455.3 116l0 5.2M1453.8 119.1l4.8 0M1460.7 120.1l0 2.5M1464.2 120.3l3.5 -3.5M1472.3 119.8l2 0M1478.3 120.5l0 1.4M1482.2 118.4l0 5.4M1481.8 118.7l4.8 0M1488.7 119.1l3.8 0M1493.4 118.6l1.9 0M1499.8 116.9l-2.1 2.3M1504.5 118.6l1.7 0M1506.2 121l1.6 0M1516.8 120.1l3.2 -3.2M1520.9 121.1l4.9 0M1524.5 118.8l1.7 1.7M1529.5 120.1l2.7 2.7M1533.9 117.7l1.5 1.5M1382 123.5l2.8 2.8M1387 126.3l2.4 -2.4M1391.8 123.2l0.8 0.8M1395.9 124.6l2.6 0M1401.1 124.4l3.6 3.6M1403.9 122.9l4.1 0M1414 122.9l1.6 0M1424.3 124.6l0 1.8M1428.1 123.7l0 4.4M1439.6 121.2l0 3.4M1443.7 122.5l0 1.1M1453.2 122.8l0 1.9M1456.3 122.4l2.4 4.9M1459.2 126.5l3.7 0M1465.3 123.5l3.2 3.2M1469.7 125.6l2.5 0M1474.5 125.4l3.9 0M1478.6 126.7l2.3 -2.3M1486.9 122.7l3.6 0M1489.8 125.5l5.3 0M1495.7 123.8l3.7 3.7M1502.1 123.6l0 4M1507.1 125.5l4.6 0M1511.2 123.4l0 1.1M1518.3 122.4l0 2.5M1520.5 123.5l1.7 1.7M1524.4 127.3l3.2 -3.2M1530.8 122.6l0 3.7M1598.4 123.4l0 4.5M1381.4 125.9l0 4M1390.5 128.1l1.1 -1.1M1400.8 127.5l3.9 3.9M1410.5 127.4l-3.8 1.3M1410.3 128.1l2 2M1417.5 130.8l-4.9 0.7M1423 132.1l3.5 -3.5M1430.2 127l0.3 2.6M1432.9 131.3l1.4 -1.4M1437.3 127.9l1.3 1.3M1449.1 128.9l1.1 3.7M1451 129.9l2.5 0M1462.1 127.1l-1.6 1.9M1465.8 130.1l3.5 1.8M1472.2 130l0.9 -0.9M1475 130.6l1.9 -1.9M1479.3 128.9l3 0M1483.8 127.7l2.7 0M1494.3 128.3l5.1 0M1497.5 128.8l2.1 2.1M1511.8 127.5l-3.5 2.3M1511.2 127.8l4.3 0M1523 130.3l2.9 0M1524.8 130.9l3 0M1528.6 130.8l4.3 0M1587.3 129l1.2 -1.2M1588.8 126.1l3.3 3.3M1600.4 128.1l-1.8 1.1M1388.8 129.8l0 4.9M1395.7 133.3l0.9 0.9M1405.1 132.3l0 4.2M1415.7 135.1l1 -1M1420.4 132l3.9 0M1425.9 132.2l-3 1.4M1432.7 131.9l3.5 0M1439.2 135.4l1.1 0M1441.5 132.4l2.4 0M1457.2 133.4l1.2 1.2M1460.7 133l1.5 -1.5M1464.1 133.2l3.5 3.5M1470.9 136.6l3.5 -3.5M1475.5 133.9l0.8 0.8M1482.3 135.2l4.4 0.8M1489.1 132.2l2.2 2.2M1495.3 132l-0.1 2.4M1496.8 132.4l0 4.4M1503.4 131.3l0 3.8M1507.8 135.2l1.6 -1.6M1518 131.1l-1.6 2.5M1521.6 135.1l1 0M1524.3 134.9l1.7 0M1574.3 135l-4 1.3M1576.1 133.1l1.9 1.9M1582.7 134.4l1.4 0M1583.8 130.9l3.6 3.6M1590.7 135.2l2.4 -2.4M1598.7 132.7l-0 1.6M1377.9 138.3l0 2.7M1381.5 137.4l0 2.7M1391.9 139.6l3.1 0M1400 137.7l2.7 0M1412.9 136.1l-1.3 5.1M1424.8 136.7l2.5 2.3M1431.5 137.5l0 2.6M1446.4 141l1.8 -1.8M1451.2 138.9l4.9 0M1456.4 137.6l1.8 1.8M1462.9 139.4l1.2 0.8M1471.3 135.5l-4.1 2.8M1471.7 135.2l0 2.4M1475.2 136.8l1.4 1.4M1479.3 137.9l2.6 2.6M1491.6 138l3.2 3.2M1494.3 136.3l1 1M1500.2 140.5l2.9 -2.9M1503.7 139.2l2.3 2.3M1511 138.2l1.2 -1.2M1524.1 138.4l1.9 0M1527 139.7l1.3 1.3M1548.4 139.4l2.6 0M1553.7 138.6l5.2 0M1562.7 139.1l1.1 0M1576.5 139.3l0.8 -0.8M1584.8 136.9l0 4.4M1588.8 138.3l1.3 0M1593 138.1l4.6 0M1380.4 143l2.5 0M1383.9 143.4l0 1.2M1387.7 142.1l1 1M1391.2 142.1l1.4 0.2M1397.6 142.3l2.4 -2.4M1402 140.5l2.3 4.3M1406.7 145.8l2.2 -2.2M1411.9 143.3l2.8 -2.8M1418 141.7l-2.5 4.8M1420.7 140.3l3 2.5M1427 140.3l0 2.7M1429.1 140.2l0 1.6M1433.9 140.1l0 4.3M1438 139.6l2.8 2.8M1444.1 141.7l2.5 2.5M1448.1 140.7l-1.9 3.2M1452.8 144.9l3.5 -3.5M1460.3 141.6l1.6 1.6M1465.8 141.3l0 2.7M1470.1 143.3l0 1.7M1480.6 145l2.1 0M1485.9 140.6l-3.7 1.4M1492 143.7l1.5 0M1498.7 142.1l0 5.3M1501.2 142.7l4.5 0M1508.6 141.7l0 4.4M1511.2 142.6l1.4 1.4M1519.2 142l-1.4 1.9M1522.7 141.3l2.9 2.9M1523.3 143l3.4 0M1529.2 141.4l3 0M1537.4 143.5l1.1 -1.1M1543.1 141.1l2.6 2.6M1555 143l2.1 -2.1M1558.1 144.9l2.5 0M1559.3 144.8l5.1 0M1566.5 143.6l1.9 -1.9M1570.4 143l3.1 3.1M1379.7 149.4l4.2 0M1390.5 145.4l3.4 3.6M1402 147.4l0 3.3M1406.6 146.3l4.5 0M1411.3 145.9l2 0M1416.2 146.5l4.5 0M1422.8 148.2l1.1 -1.1M1423.8 147.5l4.7 0M1431.5 144.2l0 3.7M1434.5 143.7l2 4.1M1444.4 146.6l1.1 -1.1M1451.3 146.3l1.4 0M1463.1 147.5l2.4 -2.4M1464.8 146.5l2.3 0M1471.3 147.1l3.6 0M1482.3 147.3l-2.9 0.1M1483.6 149l1.1 0M1488.8 145.1l3.6 3.6M1492.1 146.1l2.7 0M1501 144l0 5.1M1505.5 146.6l1.1 0M1510.5 145.9l0 1.7M1512.2 148.7l1.5 0M1516.4 147.2l3.6 3.6M1522.9 148.7l0 1.1M1524.9 149.4l1.4 0M1529.3 147.8l1.4 0M1534.2 148.8l0.8 -0.8M1540.7 146.9l0 1.6M1549 145.7l-3.2 4.2M1554.6 147.8l0 1M1379 154l2.6 -2.6M1380.6 152.1l3.6 0M1387.3 154.4l2.8 -2.8M1392 151.7l3.9 0M1397.2 153.1l-1.4 1M1403.3 152.8l2.1 0M1407.7 151.2l-2 0.8M1409.4 152.2l4.1 0M1415.9 151.8l1 0.8M1417.8 153.9l2.3 -2.3M1422.3 150.1l3.1 3.1M1436.7 153.2l1.7 1.7M1442.8 153.3l1 0M1448.7 152.8l1.8 0M1454.2 154l3.1 -3.1M1477.3 152.1l0 1.3M1480.2 153.6l0.9 -0.9M1483.5 148.8l0 5.5M1488.2 151.6l2.2 -2.2M1495.3 151.3l1.9 0M1497.4 148.7l3.7 3.7M1499.8 153.7l4.8 0M1508.3 149.2l0 2.8M1515.7 149.6l1.2 2.3M1520.8 152.8l1.4 1.4M1530 154l2.5 -2.5M1535.2 152.8l3.2 0M1387.1 157.4l4.6 0M1390.3 156.9l3.3 0.9M1398.8 156.8l-3.5 0.2M1400.1 158.6l3.5 -3.5M1411.5 157.5l5.5 0M1422.9 157.5l2.4 2.4M1426.9 158.6l2 0M1434.9 156.4l2.6 -2.6M1437.4 158.1l1 -1M1443.3 154.6l0 5M1446.8 157.9l5.4 0M1468.6 154.9l1.4 0M1479.2 153.9l-3.7 3.6M1479.8 154.9l3.4 0M1483.4 155.9l2.8 1M1489.6 155.7l1 -1M1501.4 160.1l3.8 -3.8M1511.1 153.4l3 3M1516.6 156.3l0 2.3M1520.7 158.6l2.6 0M1527.2 156l1.7 -1.7M1533.9 158.1l3.9 0M1379.4 158.4l0 3.6M1388.5 160.6l2.6 2.6M1395.3 160.4l1.7 0M1399.1 161.6l2.2 -2.2M1403.1 161.2l2.9 -2.9M1409 157.7l-1.8 4.6M1411.8 160.4l3.8 0.1M1415.8 159.8l0 3.3M1421 161.2l2.4 0M1430.2 162.2l-1.5 1.1M1440.9 159.4l2.7 2.7M1447.9 160l3.3 0M1453.8 161.4l1.4 1.4M1457.4 159.7l2.3 0M1462.8 160.1l1.9 1.9M1467 163.2l1.4 0M1471.6 162.9l3.8 -3.8M1476.1 162l3.6 -3.6M1482.6 158.6l0 2M1486.8 162.6l2.1 0M1489.7 159.5l2.2 0M1495.3 162l2.5 -2.5M1498.3 158.9l0 5.3M1504.3 160.4l-0.7 1.4M1508.9 163.1l2.3 0M1511.8 162.3l3.2 0M1516 163.5l3.3 -3.3M1524.6 160.9l-1.4 0.5M1527.2 165l3.8 -3.8M1532.4 162.5l3.8 -3.8M1535.7 162.8l3.3 0M1383.1 164.1l0 3.1M1385.7 164.4l0 1.7M1391.8 165.8l0 4.1M1395.2 165.1l1.2 2.6M1399.6 166l1 0M1401.8 165.4l4.2 0M1410.3 164.3l0 1.1M1417.6 164.8l1 0.5M1426.5 166.9l4.4 0M1431.5 167l4.8 0M1439.2 168l1.7 0M1449.5 165l0 4.4M1452.5 166.2l2.7 0M1458.9 167.2l4.3 0M1465 164.1l-3.8 3.5M1467.2 164.6l0.7 0.7M1475.5 166.2l-0.2 2.9M1479.7 167l1.8 0M1489.7 166.7l3.3 0M1496.5 166.2l3.2 1.9M1500.6 163.7l3.4 3.4M1505 165.2l1.1 -1.1M1511.8 166.3l2.2 0M1516.6 165.1l0 3.9M1521.3 165l3 3M1533.4 168.5l1.8 -1.8M1537 163.3l0.7 2.5M1389.7 168.9l1.2 0M1396.7 167.6l-0.9 2.7M1404.2 167.3l0 5.3M1406.5 170.4l2.1 0M1417.4 168.9l-3 3.9M1424 170.6l0 2.9M1438.2 170l1.8 1.8M1443.8 170.3l1.6 0M1446.6 167.4l3 3M1454.7 171l3.5 0M1463.2 171.4l5.5 0M1475.6 170.6l2.9 0M1479.9 173.2l3.7 -3.7M1483.3 171.9l2.6 -2.6M1490.1 169.6l0 5.5M1498.2 170.3l0 4.1M1500.4 169.4l4.6 0M1504.8 170.5l2.9 0M1511.7 169.9l4.7 2.1M1522.5 168.6l2.6 1.8M1525.6 171.6l5.2 0.8M1527.6 172.1l2.9 0M1376.6 176l1.6 0M1381.8 175.3l2.2 -2.2M1384.3 173.7l2.8 2.8M1394.7 177l1.7 0M1400.2 174.2l-4.4 0.2M1407 173.6l0 3.6M1412.9 174.5l2.7 0M1420.4 174.3l2.5 0M1426.1 172.2l0 2.7M1436.7 172.4l0 5.2M1439.6 172.1l0 4.1M1443.6 175.7l4 1.1M1449.3 174.4l2 0M1457.6 175l3.1 0M1462 175.3l1.6 -1.6M1467.2 175l1.1 1.1M1471 172.6l2.1 2.6M1479.2 175.3l1.1 1.1M1480.7 174.7l2.9 0M1487.5 172.9l0 1.6M1488.1 176.8l4.3 0M1495.4 173.1l0 1M1501.7 176.2l0 2M1508.7 175.2l0.2 1.7M1514.4 172.4l3.1 3.4M1522.5 175.3l-2.9 1.8M1522.5 173.2l1.7 0M1524.5 175l4 0M1535 174.4l-2.7 1.6M1536.4 175l2.9 2.9M1368.1 178.3l0 5M1385 178.8l1.4 1.4M1390.1 179.9l2.8 -2.8M1398.2 181.2l2.8 -2.8M1404.4 178.3l0 4.2M1406.8 179.5l3.1 -3.1M1411.4 180.8l3.6 0M1418.6 178.9l-3.8 3.4M1418.5 181.7l5 0M1426.4 179.4l3.2 -3.2M1433 179.7l1.2 0M1433.7 178.9l3 0M1439.1 178.7l1.2 -1.2M1443 180.1l2.4 0M1448.9 177.9l2 2M1454.8 177.6l-2.8 1.1M1470.6 178.6l0 2.9M1471.3 178.6l3.9 0M1476 179.4l2.3 -2.3M1479.8 180.4l3.5 0M1496.3 179.5l2.4 2.4M1500.2 180.6l4.1 0M1505.9 179.4l0 3.2M1528.2 180.8l4.9 0M1532.6 179.2l0.2 1.4M1537.6 179.6l2 0M1366.9 183.4l2.4 0M1371.5 186.3l4.3 0M1377.2 186.2l1.6 -1.6M1381.2 186.4l0.9 -0.9M1387.5 182.9l0 5.2M1396.1 182l-3.3 3.8M1398.2 183.5l0.9 0.9M1403.6 186.4l5.1 0M1412.2 184.6l1.1 0M1414.4 185.1l3.8 0M1425.5 180.3l0 5M1428.8 184l2.4 0M1433.5 185.3l4.4 0M1438 182.6l1.7 0M1444.9 182.4l0.4 1.3M1446.1 182.9l3.5 0M1452.1 183.9l2.9 2.9M1471.7 182.1l0 1.3M1476.1 184.1l0 4.3M1479.3 185.3l-0.8 1.7M1484.6 185.6l2.2 -2.2M1488.8 184.9l3.7 0M1502.4 182.4l3.1 3.1M1504.5 185.6l3.9 -3.9M1510.5 183.2l3.7 0M1517.2 184.8l0.9 -0.9M1522.9 184l1.1 0M1523.5 184.1l1.8 0M1528.7 187.9l3.6 -3.6M1533.6 183.9l4.9 0M1537.4 184.1l4.4 0M1359 190.2l2.4 -2.4M1363.2 188l2.8 0M1369.1 186.3l0.8 4.6M1372.5 190.8l4.7 0M1376.9 189.8l3.8 -3.8M1382.4 187.7l0 3.1M1385.9 188.2l2.3 2.3M1391 188.7l1.8 0M1401.4 187.1l1.3 0M1406.7 185.7l3.3 3.3M1421.6 186.7l-0.7 3.5M1427.7 186.4l-1.8 2.6M1430.6 186.9l0.7 1.1M1432.5 186.9l3.6 3.6M1440 189.9l5.2 0M1445.1 189.8l2.3 -2.3M1450.5 188.2l4.9 0M1454.3 187.6l3.4 3.4M1466.5 187.1l2.3 0M1474.2 188.6l0 1.3M1478.6 189.9l2.6 0M1483.9 188.7l4.7 0M1488.1 188.8l0 2.2M1494.3 187.4l0 2.1M1498.3 191.4l1.9 -1.9M1503.8 189.5l2.1 -2.1M1509 189.2l1.8 1.8M1511.8 191.7l2 -2M1514.5 187.4l2.4 0M1523.6 189.1l-1.5 0M1526 185.8l2.8 2.8M1530.7 187.2l0 3.7M1535.4 188.7l0 2.9M1539.9 188.2l1.5 0M1354.8 192.3l-0.1 4.7M1362.6 194.5l0.9 1.2M1372.9 193.7l-1.2 1.6M1377.3 194.8l4.3 0M1381.2 195.5l2.1 -2.1M1386.5 191.5l-0.8 1.1M1390.8 190.4l0 3.5M1397.6 195.6l1.5 -1.5M1406.3 193.9l0.9 0.9M1410.5 196.6l2.1 -2.1M1413.6 192.5l0 2.1M1420.2 192.4l2.4 0M1425.9 191.3l0 4.7M1429.3 194.1l2.4 2.4M1435.1 193.1l0 3.4M1434.2 195.3l5.5 0M1446.5 193.7l2.1 -2.1M1453.3 191.1l0 3.3M1454.5 192.2l0 4.7M1460.5 193.8l1.3 1.3M1463.6 192.2l2.4 2.4M1468.5 193.8l3.1 1.3M1474.3 193.4l2.8 0M1488.8 194.4l1.4 -1.4M1496.2 193.7l4.4 0M1509 193.2l1.3 -1.3M1516.2 191.8l0 2.8M1520.4 194.5l2.9 0M1527.5 193.1l2.8 -2.8M1532.5 192.2l1.8 4.6M1539.4 192.8l0 3M1355.1 197.9l2.4 0M1359.1 195.7l1.2 1.2M1364.3 197.9l2.6 0M1365.5 199.6l5.2 0M1373.6 199.5l1.8 0M1376.3 196.6l5.1 1M1386.2 197.7l1 -1M1390 197.7l3.5 3.5M1395.7 196.7l1.4 0M1400.1 196l3.6 3.6M1404.9 199l0.8 -0.8M1410.2 195.6l2 2M1413.7 196.5l0 3.7M1428.9 195.4l0.3 5.2M1435.9 197.4l3.2 3.2M1439.9 196.3l3.5 0M1449.2 201.6l3.1 -3.1M1469 197.8l1.5 1.5M1474.1 195l0 3.9M1477.4 198.2l1 0.2M1487 194.7l0 4.8M1495.7 199.1l-5.2 1.5M1497.7 199.9l2.2 0M1502.7 200.8l1.8 -1.8M1507.3 199.3l3.5 -3.5M1514.7 195.5l3.8 3.8M1530.6 198.9l1.5 0M1535.5 198.3l0 3.4M1540.9 197.9l3.4 0M1346.8 200.3l3.2 3.2M1352.6 203.1l3.3 3.3M1358.2 202.8l1.6 0M1360.7 200.9l2.1 0M1368.1 199.9l0 4.1M1371.2 200.5l0 5.1M1378.6 201.6l-3.7 3.6M1377.4 202.4l5.4 0M1385.8 199.2l0 3.8M1388.7 202.4l2 -2M1395.5 201.9l0.9 -0.9M1399 202.8l2.6 2.6M1402.4 203.9l3.8 0M1409.7 203.2l-0.7 2.5M1415.9 204.3l3.5 0M1422 201l1.1 1.1M1431.3 203l-4.4 0.1M1432.5 202l2 -2M1436.2 204.5l2.5 -2.5M1439.7 204.5l2.8 -2.8M1446.4 201.3l1.9 2.2M1448 201.8l1.9 0M1455.3 201.9l3.5 3.5M1458.9 201l1.1 0M1463.6 205.9l2.8 -2.8M1466.2 202l2.6 0M1470.8 200.4l3.4 3.5M1474.4 203.3l5.3 0M1480.7 200.9l3.8 3.8M1489.1 203.9l1.1 1.1M1490.4 204.2l2 0M1496.3 202.7l3.3 -3.3M1500.3 205l2.3 -2.3M1505.5 203.6l0 2.1M1514.7 203.9l4.6 0M1517.4 202.7l2.8 0M1525 202l0 2M1524.9 202.5l4.7 0M1538 203.2l-3.2 2.7M1543 204.4l2.7 0M1345.5 208.4l1.6 0M1352.4 206.2l3.9 0M1361.3 208.6l4.4 0M1367.3 208.2l1.4 1.4M1372.9 205.9l1.5 1.5M1377.1 206.3l0 3.1M1381.5 204.7l0.3 3.3M1388.6 203.8l0 4M1389.8 207l5.2 0M1394.3 207l1.9 1.9M1400 206.7l1.3 2.8M1404.7 206.2l1.6 1.6M1407.2 206.4l2.2 2.2M1421.4 206.8l4.6 0M1427.8 206.5l3.4 0M1433.2 205.3l0 2.5M1439.6 207l4.9 0M1451 205.1l2.4 2.4M1456.7 204.4l0 4.9M1473.1 207.7l-3.7 2.2M1469.7 208l4.8 0M1479.9 207.2l2.8 2.8M1488.3 208.7l3.2 -3.2M1492.6 204.7l0 1.6M1496.3 205.8l0 4M1497.1 205.7l5.4 0M1505.6 208.1l1.4 0M1509.2 208.6l1.7 -1.7M1523.2 206.4l2 0M1526.9 206.8l1.8 1.8M1536.7 206.3l0 4.2M1540.7 209.3l1.4 0M1342.9 211.1l3.1 3.1M1346.7 210.6l0 4.6M1365.8 211l2.9 0M1372 211.1l0 2.7M1378.3 211l1.5 0M1381.5 215.4l3.9 -3.9M1396.7 215.4l2.9 -2.9M1404.3 210l2.4 2.4M1408.7 210.5l2.5 0M1412.4 212.3l0.8 1.9M1419.8 211.6l4.6 0M1425.8 212.7l5.5 0M1431.3 211l0.9 0.9M1436.8 212.3l1.2 -1.2M1439.7 211.2l1.4 0M1443.6 212.7l3 1.3M1448 212.6l0 2.3M1452 212.8l1.5 1.5M1455.1 210.4l4.2 0M1462 210l0.2 3.9M1469.4 208.6l0 3.5M1471 213.1l4.3 0M1477.4 211.7l2.3 -2.3M1482.9 210.5l3.2 3.2M1490.9 210.5l4.2 0M1499.5 211.7l-4.3 1.6M1498.3 213.2l0.8 0.8M1505.8 210.9l1.9 0M1507.4 212.1l1.8 1.8M1513.4 212.7l2 -2M1518.2 208.7l0 2.9M1527.1 214l3.5 -3.5M1530.5 212.9l4.8 0M1535.4 211.6l1.7 0M1539.1 210.8l4.2 2.7M1339.4 216.9l2.8 0.6M1347 214.5l0 4.6M1352.1 219l3.6 -3.6M1356.5 215.3l2.4 0M1361.3 215.5l0 2.4M1385.2 216.8l0.8 0.8M1388.1 214.4l0.9 0.9M1394.8 215.2l3.2 3.2M1398.3 217.8l0 1.1M1400.1 217.7l4.2 0M1408.8 216.9l2.1 0M1412.8 212.6l0 4M1415.3 217.8l2.8 -2.8M1419.6 214.8l4.1 0M1430.7 217l3.7 0M1434.4 215.2l3.3 3.3M1441.4 217l4.7 0M1449.9 216l0.6 1.2M1451.8 217.2l0.9 1.7M1454.6 214.8l5.1 0M1460.7 214.6l1.7 1.7M1466.1 217.2l3.5 0M1472.7 215.9l0 4.5M1479.2 213.9l0 3.8M1483.8 215.1l4.1 0M1489.6 215.8l2 0M1495.6 216.3l3.2 0M1499.5 217.5l0.9 0.9M1505.7 214.6l1.8 1.5M1514.8 214.8l0 4.5M1517.9 217.1l2.2 0M1519.3 218l5.2 0M1526.4 215.6l1.1 0M1533.8 214.1l0 2.1M1537.3 216.2l1.5 -1.5M1339.5 220.8l2.6 0M1352.4 220.9l1.6 0M1353.4 218.4l3.7 3.7M1361.7 218l0.9 5M1370 218.1l0 2.3M1373.2 223.2l2.5 -2.5M1382.1 220l0 5M1389.9 219.8l3 0M1404.4 222.8l-4 0.6M1411.6 219.8l0 5.2M1413 223.2l4.1 0M1424.4 221.7l2.1 0M1429.2 220.2l2.6 0M1433.7 219.5l0 3.2M1439.3 220.4l2.6 2.6M1442.9 219.7l1.8 1.8M1446.7 219.5l-0.1 4.4M1453.6 220.9l0 1.2M1456.4 220.7l3.7 0M1460 220.1l2 0M1467.4 219.4l1.6 1.6M1473.9 220.3l5.2 0M1484 222l0 2.1M1491.8 219.9l4.3 0M1500.1 218.7l-2.2 2.5M1508.1 219.8l2.3 2.3M1511.7 220.6l2.8 2.9M1517.4 221.6l0 1.9M1520.2 222.1l1.5 -1.5M1526.6 220.1l2.9 0M1529.1 219.6l2 2M1533.4 223l4.9 0M1541.4 219.8l1.1 0M1335.9 225.8l0 2.1M1338.9 226.5l0 2.3M1349.9 223.8l5.2 0M1359.2 227.4l2.5 0M1369 227.5l1.8 0M1372 229.5l3.9 -3.9M1385.5 224.1l4.2 0M1391.1 222.7l0 4.8M1391.6 225.2l4.1 0M1407.8 227.5l1.8 0.6M1412.9 228.9l3.4 -3.4M1416.9 223.9l1.9 0M1427.7 225.1l0 1.9M1430.8 228.8l3.2 -3.2M1434.4 223.2l2.2 2.2M1438.7 225.4l3.3 3.3M1444 223.7l2.5 3.2M1449.2 226.9l2.9 -2.9M1453.5 224.5l2.9 0M1459.7 227.4l3.7 0M1466.5 224.3l-0.4 3M1467.3 223.8l0 1.2M1476.4 224.3l1.1 0M1486.8 225.6l3.1 3.1M1492.2 225.5l0 4M1498.6 225.3l2.1 2.1M1504.5 225.9l0 3.2M1507.7 228.6l2.9 -2.9M1513.4 224.9l3.8 3.8M1522.5 224.3l3.6 3.6M1526 227.4l4.5 0M1538.7 224.3l3 3M1337.5 226.8l3.5 3.5M1347 230.8l3.2 -3.2M1349.4 233.1l3.5 -3.5M1353.1 232.2l2 0M1363.4 230.3l1.1 0M1365.7 231.9l5.2 0M1374.4 229l0 1.5M1388.2 231.3l1.4 1.4M1390.6 231.3l3.4 0M1400.3 229.5l0 3.1M1403.9 231.2l3.7 0M1408.5 231.2l2.7 -2.7M1421 227.9l0 3M1424.4 227.7l-1.5 3.1M1428.5 230.8l5.5 0M1438.6 231l0 2.5M1443.8 230.9l3.4 0M1444.3 229.5l4.7 0M1454.7 230.1l1.5 -1.5M1461.9 229.3l2.9 2.9M1470.7 230.4l2.9 0M1477.6 228.2l0 2.4M1477.4 230.9l2 0M1489.2 231.1l-1.1 0.1M1490.5 228.4l3.2 3.2M1496.8 230.5l2.4 2.4M1506.8 230.4l3.3 3.8M1510.6 231l4.2 0M1514.1 230.5l4.1 0M1523.9 233.8l3.9 -3.9M1535.6 231.9l3.6 -3.6M1340.4 232.7l1.6 1.6M1346.4 235.5l2 -2M1351.9 233.5l-0.8 1.8M1359.3 231.5l0 3.2M1360.3 235.8l4.4 0M1365.7 233.2l2.4 2.4M1369.5 234.5l3 0M1372.6 236.1l5 0M1377.9 234.9l3.1 3.1M1384.5 236.1l2.1 0M1393.4 232.2l-2.5 2.6M1394.3 233.4l0 1.2M1399.5 235.9l2.5 0M1403.5 234.9l2.4 0M1407 231.9l0 3.5M1414.8 235.3l1 1M1418.1 233.5l2.5 1.6M1422.1 235.8l1.7 -1.7M1428.7 235.9l2.7 -2.7M1436.3 233.8l1.1 0M1441.1 233.8l2.1 0M1444.8 233.9l2.8 4.6M1450.5 235.5l5.1 0M1460.9 234.2l0 3.4M1467.5 234.8l0 2.9M1470.7 237.9l3.6 -3.6M1478.8 232l0 4.5M1480.8 237.6l2.4 -2.4M1490.2 238.5l3.1 -3.1M1492.4 236l5 0M1502.6 232.9l0 1.7M1510.3 232.9l2.3 2.3M1516.4 234.3l-5.3 0.9M1517.4 235.3l0.9 0.9M1524.2 232.6l0 5.4M1526 233.4l4.8 2.3M1533.5 236l0 1.1M1331.6 241l0 1.2M1335.7 239.3l2.5 2.5M1343.2 241.1l1.5 0M1345.4 240.2l0 2M1350.6 240.7l3.2 0M1352.9 242.2l3.1 -3.1M1359 240.5l1.2 -1.2M1372.7 241.4l2 0.1M1378.6 238l0 1.7M1384.2 238.8l5.5 0M1390.7 237.7l0 3.2M1398 239.6l5.2 0M1405.2 236.3l-0.9 5.4M1410 238l3.8 3.8M1412.7 238.4l5.1 0M1419.8 238.7l1.5 -1.5M1423.8 240.4l3.5 -3.5M1428 236.5l2.6 2.6M1434.4 239l0 2.9M1438.2 241l2.7 -2.7M1443.5 238.1l2.6 2.6M1448.8 237l-4.1 2.2M1453.6 238.5l0 2.9M1455 237.7l4.6 0M1461.6 237.9l2.1 0M1465.1 241.1l3 -3M1468 242.2l1.7 -1.7M1474.1 238.3l1 -1M1479.9 237.5l0 1.7M1483 242.1l1.3 -1.3M1494.1 239.6l-4.4 0.2M1494.9 237.7l4 0.3M1499.7 239.6l2.4 0M1504.2 240.9l4.2 0M1509.8 240.1l1.2 1.2M1516.4 239.4l-3.2 2.6M1525.2 239.5l-2 0.5M1529 238.9l2.2 2.2M1532.8 238.2l1.8 0M1327.3 245.9l5.4 0M1333.4 243.5l3.9 0M1337.7 245.5l2.9 0M1345.2 242l-1.1 2.9M1348.3 243l1.8 1.8M1351.2 243.9l3.1 0M1361.3 243.2l0 3.4M1369 242l2.3 2.3M1373.7 246.1l4.8 0M1379.1 243.9l4 0M1387.2 243.9l5.4 0M1398.1 243.4l0.1 3.1M1402.7 241l0 4.8M1406.3 245.3l1.8 -1.8M1422 243.3l3.8 0M1428 243.2l3.1 0M1437.6 242.6l0 4.8M1437.3 244.5l3.8 -3.8M1443.2 242.9l1.5 0M1448.7 242.3l1.5 0M1453.2 245.6l2.4 0M1455.3 243.9l3.6 3.6M1468.5 243.1l0.9 0.8M1482 245.5l2.2 0M1485.7 246l-1.1 0.1M1494.5 244.1l3.9 0M1498.2 242.4l1.6 1.6M1503.3 246l2.4 -2.4M1506.5 247.2l3.7 -3.7M1511.9 240.9l2.8 2.8M1516.9 244.8l3.4 0M1524.3 243.6l1.1 0.9M1529.3 242.5l-2.5 2.5M1325.7 245.2l-1 3.3M1331.1 250.6l2.3 0M1336.5 249.4l2.5 2.5M1347.5 247.7l0.9 -0.9M1349.8 249.8l2.4 0M1355.2 248.8l2.8 0M1358.9 248.5l3 -3M1365 247.5l1.1 0M1368.1 248.9l3.7 0M1376.5 249.2l0 2.8M1377.6 251.3l3.2 -3.2M1384.8 249.2l3.2 0M1389.8 246.1l0 4.7M1393.4 248.4l0.9 0.9M1396.8 247.3l0 2.6M1402 248.4l1.8 0M1411.7 246.8l0.7 0.7M1416.6 247l2.6 2.6M1420.4 246.8l0 2.5M1424.3 249.3l0 2M1430 250.1l2.7 0M1436 250.1l1.5 -1.5M1439.4 248.3l3.4 0M1442.7 250.5l4.6 0M1447.3 249.9l1.5 -1.5M1453.7 248l3.1 0M1456.6 248l3.7 0M1460.8 245l0 5.1M1473.7 248.7l-1.6 3.7M1476.3 249.7l3.6 -3.6M1482.1 248.5l0.7 2.9M1491.3 250.1l1.6 -1.6M1504.4 247.7l0 5.5M1510.2 246l0 1.9M1513.1 250.6l4.3 0M1520.7 248.7l2.4 0M1525.4 248.5l5 0M1531.2 248.7l3.5 3.5M1595.2 247.4l4.1 0M1324.7 250.9l0 1.1M1327.2 252.8l0 2.4M1333.4 252.7l0 2.4M1341.1 251l1.1 1.1M1344.9 251.6l4 0M1354 250.4l-3.9 2.4M1352.1 254.2l4.6 0M1359.7 250.9l3.5 3.5M1363.7 253.9l3.7 0M1373.6 251.9l2.4 2.4M1384.4 252.3l0 5.2M1384.8 251.5l3.7 1.1M1389.5 255.2l4.2 0M1399 251.6l0 2.1M1409.8 252.8l3.3 3.3M1412.4 254.1l5.4 0M1417 255.2l3.6 -3.6M1426.3 253.9l4.5 0M1440.6 256.2l2.6 -2.6M1447 252.7l2.7 0M1448.3 254.9l4.7 0M1455 252.9l3.4 0M1459.7 253.2l2 0.8M1464.9 250.7l1.9 1.9M1473.8 252.3l1.5 -1.5M1480.9 256l3.5 -3.5M1487.2 252.3l2 2M1494.1 250.8l0 2.9M1496.7 253.8l2 2M1499.9 254.2l5.2 0M1505.9 254.6l3.1 0M1518 251.1l0 5.4M1520 252.7l2.4 -2.4M1523.5 255.1l4.2 0M1526.6 252.3l4.1 0M1575 251.9l5.3 0M1577.9 253.5l5 0M1585 254.9l2.5 0M1587.1 255l3.5 -3.5M1592.4 250.9l2 2M1326 258.5l0.2 1.4M1328.9 254.6l0.8 4.6M1340.1 258.1l3.4 -3.4M1344.1 256.4l0 2.8M1348.2 257.3l2.5 2.5M1353.5 257.9l3.7 0M1359.5 255.2l-0.6 2.5M1359.5 259.8l4.8 0M1366.7 257.5l3.4 3.4M1382.4 256.9l1.5 1.5M1393.9 257.1l2.1 -2.1M1397.1 257.3l5.3 0.4M1400.4 256l4.9 0M1408.4 258.7l2.2 2.2M1414.2 258.5l1.4 -1.4M1416.4 257.6l2.6 0M1423.9 256.2l1.6 4.4M1431.5 258.6l2.8 2.8M1437.6 254.8l0 2.8M1439.6 258.2l0 3.1M1460.6 256.4l2.5 3.2M1470.6 255.3l0 2.4M1474.3 257.4l2.5 -2.5M1484.4 255.5l0 2.7M1487.5 255.4l1.6 2.7M1497.4 258.8l3.9 -3.9M1505.3 258.5l2 0M1510.8 256l0 3.4M1511.7 259.9l3.3 0M1518.5 255.8l0 3.1M1523 259.1l2.3 0M1563.7 256.9l2.7 0M1567.4 254.9l2.3 2.3M1575.2 256.5l-3.8 0.2M1578.9 258.5l1.2 1.2M1589 257.5l3.4 0M1322.1 262.3l3.7 1.7M1326.5 259.6l3.5 3.5M1330.9 262.1l3.8 0M1337.6 263.7l1.5 -1.5M1341.6 260.8l0 1.2M1348.8 261.4l2 0M1358.3 264.1l1.3 0M1365.3 261.6l2 2M1368.7 263.6l1.3 1.3M1377.5 260.7l0.9 0.9M1382.3 259.1l0 5.2M1390.4 263.8l-3.4 1.5M1394.7 260.9l-3.8 0.4M1398.3 262.5l1.3 0M1403 261.5l1.6 1.4M1406.9 261.1l3.3 3.3M1409.4 262.5l0 2.7M1414.1 261.9l2.2 0M1418.6 261.5l4.5 0M1421.5 263.7l3.5 0M1428.6 263.1l3.7 0M1435.6 259.7l0 4.8M1442.3 261.2l1 1M1448.2 259.4l0.4 4.6M1454.3 262.2l0 4.3M1463.6 259.3l0 3M1463.2 261l4.6 0M1470.3 262.9l1.1 -1.1M1475.4 259.9l1 2.6M1484.2 260.6l1.7 0M1489.9 259.4l0.7 3.9M1495.1 262.3l3.5 0M1502.5 262.3l3.2 3.2M1506.7 262.5l1.7 0M1517.5 259.3l0 4.6M1520.3 260.7l4.5 0M1528.8 263.7l4.1 0M1546.4 262.6l4.2 0M1553.3 264.2l3.5 0M1558.4 260l0 3.4M1562.1 265.2l1.3 -1.3M1566.1 262.6l3.5 2.6M1571 260.9l2.7 2.7M1574.8 259.9l0.8 3.3M1586.7 262.9l0 3.4M1591.2 261.4l2.2 0M1594.1 262l1.3 3.3M1597.1 262l4.9 0M1322.5 267l5.1 0M1331.1 266.1l0 3.1M1330.8 267l3.9 0M1343.6 266.1l-1.6 3.5M1344.7 268.1l5.2 0M1355.5 264l0 5.5M1359.4 269.1l3.6 0M1372.7 266.9l1.7 1.7M1382 266.1l-2.9 2M1383.2 268.2l2.5 0M1392.2 267.6l3.9 0M1400.8 269l5.5 0M1408 266.1l1.3 0M1417.1 265.4l1.7 0M1421.3 267.1l2.6 2.6M1425 269.5l2.8 -2.8M1436.2 265.6l0 4.1M1440.7 268.2l1.4 0M1442.3 266.8l1.3 0M1449.7 264.6l0 1.2M1453.8 264.9l0 1.4M1467.4 268.2l0 1.4M1469.6 268.7l2.7 0M1475 268.1l1.7 0M1480.4 268.3l2.1 -2.1M1490.6 268.3l2.3 -2.3M1497.9 266.1l3.1 0M1504.4 266.7l0 3.8M1507 266.9l5.1 0M1519.6 265l3.6 3.6M1528.2 263.8l0 3.7M1531.3 268.6l1.7 -1.7M1535 266.5l0 2.1M1542.3 266.6l0 2.5M1548.3 267.3l-2.9 0.9M1546.5 266.7l4.3 0M1557.6 266l1.8 0M1571.9 269l1.7 -1.7M1319.1 272.2l1.9 0M1321.9 269.2l4 3.3M1328 268.8l0 3.3M1334.5 269.7l-1.6 2.2M1336.2 271.1l2.1 -2.1M1342.6 268.5l0 5.3M1345.7 273.5l3.8 0M1348.2 272.1l2.4 -2.4M1357.1 271.1l1.5 1.5M1358.1 273.6l0.9 -0.9M1361.6 272.4l4.3 0M1369.1 270.4l1.8 1.8M1381.4 275l3.4 -3.4M1387.4 271.5l4.8 0M1395 271.1l5 0M1399.5 271.1l0.9 0.8M1403.7 274.3l2.7 -2.7M1411.9 269.9l-3.6 4.2M1413.8 272.4l2.5 0M1421.6 274.2l1.3 -1.3M1424.2 270.9l1.2 0M1431.9 273.5l-1.6 0.5M1432.2 273.4l3.9 0M1438.5 269.3l2 4.1M1442.9 272.2l1.5 -1.5M1448.6 269.9l2.3 2.3M1450.8 273l2 -2M1458.7 268.9l3.3 3.3M1465.5 270.5l1.5 1.7M1471.2 270.7l0.4 2.3M1473.3 269.9l3 0M1480.2 272.8l2.4 -2.4M1481.3 271.6l4 0M1493.6 269.6l3.3 3.3M1497.5 268l3.7 3.7M1501.5 270.8l2.2 0M1508.3 271.4l2.1 2.1M1514.3 272.7l2 0M1522.5 270.2l0 4.3M1525.2 270.6l5.3 0M1530.4 272.9l3.3 0M1535.1 270.6l0 5.3M1540.3 273.2l2.5 0M1543.5 272.6l4.3 0M1553.6 274.6l3.7 -3.7M1557.9 273.3l4.1 0M1561.2 272.8l0.9 -0.9M1332.5 276.6l3 -3M1339.6 275.4l4.2 0M1409.3 275.6l2 -2M1419.4 274.8l1.5 0M1425.1 274.3l-0.1 1.7M1501.7 274.6l-1.3 1.1M1537 275.5l3.1 0M1561.4 274.7l1 0.4M1344.4 82.3l2.8 0M1346.9 85.3l3.5 -3.5M1351.2 88.5l3.6 -3.6M1349.8 90.7l0 1.1M1351.6 89.9l1.3 1.3M1353.5 94.2l-0.3 3.4M1358.4 92.7l0 2.9M1349.1 102.1l3.3 -3.3M1354.3 99.5l4.6 0M1357.3 97.3l3.4 3.4M1362.9 98.7l3.7 0M1355.7 103.6l1.9 -1.9M1368 101.4l0 4.5M1359.8 108.3l2.6 2.6M1366 109.2l-2.4 0M1370.7 109l2.6 -2.6M1359.5 114.6l2.9 0M1368.6 114.4l2.5 -2.5M1373.6 113.3l1.4 -1.4M1365 118.8l1.6 0M1370.4 118.8l1.1 1.1M1375.9 114.6l0 4.1M1366 123.8l5.2 0M1327.2 49.1l5.3 0M1334.7 45.8l1.1 1.6M1326.9 51.5l0.7 0.7M1331 51l2.4 0M1333.4 52.8l2.8 -2.8M1333 147.2l1.6 4.1M1336 147.5l0 2.4M1337.8 145.8l3.7 3.7M1336 151.1l0.8 0.8M1339.2 150.6l1 1M1342.5 148.8l0.8 3.8M1350.4 148l0 4.4M1356.3 154.1l1.4 -1.4M1338.9 155.2l4.7 0M1346.8 154.1l2.3 2.3M1348.6 156.7l3 0M1355.6 156.3l2.1 -2.1M1360 154.2l0.6 1.6M1349.5 159.7l-3.5 0.6M1355.5 159.2l-3.1 2.9M1356.6 164.7l2.9 -2.9M1360.4 160.9l2 2M1365.3 160.6l1.7 0.5M1365.4 163.7l0 3.8M1366.1 165.6l1.9 -1.9M1317.6 166.1l0 1.5M1310.5 171.7l1.1 -1.1M1317.8 168.9l-1.9 4.5M1315 177.8l3.5 0M1321 177.5l0 1.8M1320.1 183l0.9 0.9M1328 183.4l1.1 -1.1M1332.3 179.4l1.4 1.4M1324.5 182.1l3.9 3.9M1283.9 188.7l3.8 3.8M1290.8 187.1l1.3 1.3M1283 192.3l1.7 1.7M1288.9 195.4l3.2 -3.2M1293.7 193.9l2 -2M1302.2 192l0 1M1303.9 194.7l2.2 2M1308.9 195l2.8 0M1278.4 195.5l3.8 3.8M1284 202l3.2 -3.2M1288.1 198.1l4 0.3M1294.7 196.1l0 1.7M1299.1 196.4l1.9 1.9M1306.8 198.6l2.3 0M1315.5 198.7l4.7 0M1323 198l0 4.5M1291 201.9l1.2 -1.2M1293.4 202.5l1.8 0M1296 201.5l4.5 0M1307 201.3l2.9 2.9M1313 203.1l1.6 0.1M1280.7 207.7l1.8 1.8M1284.9 210.2l1.1 -1.1M1289.2 208.4l4.1 0M1293.7 206.2l0 2.4M1296.8 208.2l1.9 1.9M1304.9 206.4l0 3.5M1310.1 205l-2 1.5M1290.4 214l5 0M1294.9 212.3l1.7 0M1299.8 213.7l1.1 1.1M1308.3 209.2l0 3.7M1311.5 211.5l0 3.6M1315.5 210.4l2.3 2.3M1573.3 112.1l2.4 2.4M1577.6 113.7l1.4 0M1571.8 117.3l0 2.7M1577.9 116.6l1.7 -1.7M1577.2 120.2l2.4 0M1574.6 124.9l1.9 1.9M1582.9 126.2l1.6 1.6M1586.5 128.8l1.8 -1.8M1561.4 130.3l0.7 3.1M1566.9 129.6l1.4 0M1569.3 133.2l3.2 -3.2M1573.4 131.9l2.4 0.3M1581.1 133.3l0.8 -0.8M1585.9 130.9l0 3.2M1594.5 133.7l1.7 -1.7M1551.2 136.4l0 1.4M1558.6 131.9l-3 4.5M1559.5 134.2l0.8 -0.8M1579 132.7l2.2 2.2M1581 135.8l3.9 0M1588 136.2l0 2M1591 134.1l4.6 0M1539.4 140.8l1.7 -1.7M1542 141.3l2 0M1546.8 138.5l0 3.3M1552.5 139.2l2.2 2.2M1556.6 140.6l0 3.2M1561.1 137.9l3.2 3.4M1571.7 137.8l0 2.9M1574.9 140.1l1.1 1.1M1576.9 138.5l3.3 3.3M1586.9 135.9l0 5M1589.5 140l1.4 1.4M1604 137.4l0 5.2M1543.6 143.2l2.2 2.2M1551.8 141.6l2.6 2.6M1566.2 143.8l3.5 0M1569.8 143.2l3.5 0M1573.3 144.9l2.9 -2.9M1582 141.3l2.3 3.9M1598.1 142.4l0.8 0.8M1599.2 145l4.8 0M1608.4 144.1l2.3 1.8M1549.2 147.9l3.5 0M1551.1 147.8l4.9 0M1608.8 150.5l0.9 0.9M1613 146.5l0 2.7M1617.8 146.7l0 3.6M1622.5 155.1l2.8 0M1633.3 230.6l1.7 1.4M1639.9 229.3l-2.3 2.6M1640.6 231.5l1 1M1646 229.4l0 1.7M1652.4 228.4l0 2.2M1653.5 230l2.7 0M1659.5 229.6l0 3.3M1669.3 232.7l2 0M1616.3 236.5l1.7 0M1623.6 235.7l0 2.3M1628 235.5l1.6 0M1632.2 233.7l3.2 3.2M1654.9 235.1l1.8 0M1660.6 235.1l1.2 0M1666.1 233l1.2 1.2M1669.5 235.6l3.6 -3.6M1675.3 237.2l4.2 0.3M1681.8 238.5l2.6 -2.6M1593.8 242.5l1.1 -1.1M1599 240l-1.3 2.4M1604.5 236.5l0 4.8M1612.3 238.5l3.9 0M1617.7 239.6l2.6 -2.6M1619.9 241.8l4.1 0M1624.8 241.2l3.9 0M1672.2 237.8l0 4M1675.5 241.2l0.7 0.7M1685 238.5l4.7 0M1588.2 246.5l1.7 -1.7M1595.3 242.7l0 1.1M1597.8 245.4l1.5 1.5M1600 243.6l4.8 0M1606.5 242.7l0 5M1616 242l0 4.2M1688.8 243.3l0 4.6M1570.9 248.7l0 4.2M1585.5 248.8l2.1 0M1588.2 248.3l3.7 0M1592.6 251.1l1.9 -1.9M1594.4 249l4.9 0M1554.2 256.9l2.8 -2.8M1559.7 252.4l4.2 0M1563.2 252.4l2 3.3M1567.6 252.1l4.2 0M1572 253.6l1.8 0M1582.8 254l3.3 -3.3M1586.6 252.3l1.2 1.2M1549.6 259.3l2.2 0M1556 257.6l0 2.5M1562.2 258.7l-0 2.5M1562 259.3l3.3 0M1571.4 255.4l0 3M1529 263.8l3 0M1540.4 263l2.5 2.5M1541.9 263.6l5.5 0M1549.8 262.8l0 4.1M1550.4 262.9l4.1 0M1559.2 260.6l0 2.4M1531.7 266.2l1.2 0M1540.6 267.4l3.1 0M1545.3 267l0 1.5M1724.2 266l0.7 -0.7M1729.8 266.7l1 1M1733 267.4l1.4 0M1741.3 265l1.3 1.3M1747.7 264.5l2.1 1M1751.4 267.9l1.3 -1.3M1755.8 265.9l2.2 0M1719 269.8l2.2 0M1744.1 270.3l1.3 0M1753.3 272.2l1.4 0M1754.8 271.1l3.5 -3.5M1763.3 271.3l1.7 0M1767.1 272l-1.2 0.6M1771.3 269.9l1.2 1.2M1784 270.1l0 4.8M1719.1 275.2l1.9 -1.9M1732.5 272.7l0 5.4M1739.1 275.4l-3.6 0.4M1741.4 273l0 1.6M1749 272.1l0 3.6M1757.4 273.3l2 0M1772.7 275.7l3.6 -3.6M1780.8 273.4l0.8 0.8M1866.7 106l3 -3M1872.4 103.9l3 3M1870 108l1.7 1.7M1880.2 111.3l0 5.4M1870.2 117.8l4.7 0M1879.1 119.5l1.2 1.1M1579.3 133.5l4.2 0M1581.1 135.3l-0.6 3.9M1584.6 138.9l3.6 -3.6M1587.7 137l2.7 0M1596.5 137.6l1.1 1.1M1584.3 138.2l0 2.8M1588.7 138.3l-3.5 1.6M1592 141.1l1.5 0.5M1596.3 141.6l0 1.8M1598.4 140.1l2.1 3.3M1603.9 142.4l4.9 0M1596.5 142.5l-4.1 2.3M1605 141.6l0.1 5.2M1610.5 144.6l2.8 0M1617.5 145.5l-1.3 2.4M1608.3 147.5l2.4 3.7M1612.4 150.2l0.8 0.8M1618.8 149.5l0 4.8M1622.1 151.7l2.8 -2.8M1624.5 160l1.2 -1.2M1622.6 162.7l1.4 -1.4M1627.6 165.6l2.9 2.9M1634.5 164.5l0 3.9M1637.1 167.2l0 3.8M1644 169.3l-4.6 0.7M1638.5 172.5l1.3 1.3M1638.4 173.3l2.9 -2.9M1649.7 170.8l0.8 0.8M1660.3 174.5l1.1 -1.1M1662.7 175.9l2.9 2.9M1606.9 135.3l1.3 -1.3M1600.1 141.9l4.1 0M1604 140.2l3.5 3.5M1612.1 140.1l1.4 0M1600.5 144.6l0 3.8M1602.7 143.8l5.3 0M1606.8 144.1l1.2 -1.2M1618.1 145.3l1.7 1.7M1610 148.5l0 4.2M1601.1 156.3l1.9 -1.9M1607.4 154.6l3.6 0M1609.1 151.5l3.6 2.4M1623.1 210.2l2.3 -2.3M1628.1 208.1l1 0M1615.7 215.8l3.5 0M1617.7 215.4l3.2 -3.2M1629.1 212.1l1.6 5M1620.7 217.6l3.6 0M1623.4 216.8l5.4 0M1617.4 223.3l2.2 -2.2M1626.4 223.8l1.1 1.1M1628.3 222.8l2.3 0M1615.9 225.3l3.8 3.8M1619.7 227.4l3.6 0M1625.4 225.9l5.2 0M1623.4 237.2l2.5 0M1627.9 236.7l3 -3M1617.2 242.2l1.1 -1.1M1619.9 242.1l1.8 0M1628.5 240.8l3.4 0M1616.5 246.4l2.1 0M1281.7 278.4l0 3.1M1283.9 276.8l0.6 2.9M1289.4 280.3l5 0M1292.3 278.5l2.4 -2.4M1295.5 281.3l3.7 -3.7M1304.3 281.7l2.8 -2.8M1307.6 276.3l-2.1 4M1313.7 280.2l2 0.1M1318.1 280.3l4.8 0M1327.3 278.4l3 3M1335.1 277.3l1.2 0M1339.9 275.7l2.5 2.5M1347.9 279.4l3.5 0M1353.4 276.8l1.7 0M1363.7 280l3.1 -3.1M1367.1 277.5l3 0M1284.7 279.2l0 4.7M1294.9 281.7l0.7 -0.7M1297.2 282.3l0.1 1.7M1304 279l0 5.3M1305.4 282.2l4.2 0M1317 282.8l0 3M1326.8 284.3l4.6 0M1336.9 282.4l0 4.5M1337.8 282.6l2.4 2.4M1346.4 281.9l4.7 0M1351.1 283.3l3.7 0M1358.5 279.9l0 3.1M1283.4 288.1l2.6 2.6M1287.3 286.8l2.4 0M1298.7 286.6l0 2.9M1304 290.6l1.8 -1.8M1313.7 288.2l-3.3 0.1M1321.8 284.5l3.1 3.1M1336.5 288.7l-3 1.3M1339.6 289.3l2.7 -2.7M1341.9 287.8l3.1 -3.1M1347.9 285.9l-1.1 2.4M1353.2 284.3l3 3M1358.8 289.7l1.8 0M1363.7 285.7l0 4.1M1292 292.3l1.1 -1.1M1293.1 292.2l3.3 -3.3M1301.3 293.4l2.3 -2.3M1307.2 288.8l0 3.7M1311.9 289.7l3.2 3.2M1317.7 292.8l1.1 2.4M1322 294l1.1 0M1327.6 290l0 1.6M1330 294.2l4.4 0M1334.4 293.6l3.9 -3.9M1342.7 293.3l-1.7 0.3M1347.5 291.2l1 -1M1349.9 291l4.6 0M1355.1 291.9l2.4 0M1360.1 290.3l0 4.6M1365.7 290.1l1.3 1.3M1368.3 291.9l0.2 1M1288.4 297.8l2.6 2M1295 295.6l-2 0.4M1306.8 299.3l3.8 -3.8M1311.9 293.6l3.2 3.2M1313.2 295.3l3.1 3.1M1320.8 300l2 -2M1323.9 298.4l3.1 -3.1M1330.6 294.5l3.2 3.2M1335 295.2l3.4 3.4M1343.3 297.7l4 0M1353.8 295.9l1 0M1360.3 296.5l1 0M1365.4 295.8l3.4 3.4M1282.2 298.9l0 2.2M1287.5 300.8l-2.7 0.4M1288.7 302.7l2.1 -2.1M1295.2 302.1l0.8 1.1M1302.3 301l4.1 0M1309.6 300.4l-2.2 2.5M1310.7 299l1.8 1.8M1320.7 303.4l2.8 0M1325.6 298.4l0 3.5M1335.2 301.7l3.8 0M1352.4 301.5l1.8 -1.8M1358.5 300.5l1.8 1.8M1366.2 302.1l-2.9 1.1M1281.5 306.1l-0.5 1.1M1286.4 302.7l0 5.4M1291.7 306.6l1.9 1.9M1296.5 308.1l1.4 0M1308.5 305.3l0 4M1318.3 306.3l4.4 0M1322 307.3l2.4 -2.4M1337 306.2l1.6 1.6M1339.8 306.7l2.8 2.8M1343.3 304.7l2.3 2.3M1353.1 307.2l3.4 0M1360.8 304.7l4.7 0M1368.3 308.1l1.5 -1.5M1280.9 310.7l2.4 0M1286.5 310.5l1.7 1.7M1289.2 310.1l4 0.5M1293.4 307.9l2.4 2.4M1299.1 307.1l-0.9 4.6M1304.2 308.8l2.1 2.1M1311 311.2l-4.3 1.1M1318.4 311.2l1.8 0M1324.1 312.6l1.7 -1.7M1324.8 310.8l5.2 0M1333.1 311.5l4.3 0M1340.1 311.5l1.4 -1.4M1346.8 312.6l1 -1M1354.1 310.9l0 3.3M1359.6 309.5l0 3M1366.1 308.4l0 2M1365.4 309l5.4 0M1279.9 316.2l3.4 1.7M1286.7 314.3l0.5 1.3M1288.6 316l1.3 0M1293.7 316.3l3.5 0M1296.3 316.2l4.1 0M1302.9 315.1l1.6 0M1310.5 314l3.7 0M1318.3 316.3l2.1 0M1323.3 314.2l0 1.7M1329.1 312.6l0 2.4M1328.8 314.1l5.2 0M1337.3 316.1l3.2 0M1339.5 314.2l3 0M1353.6 315.3l2.7 0M1359.6 314.2l0.7 -0.7M1293.3 321.8l2.6 -2.6M1296.5 320.9l4.6 0M1303.4 318l0 2.3M1316.5 322.5l2 -2M1326.7 319.5l3 0M1331.3 321l1.4 0M1336.5 320.9l0 1.9M1340.2 320.2l3.5 0M1344.9 317.6l-0.3 3.4M1352.3 320.3l-0 2.5M1282.1 325.7l2.1 0M1284.3 326.3l2.7 0M1288.6 325.2l1.5 0M1296.1 323.2l-3.9 3.6M1300.5 325l2.2 2.2M1302.6 324.4l2.9 2.9M1309.9 324.7l2.7 0M1312.9 325.5l1.5 0M1335.7 320.7l0 5M1346.7 325.1l1.2 0M1348.9 321.6l0 3.8M1354.6 321.4l0 4.3M1286.4 328.2l-2.8 2M1286.3 330.8l3.4 0M1291 329.1l3.7 0M1296.9 328.9l2.5 0M1305.7 327.3l-2.9 3.4M1308.1 330l2.6 0.5M1285.7 333.5l0.7 1.3M1287.5 333.9l3.2 0M1292.3 334.1l1.9 -1.9M1298.2 334.5l3.1 0M1299.2 334.8l4.2 0M1304.2 334.8l2.3 0.8M1308.8 332.5l2.6 2.6M1278 339.4l5 0M1286.7 338.2l2.8 0.8M1289.9 338.4l2.4 -2.4M1294.9 338.5l1.1 -1.1M1300.3 338.3l1.8 -1.8M1305 339.6l3.1 0M1307.8 336.3l2.1 1.1M1280.9 345.5l3.6 -3.6M1296.2 343.6l2.3 2.3M1298.2 342.6l3.3 0M1310.7 341l2 2M1280.8 346.5l4.9 0M1292.4 347.3l3.3 -3.3M1295.5 347.7l1.4 0M1300.7 343.6l0 5.4M1307 347.9l3.1 0M1309.1 348.9l2.2 -2.2M1282 353.8l2.8 -2.8M1286.2 351.2l3.3 3.3M1288.3 350.2l2.6 0M1294.1 352.4l2.5 0M1297.4 352.8l3.4 0M1303.1 353.4l5.4 0M1284.3 355.9l-1.1 1.4M1284.7 357.9l2.6 0M1291.7 359.4l2.6 -2.6M1299.5 355.9l1.3 0M1305.7 356.6l4.5 0M1287 361.4l-2.5 2.4M1295.1 361l-2.5 2.2M1300.5 360.9l3.9 0M1280.2 367.8l3 -3M1282.6 366.6l5.2 0M1285.5 366.7l4.7 0M1292.1 367.4l2.5 -2.5M1298.7 364.5l1.2 1.2M1281.8 371.4l1.3 -1.3M1285.4 370.6l4.2 0M1280.6 375.3l1.4 0M1284.6 374.7l0 3.5M1284.1 378.8l3.5 0M1283 383.4l-2.9 0.5M1282.4 393.5l4.6 1.4M1279 402.6l5.1 1.6M1280.6 407.3l3.2 -3.2M1284.4 409.8l-3.2 1.2M1290.8 412.6l0 5.1M1296.5 416.6l3.7 3.7M1285.2 420l0 5.3M1289.9 416.8l0 5.1M1297.8 419.5l-4.4 0.1M1298.7 421.3l0 3.1M1293 426l3.3 -3.3M1299.7 423.9l0 5.5M1287.8 429.2l0 4.7M1293.3 431.9l4.1 0M1281.4 435.9l3.1 1.8M1286.1 434.2l3.2 2.6M1291.1 433.3l0 3.3M1296.4 435.2l1.8 -1.8M1282.9 437.7l2.8 0M1288.1 439.5l2.7 0.2M1295.7 440.5l3.6 -3.6M1279.1 445.9l2.1 -2.1M1284.2 442.7l1.7 1.7M1288.5 444.5l3.5 0.9M1281.8 447.4l0 3.1M1284.4 448.5l0 1.6M1291.6 448.6l1.7 0M1293 447.6l4.9 0M1299 448.8l2.9 2.9M1281.1 453.6l2.1 0M1286.3 454l3.1 0M1288.2 452.2l3.8 3.8M1296 453.9l2.7 0M1299.5 452.8l0 1.4M1277.5 459.5l5.1 0.8M1290.6 458.7l-3.6 1.9M1293.2 458.4l0 3.2M1298.4 458.9l0 1.7M1284.7 468.2l1.8 0M1295.1 467l0 4.3M1378.6 279.4l1.8 1.8M1380.5 279l1.9 0M1386.1 278.4l-1 1.2M1399.1 276.9l-2.3 0M1399.7 278l1.6 0M1403.2 278l1.6 -1.6M1409.8 276.7l4.1 0M1419.1 276l0 1.7M1426.3 276.1l-1.6 1.7M1428.9 276.8l1.1 0M1431.1 278.9l2.4 -2.4M1438.1 278.2l1.8 0M1441.1 277.9l2 0M1449.1 276.3l0 5.3M1452.4 276.6l-1.7 4.6M1461.3 278.9l-0.7 2.7M1463.4 278.1l1.3 1.3M1382.7 283.3l1.7 0M1389.1 282.5l-2.4 3.9M1390.1 284.7l2.6 -2.6M1397.4 283.2l4 0M1403.6 282.4l4.2 0M1416.8 283.9l-2 2.2M1423.5 282l0 1.4M1428.3 280.2l0 3.4M1438.3 279.9l0 5M1440.6 282.1l4 0M1449.5 282.4l2.6 0M1461.9 282.5l2.5 0M1466.3 281.5l2.5 0M1470.9 282.8l0 3.4M1473.2 280.9l1 1M1382.2 286.6l2.3 3.5M1388.3 286.8l1 1M1400 288.5l2.6 0M1404.7 288.8l2.4 -2.4M1410.4 287.1l-0.5 3.1M1419.3 286.9l1.2 -1.2M1420 286.7l4.3 0M1428.7 286.1l2 2M1432.7 285.2l-1.3 4.8M1438.3 287.5l1 0M1440.4 285.7l-0.3 4.2M1450.7 289.1l4.6 0M1465 289.4l2 -2M1473 283.5l-0.7 4.7M1391.4 291.1l3 0M1404.8 293.1l-1.2 1.1M1407.8 290.5l0 1.9M1411.2 293.8l2.2 -2.2M1413.6 291.3l1.8 -1.8M1420.8 292.5l4.2 0M1422.9 291l2.9 0M1427 291.2l4.6 0M1432.9 290.4l4.4 0M1441.3 289.2l3.4 3.4M1447.2 293.9l5.3 0M1451.5 295.4l3.1 -3.1M1458.6 291.8l1.6 -1.6M1460.1 293.9l4.8 0M1464.4 292.1l2 0M1391 296l5.1 0M1397.1 298.9l5 0M1406.1 295.1l-3.9 2.3M1411.1 298l1.1 -1.1M1417.2 295.6l-1 0.3M1417.4 297.6l3.2 -3.2M1426.4 295.3l4.4 0M1436.2 295l3.8 3.8M1442.5 295l1.2 0M1444.5 297.9l2.1 0M1452.8 297.3l-1.2 0.9M1455.7 294.2l0 5M1462.7 295.5l-3.9 1.3M1402.1 304.4l3.4 -3.4M1408.7 301.7l1.6 0M1409.8 302.3l2.4 2.4M1416.2 300.5l1.1 0M1419.8 304l1.9 -1.9M1429.8 300.5l-4.1 1.2M1428.5 299.9l3.6 3.6M1433.3 300.1l4.5 0M1447.6 300.9l4.4 0M1455 301.3l0.8 -0.8M1407.7 304.4l5.4 0M1416.6 305.4l2.2 2.2M1417.8 307.4l3 -3M1422.6 303.5l4.4 2M1435.2 306.5l0 2.7M1445.4 305.3l-1 0.9M1447.8 303.3l0 4.1M1430 312.2l4.3 0M1434.4 310.9l4.7 0M1559.4 357l1.4 0M1556.1 359.3l3.8 3.8M1558.5 361.3l1.8 0M1559.8 377.2l0 4.2M1562.8 377.1l1.3 1.3M1566.6 377.4l0 5.3M1557.4 382.5l4.6 0M1566.7 384l2.1 -2.1M1565.9 389.5l2.6 0M1538 386.6l3.8 3.8M1491.4 408.7l3.1 0M1559.1 416l2.6 2.6M1557.4 421l4.7 0M1559.7 424.1l5.1 0M1562.5 427.8l1.2 0M1569 423l0 4.8M1559.5 428.3l0 1.2M1566.1 429.5l0 5M1571.8 430.9l2.6 0M1560.6 433.2l3.2 3.2M1569 434.8l-0.8 0.8M1571.6 439.8l3.1 3.1M1349.6 381.2l1.9 1.9M1364.2 383.2l3.6 0M1349.1 385.1l3.4 0M1363.4 385l4.3 0M1353.9 388.1l0.5 4.8M1363.6 390.7l0 4.5M1367.4 392.2l0.9 -0.9M1353.7 393.4l-0.9 4.1M1360.4 395.3l2.1 2.1M1384.1 397.9l0 4.5M1370.7 404.2l2.4 2.4M1374.5 404.4l0 4.6M1384 404.6l0.8 0.8M1371.4 409.2l2.8 0M1381.8 410l2.6 2.6M1386.3 406.1l0 5.1M1360 414.2l3.8 0M1362.7 414l2.7 2.7M1369.1 412.2l3 0M1373 413.6l2.3 0M1377.8 414.3l2.2 2.2M1382.4 412.3l1 0M1356.1 418.2l2 0M1365.6 421.5l3.5 -3.5M1368.6 416l2.5 2.5M1374.3 419.4l5.2 0M1379.4 418.9l3.7 0M1384.2 416.5l0 1.1M1360.9 422.5l-0.7 1.5M1362.1 424.3l3 0M1367.7 421.9l5.2 0M1374.4 422l2.7 2.7M1379.8 421.4l0.9 0.6M1361.6 430l3.1 -3.1M1372.9 426.6l2.5 0M1363.2 427.9l0 5.3M1394.5 377.9l3.1 0.5M1395.3 383.8l1.5 0M1389.2 390.1l1.6 1.6M1390.7 398.4l2.1 0M1385.4 413.6l3.4 3.4M1385.1 419.7l0.8 0.8M1379.6 421.6l0 4.1M1339.5 460.3l1.1 1.1M1335.9 463.4l0 4.5M1337.2 464.2l1.1 -1.1M1343.1 464.5l3.5 0M1315.9 438.6l0.4 5.3M1477.4 522.7l2.2 -2.2M1479.3 521.9l3.4 3.5M1473.3 524.6l3.4 0M1479.7 524l-1 1.6M1483.1 524l1.2 1.2M1475.3 531.5l0 2M1478.8 529.2l1.7 0M1488.5 530.4l-0.9 3.2M1468.7 536.7l3.7 -3.7M1473.5 536.9l1.5 -1.5M1476.3 534.6l2.3 2.3M1480.9 534.7l4.7 0M1484 538.6l3.5 -3.5M1491 534.1l2.4 2.4M1466.8 538.6l5 0M1476.8 539.2l4.2 0M1489 536.2l0 5.2M1469.2 544.6l2.9 0M1479.5 544.6l1.9 0M1485.1 545.1l0.9 0.9M1465.6 550.6l4.1 0M1471.3 547.6l0 1.4M1477.4 548.2l2.2 1.7M1478.6 549.1l2 -2M1487.6 547.7l2.1 2.1M1168.7 185.8l1.3 0M1212.7 182.7l2.4 0M1207.2 187.5l0 3.5M1184.6 193.6l1.1 0M1204 194l3.9 -3.9M1217.3 192.5l-1.6 3.5M1218.7 197l3.4 -3.4M1223 192l2 0M1229.2 193.5l0 1.9M1174 195.8l0 2.2M1184.6 196.5l2.8 0M1189.9 203.3l-1.2 3.1M1201.8 201.3l4 0M1211.3 204l2 2M1234.3 200.5l0.6 3.4M1163.3 207l0 2.4M1185.2 206.2l-1.2 0.7M1188.1 207.3l5 0M1226.5 205.5l-1.3 1.4M1114 208.4l0 5.3M1173.4 212.3l4.6 0M1204.8 211.3l3 0M1209.3 210.1l1.8 1.8M1118.4 215.8l4.8 0M1138.6 219.9l3.1 -3.1M1161.2 217l3.3 -3.3M1179 216l1.3 0M1230.6 215.6l1.7 0M1121.3 220.4l0 4.5M1139.3 222l0.9 0.9M1145.5 221.3l3.5 0M1155.7 218.7l-2.8 2.7M1209.4 218.9l3 3M1122.3 227.8l3.1 0M1139.7 224.5l-3.3 2.5M1145.7 226.3l3.4 3.4M1160.1 222.5l3.3 3.3M1173.9 225.8l-0.8 1M1201.6 225.1l1.3 1.5M1206.6 224.8l2.7 0M1139.3 231.4l4 0M1189.6 229.9l2.7 2.7M1132.6 237l3 0M1151.9 237.4l1.6 -1.6M1171.6 233.8l0 3.3M1136 239.1l-2 0.7M1142.4 238.3l1.5 1.5M1147.2 237.7l-0.9 3.5M1150.4 237l0 4.6M1155.2 237.5l3.1 3.1M1182.4 245.8l2.2 0M1192.6 244l4.7 0M1128.8 250.7l4.2 0M1165.9 250.5l-0.9 0.4M1133.8 251.3l0 3.6M1186.5 254.3l2.9 2.9M1163.9 258l3.5 0M1146 260.9l2.5 0M1149.6 261.1l-0.3 1.2M1167.8 261.9l1.5 -1.5M1171.1 267.8l-2.5 1.3M1181.9 269.2l2.9 0M1146 272.5l1.3 1.3M1162 271.6l1 1M1170.1 270.3l1.2 2.5M1174 272l0 3.2M1184.6 270.2l0 2.7M1217.6 271.8l0 2.7M1240 271.2l0 4.3M1265.1 270.3l2.5 2.5M1271.8 270.9l3.7 0M1280.4 270.4l2.5 0M1172.6 275.3l3.1 3.1M1179 278.5l4.1 0M1186.4 278.4l4.8 0M1207.5 274.6l0 2.5M1227.6 273.9l3.8 3.8M1249 277.3l0.2 1M1269.2 276.5l1.7 -1.7M1294.5 274.6l0 4.1M1304.4 277.8l1 0M1149.5 281.4l0 1.1M1161.7 280.6l1.6 -1.6M1203.8 282.1l1.3 1.3M1225.8 279.8l1.9 1.9M1252 283.1l2.9 0M1267.6 282.8l2.3 -2.3M1134.2 285.3l1.3 1.3M1173.9 288.4l1.6 -1.6M1205.3 287.1l3.4 0M1214 284.2l3 2M1153.2 292.8l2 -2M1173.9 288.1l0 1.1M1180.1 291l1.2 0M1222.7 290l1.9 0M1241.5 291.7l0.9 -0.9M1266.6 288.8l-1.6 0.1M1284.2 289.6l0 2.1M1288.6 289.2l0.5 1.7M1174.5 295.8l2.8 0M1239.6 292.3l0 2.4M1243.8 294.8l0 2.3M1256.7 294.2l2 2M1298.7 293.5l0 1.2M1154.3 299.3l1.4 0M1180.2 299l5.4 0M1186.2 301.1l0.8 0.8M1211.4 298.9l2.8 0M1215.6 299.4l2.2 -2.2M1233.1 297.4l0 4.2M1237.2 300l1.6 1.6M1246.2 301.7l3 -3M1289.5 300.6l2.1 0M1172.6 304.5l3 -3M1180.4 303.7l2.8 2.8M1291.5 306.1l4.2 0M1141.7 307.8l0 4.4M1160.4 307.4l1.8 1.8M1176.6 306.9l2 1.1M1190.7 306.9l2.2 1.5M1197 308.3l3.3 0M1217.6 308l4.7 0M1291 306.4l0 4.9M1182.9 313.8l3 -3M1184.6 314.7l4.2 0M1196.7 311.4l0 2.6M1219 310l0 3.2M1240.6 312.5l1.2 1.6M1245.6 315.2l3 0M1259.1 313.9l1.4 0M1287 310.1l0 5M1138 319.9l4 0M1142.6 318.7l1.2 -1.2M1148.3 320l3.7 -3.7M1158.2 315.7l0 5M1162.7 319.8l3.6 0M1171.4 318.3l3.2 3.2M1195.9 314.9l0 3.7M1207.9 318.7l0 1.5M1244.4 316.3l3.7 3.7M1253 316.5l3.7 0M1290.6 318.8l1.9 1.9M1149.8 322.8l4.1 0M1247.3 321.4l3.3 3.3M1249.4 321.5l3.8 3.5M1270.4 322.5l1.7 -1.7M1171.3 328.4l1.8 1.8M1175.6 325l0 5.4M1179.7 328.1l3.5 0M1202.4 327.1l4 0M1261.5 327.2l-0.9 3.7M1142.4 329.9l-3 1.1M1170.7 332.7l3.2 1.9M1172.6 329l2.6 2.9M1177.9 328.4l2.4 3.9M1198.4 331.2l0 1.7M1224.8 330.5l2.9 0M1265 330l1.7 0M1142.9 333.8l-1.8 1.4M1142.4 336.3l2.6 -2.6M1152.1 333.1l0.3 5M1224.2 338.4l4.7 0M1229.9 338.8l1.5 -1.5M1257.4 338.2l4.2 0M1140.1 341.9l1.7 -1.7M1162.3 339.3l-2.2 2M1173.2 337.9l0 4.6M1212.5 337.7l1.4 4.4M1232.5 338.5l0 5.5M1246.9 343.2l1.7 -1.7M1256 339.8l1.8 1.8M1272.9 339.3l1.8 1.8M1279.7 338l0 4.9M1199.8 342l-2.6 3.8M1209.2 346.4l3.5 0M1242.3 344.7l4.3 1.6M1255 345.5l0 3.8M1258.1 346.3l1.6 1.6M1157.4 349.8l5.5 0M1196.1 351.7l5.1 0M1236.3 349l1.7 1.7M1282.7 350.1l1.8 1.8M1171.4 357.1l2.2 -2.2M1190 354.4l0 4.4M1207.3 350.7l0 5.1M1243 355.2l1.3 -1.3M1262.1 354.5l4.9 0M1268 352.4l2.9 2.9M1150.2 360.3l1.5 0M1152.5 359.1l4.9 0M1161.6 359.6l3.6 0M1171.4 356.5l0 5.1M1228.8 359.2l4.8 0M1260 359.4l3.8 0M1279.4 358.1l2.7 2M1170.6 364.2l2.7 0M1176.1 362.9l3.1 3.1M1179.7 362.2l2.2 0M1189.7 365.2l2.1 -2.1M1191.8 363.2l4.4 0M1216.8 362.6l1 1M1248.9 359.6l0 5.2M1267.5 365l1.8 1.8M1152.3 369l0 1.9M1157.1 369.7l-1.1 1.5M1181.4 368.4l3.4 0M1199.3 365l-0.6 4.3M1252.2 367.5l0 2.7M1267.5 365.7l0 2.7M1153.4 374.7l3.3 0M1187.4 373.9l2.4 -2.4M1235.9 372.4l0 2.3M1241.2 372.5l1.7 0M1247.5 372.1l2.1 1.5M1263.6 375.6l3.1 -3.1M1156 375.9l2 1.8M1198.8 374.8l3.4 3.4M1212.9 377.7l3.1 0M1227.6 377.7l-1.2 2.6M1240.1 377.2l1.1 0M1255.8 377.2l0 1.4M1258.6 378.3l1.3 0M1274.8 377.4l2.5 -2.5M1162.5 382.4l2.1 0.1M1205.1 380.9l4.2 0M1219.4 382.8l4.1 0M1260.8 384.1l0.8 -0.8M1142.3 387.9l1 1M1156.2 389l2.5 0M1196.4 390.3l2.5 -2.5M1202.7 388.9l3.4 0M1211.7 382.9l1.4 4.5M1236.1 384.7l0 1.3M1248.4 384.6l2.1 2.1M1259.5 387.7l-2.6 2.8M1262.3 386.9l3.7 0M1268.4 386.8l3.2 3.2M1139 390l3.6 3.6M1144 392.6l3.8 -3.8M1161 390.3l5.1 0.2M1197.3 391.2l1.2 -1.2M1206.3 389.8l0 1.2M1209 392.5l0 1.1M1234.1 390.3l3.2 3.2M1265.8 390.1l2.9 0M1179.6 397.1l2.6 -2.6M1192.9 394.4l5.5 0M1219.5 394.4l1.8 1.4M1263.1 396l-0.3 1.7M1145.9 400.8l3.7 -3.7M1203.4 400.2l0.8 1.5M1214.3 401.7l-3 0.3M1227.3 401.6l2.4 0M1248.6 399.5l5 0M1278.4 402l1.5 1.5M1192.3 406.4l2.9 0M1197.2 404.6l1.4 -1.4M1233 404.6l3.3 0M1268.8 401.7l-2.2 5M1204.7 411.8l-1.2 4.2M1211.6 411.9l3.5 2.2M1231.7 414.8l-0.2 1.2M1253.6 412.3l1.2 1.2M1261.9 413.4l0.9 3.5M1267.5 415.9l1.4 1.4M1273.6 416.2l1.3 0M1209.2 417.6l3.6 3.6M1228.7 419.3l2.2 2.2M1234.2 418l0 4.9M1249.7 419.6l1.1 1.1M1208.8 422.5l0 5.3M1222.8 423l0 4.8M1224 422.2l3.3 3.3M1245.3 423.8l3.3 3.3M1224.2 425.4l0 5.3M1231.1 427.4l4.8 0M1234.4 432.6l4.1 0M1304.3 213.7l1.6 -1.6M1299.2 214.8l3.6 3.6M1315.1 217l4.5 0M1246 218.9l2.8 2.8M1253.8 218.2l2.8 3.9M1223.9 227.8l4.3 0M1226.7 225.9l2.4 -2.4M1259.2 228.6l1.6 0M1308.4 228.3l3.7 3.7M1278.8 232.7l0 2.4M1303.7 234.3l1.9 1.9M1209.6 237.8l2 2.9M1240.5 237.9l4.1 3.2M1259.6 239.9l1.5 0M1276.7 240.9l1.5 -1.5M1287.8 242.4l1.7 -1.7M1229.2 243.2l3 0M1288.5 244.2l0 2.7M1212.4 247.8l4.6 0M1252.5 248l3.9 0M1286.9 248.1l3 0M1217.1 255.3l0 2.2M1294 258.4l2 0M1230.9 262.7l1 1M1239.1 260.9l4.3 0M1246.6 264l4.9 0M1277.4 265.1l-0.1 2M1115.4 211.7l2.9 -2.9M1120 209.6l2.7 0M1120.2 214.5l4.2 0M1127.9 213.1l-4 0.7M1135.5 216.2l2.7 0M1114.2 216.7l2.4 2.4M1128.8 218.4l2.6 0M1133.4 216.9l3.6 3.6M1143.9 220.8l3.5 0M1121.5 225.3l0 1.1M1123.5 223.6l2.5 2.5M1127.8 225.4l3.2 0M1130.6 222.9l2.6 0M1135.3 221.9l4.1 0.6M1142.8 226l2.1 -2.1M1149.8 222.7l3.2 0M1153.4 224.9l5.4 0M1123 227.9l5.1 0M1127.6 228.3l4.2 0M1133.1 228.8l5.2 1.2M1138.4 229.7l0.7 -0.7M1144.2 226.3l0 3M1150 225.7l1.8 1.8M1157 227.5l0 1.8M1123.5 232.5l4.8 0M1133.6 236l3.1 -3.1M1138.8 232.9l1.6 -1.6M1156.6 233.1l3 0M1129.9 235.2l0.2 4.7M1132.4 238l1.6 0M1147.8 236l1.3 0M1153 238.3l2.6 0.8M1154.3 236.9l2.9 2.2M1161.2 236.3l0 3.9M1128.3 240.3l2.6 0M1133.9 243.1l1 0M1138 241.6l1.2 1.2M1146 242.8l1.6 0M1151.9 240.7l3.8 3.8M1160.3 241.9l2.1 -2.1M1145.8 245.2l0 3.3M1150.4 244.6l1.9 1.9M1157.8 245.6l1.4 1.4M1161.8 248.4l4.3 0M1132.7 250.2l2.4 4.6M1146.1 250l1.5 1.5M1150.1 251.3l3.6 0M1138.2 255.2l0 2M1143.8 254.1l-1.2 2.5M1147.5 253.8l-1.8 0.6M1157.2 254.5l1.1 0M1161.2 255.3l0.9 -0.9M1140.3 261.9l3.8 0M1153.5 257.9l0.7 4.9M1146.2 263.6l0 1.1M1143.1 267.3l3 3M1174.8 168.6l1.4 5M1177.6 172.1l2.3 0M1187.8 170.9l2.9 2.9M1213.6 172.8l0 3M1179.7 175.1l3 3M1184.4 175.1l-3.5 0.7M1191.1 176.3l3.4 0M1198.9 177.6l1.3 -1.3M1201.8 178.1l1.6 0M1210.3 176.2l2.9 0M1213.6 177.8l4.7 0M1224.6 176.6l3 3M1232.6 177l3.7 3.7M1237.2 178.1l2 2M1241.9 179l5 0M1253.4 174.9l3.7 3.7M1171.3 180.7l1.3 0.2M1214.2 182l3.5 -3.5M1229.9 179.6l0 5.4M1243 182.1l3.2 3.2M1244.7 181.6l3.4 3.4M1229.8 186.5l2.1 0M1239 184.8l0 1.1M1243.3 186.4l3.2 3.2M1254.5 185.7l-1.5 2.5M1256.5 186.1l2 2M1237.2 191.6l-3.6 1.3M1239.9 191.6l0 2.3M1253.8 189.5l2.6 0M1232.3 195.3l3.7 0M1236.3 193.2l2 5M1240.5 199.6l2.8 0M1255.1 198.8l0 2.7M1257.9 201l1.3 1.3M1238.8 202.6l2.3 2.3M1253 205.3l3.8 -3.8M1259.8 203.1l-2.4 4M1237.7 210.8l2.9 -2.9M1246.8 205.9l3.5 3.5M1256.5 207.5l2.8 0M1231.6 211.7l1.7 0M1233.9 210.9l5.2 0M1238.5 210.4l3.7 0M1254.1 206.2l0 4.8M1224.6 215.9l0.9 0.9M1232.4 213.4l3.9 0M1221.9 220.3l-4 0.1M1210.6 223.4l2 2M1201.6 230.5l3.3 -3.3M1202.7 231.6l3.1 0M1194 239.5l3.2 -3.2M1195.8 241.8l1.4 1.4M1189.1 246.8l2.3 2.3M1191.3 250.8l0 1.3M1189.9 259.4l3.2 0M1206.6 272.4l1.8 0M1211.2 269.7l1.4 1.4M1218.7 270.4l2.4 0M1224 270.1l5.2 0M1231.4 270.9l3.3 0M1240.2 268.7l1.1 4.2M1245.4 271l1.5 2.1M1265.7 272.4l2.9 -2.9M1273.9 269.8l2.1 0M1276.6 267.6l2.7 2.7M1285.6 271l2 2M1304.7 271.2l1.5 1.5M1304.5 275.1l2 2M1297.7 287.2l3.8 0M1297.6 290.3l0 4.8M1290.8 318.9l3.2 -3.2M1286.4 335.5l4 0M1290.5 332.9l0 4M1286.3 343.6l1 2.7M1287.6 342.9l1.5 1.5M1282.1 358.2l0 2.6M1281.8 357.9l5.2 0M1280.4 371.2l0 5.1M1131.1 275.9l1.7 1.7M1136.7 285.6l1.3 -1.3M1134.4 292.4l3.5 0M1136.3 294.9l2.1 2.1M1140.8 301.9l2.8 -2.8M1142.4 303.8l3.3 0.9M1138.5 308.8l4.8 0M1138.4 322l3.2 -3.2M1144.1 317.2l-0.7 0.9M1140.6 321.8l0 3.5M1144.7 320.9l0 4.7M1142.6 325.3l2.9 2.9M1141.5 330.2l-3.5 1.2M1136.7 336.4l3.8 3.8M1143.1 337.1l2.1 1.7M1139.3 342l1.1 0M1139.5 344.8l2 0M1140.8 351.7l0.4 2.1M1138.5 354.5l1.2 0M1137 360.4l3.4 -3.4M1142.2 359.5l-1.3 1.1M1140 362.6l1.3 1.3M1139 368.2l0.9 1.7M1141.7 373.9l1.9 -1.9M1165.8 222.7l4.3 0M1169.5 225.2l5.2 0M1177.4 224.9l1 1M1180.7 223.9l2.6 0M1168.6 227.7l4.9 0M1178.3 228.7l1.1 1.1M1183.8 231l5.3 0M1174.9 234.8l1.5 0M1178.5 234.5l0 1.4M1184.8 233.2l0 4.3M1169.7 237.3l1.4 1.4M1178.2 239.8l1.2 0M1182.6 239.8l4.7 0M1172.6 243l4.8 0M1179.6 241.7l4.6 0.6M1182.5 243.7l2.2 -2.2M1170.8 246.8l2.7 0M1174 246.4l1.5 0M1179 247.1l2.4 2.4M1169.4 251.7l1.8 0M1183.3 250.7l0 2.2M1156.7 426.6l1.7 4.5M1159.4 430.7l3.2 -3.2M1160.9 432.5l4.8 0M1174.8 435.5l2 2M1177.3 438.9l1.8 -1.8M1182.6 436.2l0 3.4M1177.4 441.4l0 2.7M1183.7 440.1l1.4 0M1188.4 439.9l0 3M1193.3 440l2.4 4.3M1181 447.5l4.8 0M1188 445.6l1.7 0M1196.4 445.2l-4.6 2.4M1199.6 446.6l3.3 0M1181.4 450.7l4.5 0M1187.5 449.8l1.3 2.3M1192.4 448.7l3.2 0M1197.3 448.6l0 2.2M1197.7 450.2l5.5 0M1205.5 450.7l0.4 1.1M1185.7 452l0 2.4M1190.1 454.6l0 2.2M1195.3 453.2l0 4.5M1197 455.3l1.6 0M1185.7 461.2l4.1 0M1189 461.5l3.5 -3.5M1193.8 456.5l2.5 3.1M1189.7 463.1l4.9 0M1194.6 465.1l3.2 -3.2M1192.4 466.7l1 1M1213.4 403l3.4 0M1217.7 400l0 3.5M1223.3 401.2l2.6 0M1229.2 401.2l4.9 0M1208.7 408.5l2.2 -2.2M1213.7 407.7l3.9 0M1236.5 406.5l2.2 0M1237.1 407.2l2.8 2.8M1212 410.2l-1.2 0.8M1213.9 410.1l3 0M1217.8 409.6l0 3.9M1220.6 411.5l3.4 0M1238.1 407.3l0 5.2M1206.8 415.4l1.8 -1.8M1219.7 417.7l5 0M1238.8 413.7l-2.5 4.2M1235.5 419.7l1 4.6M1215.7 426.7l4.4 0M1221.4 423.5l0.7 0.7M1224.3 423.6l5.1 0M1232.6 423.9l0.9 -0.9M1240 424.6l2.3 0M1209.2 429l5.1 0M1213.6 428.7l2.7 0M1219.7 428.1l2.4 2.4M1226.4 427.2l3.2 3.2M1231.4 430.5l3.4 0M1235.4 430l4.8 0M1242.4 429.8l0 2.8M1207.7 432.5l1.2 2.7M1211.2 432.9l5 0M1219 432.7l0 1.4M1232 434.3l3.6 0M1236.2 435.8l4.7 0M1230.5 439.2l1.9 0M1210.1 444.8l1.6 0M1225.7 443.8l0 3.1M1229.9 442.4l4.9 0M1232.7 445.5l3.1 -3.1M1212.8 445.9l-0.6 2.1M1234.4 447.1l0 1.2M1212.2 454.5l3.4 0M1221.2 451.6l0 5.1M1239.6 453.5l4.3 0M1215.5 456.1l1.1 1.1M1217.7 454.8l3.6 3.6M1225.6 455.6l3.2 0M1235.4 458l-1.6 2M1238.5 454.6l0 4.1M1245.2 456.8l0.8 0.8M1229 466l3.7 0M1236.6 468.8l3.1 3.1M1237.6 474.6l3.6 -3.6M1252.4 402l0 2.7M1270.9 401.6l0 4.7M1274 405.5l2.3 1.5M1277.5 406.5l3.4 0M1253.8 410.1l0 1.9M1270 408.8l3.1 0M1274.2 410.8l4.9 0M1280.7 407.9l3 0M1285.4 407.5l1.5 1.5M1249.4 413.3l2.3 0M1257.7 412.8l-0.2 2.1M1263.7 414.7l3.4 0M1272.9 412l-4.1 2.9M1276.9 413.1l3.5 2.1M1286.8 415.2l1.3 -1.3M1268.5 417.1l-0.4 1.1M1279.1 417.1l-1.2 0.6M1290 416.6l0.3 1.6M1291.6 418.9l2.4 2.4M1256 421.3l1 1M1266.2 422.1l3.3 0M1291.8 421.1l0 5.5M1297.2 425.2l0 1.8M1300.1 431.1l0 1.3M1292.1 442.5l1.3 0.1M1289.9 448l3.9 -3.9M1282.2 449.3l2.8 2.8M1283.1 451.7l3.7 3.7M1297.4 453.5l2.6 0M1275.6 459.2l0 3.7M1135.9 381l2.5 0M1137 377.8l5.2 0M1137.8 391.2l3.9 -3.9M1139.7 393.5l4 0M1145.4 398.2l0 1.5M1142.5 407.9l1.6 0M1148.3 406.1l0 4.5M1142.6 410l0 1.4M1147.7 412.7l3.8 0M1146.8 411.9l0 5.4M1151.4 420.6l0 2.6M1151.8 425.4l4.8 0M1208.1 483.7l0.9 0.9M1212.2 480.6l2.3 2.3M1215 483l5.5 0M1222.9 484.2l1 1M1210.4 488.3l1.2 1.7M1217.7 485.9l2.6 2.6M1223.7 487.6l0 1.6M1218.9 493.8l3 0M1220.5 496.9l0 1.3M1221.1 496.7l1.5 0M1208 508l5.3 0M1207.5 509.8l3.9 3.9M1214.7 511.1l1.8 1.8M1208.4 522.8l2.2 -2.2M1211.3 522.7l5.5 0M1283.7 511.9l1.8 0M1289.1 509.7l2.7 2.7M1282 513.3l1.2 4.9M1287 517.1l3.4 0M1290 518.3l4.9 0M1350 516.7l0 3.6M1356.6 520.1l3.2 -3.2M1360.4 515.9l-2.7 0.4M1284 520l0.9 0.9M1287.9 519.2l3 3M1330.7 519.6l0 4.7M1337 520.4l0 3.5M1340.3 523l3.5 -3.5M1343.8 520.9l-1.2 0.8M1349.1 521.5l2.5 -2.5M1352.6 522l2.7 -2.7M1360.1 523.2l0.9 -0.9M1361.5 518.8l0 4M1286.3 527.1l1.3 0M1294.1 527.2l-0.1 1M1296.1 524.8l0 4.8M1322.7 528l3.9 0M1332.1 523.1l0 1.8M1337.8 527.4l3.3 0M1341.3 526.1l1.7 0.3M1345.6 527l5.1 0M1350.9 525.6l1.1 -1.1M1354.5 529.3l2.9 -2.9M1287.6 527.9l-4.2 3.1M1289.9 529.5l1.3 0M1294.1 529.8l5.4 0.1M1297.6 531.1l4.4 0M1305.7 528.4l2.8 2.8M1309 531.1l4.1 0M1313.5 529.7l0 3.3M1318.8 529.9l2.5 2.5M1325.1 528.2l3 3M1332.5 532.2l1.1 0M1334.3 530.4l4.7 0M1342.9 528.4l0 4.3M1345.6 531l3.7 -3.7M1352.5 528.3l0 5.2M1356.9 530.1l2.1 2.1M1358.6 533.5l3.2 -3.2M1291.5 532.7l-2.5 1.2M1298.9 535.8l4.4 0M1303.6 533.9l5.1 0M1311.3 532.8l-1.1 4.9M1310.5 538.9l3.6 -3.6M1318 533.4l3.9 0M1321.3 535.6l1.1 -1.1M1326.6 532.1l3.9 3.9M1337.1 533.9l-5.4 1.1M1336.9 535.7l3.4 0M1340.6 533.3l3.5 0M1344 532.4l2.4 2.4M1351.2 532.7l0 2.2M1354 535.6l2.9 0M1360 537.3l1.8 -1.8M1287.6 542l2 -2M1293.6 536.9l-4.1 2.1M1301.7 536.6l0 5.4M1315.2 538.3l4.1 0M1319.3 540.8l5.3 0M1325.7 540.9l5.4 0M1332.1 536.2l3.3 3.3M1337.3 536.5l3.8 3.8M1347.7 537.4l-0.6 3.5M1352 540.1l1.3 0.1M1359.2 538.5l1 -1M1360.4 537.7l3.5 3.5M1363.6 540.2l5 0M1288.5 543.5l1.9 1.9M1291.9 542.4l0 1.2M1309.2 547.9l3.6 -3.6M1316.9 542l-2.3 1.4M1318.4 543l3.5 3.5M1327.7 546.2l2 0M1332.9 543.7l3.5 0M1335.6 544.3l2.1 -2.1M1342.3 544.4l2.6 -2.6M1346.4 543.5l1 -1M1350.5 543.6l5.4 0M1358 543.6l0.3 2.4M1360.2 545.7l4.6 0M1365.3 545.7l2 0M1289.3 548.5l2 -2M1293.2 550.8l4 0M1305.6 548.1l4.5 0M1312.9 550.3l1.5 0M1317.1 548.3l-3.3 1.2M1319.6 546.7l-0.5 5.1M1324.5 548.6l-0.9 2.4M1328.6 547.1l3.8 0M1348.2 549.7l1.9 1.9M1350.6 550.1l3.8 0M1355.8 546.8l1.3 1.3M1359.8 547.6l3 3M1292.3 552.2l2.5 0M1296.5 552l0 3.2M1301.6 553.9l0.1 3.2M1308.6 554l3.7 -3.7M1321.3 552.4l1.9 0M1323.6 550.6l0 3.7M1329.9 552.6l1.6 2.3M1330.7 554.2l3.4 -3.4M1346.7 554.6l5.3 0M1353.1 551.4l1.2 1.2M1356.9 555.4l1.1 0M1360.1 551.7l1.9 0M1289 557.9l-4.3 1.6M1292.4 555.9l0 2M1295.1 558l1.8 1.8M1301.1 558.9l4.1 0M1309.1 558.6l3.5 2M1316.5 556l-2.8 3M1316.1 557l2.3 2.3M1327.2 557.7l3.4 3.4M1331.3 561l1.7 -1.7M1290.1 563.1l0 2.9M1295.8 563l0 1.8M1296.7 564.1l3.8 -3.8M1306.1 559.7l-1.9 3.1M1306.6 565.5l2.6 -2.6M1312 563.9l3 0M1316.1 563.9l1.2 0.9M1318.4 562.9l5.4 0M1324.5 563.1l2.7 0M1277.5 565.9l5.2 0M1285.1 566.7l4.8 1.5M1289.1 567.3l3.5 0M1295.7 565.6l3.1 3.1M1297.5 567.2l3.9 0M1303.6 568.7l1 0M1309.4 567.2l5.1 0M1319.7 566.9l0 4.9M1322.7 566.1l0 3.7M1279 572.8l3.2 0M1299.3 572.9l0 1.2M1298.9 572.8l5.1 0M1303.1 570.1l3.6 3.6M1309 571l4.4 0M1313 570.3l1.8 0M1295.7 575.9l0 3.6M1296.5 577.3l2.6 -2.6M1303.7 575.3l0 1.7M1309.3 575.6l1.2 1.2M1312.6 576l2.3 -2.3M1318.2 573.8l0 5.3M1318.6 577.5l3 0M1276.2 580.9l2.6 0M1281.5 578.4l0.9 2.4M1290.9 581l-1.4 4.2M1290.1 579.8l3.6 3.6M1297.3 583.2l3.6 -3.6M1299.8 580.4l2.9 0M1305.8 579.9l2.3 0M1312.2 581.6l0.7 -0.7M1316 582.2l0 1.1M1317.6 580.6l4.4 2.3M1271.7 586.3l1.2 0M1279 583.8l1.3 1.3M1281.6 585.9l0 1.1M1286.6 587l3.8 0M1291.6 584.9l4.1 0M1297.2 585l-0.8 3M1300.2 582.8l-0.3 2.6M1304 586.4l1.1 -1.1M1308.4 584.3l1.6 0M1313.1 584.6l2.3 0M1318.3 583.9l1.7 1.2M1272.6 591.1l0 2.7M1278.2 590.7l-0.4 1.2M1283.7 588.5l2.4 2.4M1291 591.3l2.3 0M1292.2 593l3 -3M1301 589.9l1.9 1.9M1303.6 588.2l0 2.9M1309.7 591.6l2.2 -2.2M1313.7 590l1 -1M1315.5 590.9l3 0.3M1267.1 595.6l1.4 0M1268.9 593.2l2.7 0M1279.1 596.2l1.3 -1.3M1291.7 594.5l0.1 1.2M1293.8 594.9l1.3 -1.3M1300.5 596.4l1.3 0M1304.2 592.9l0 3M1317 594.4l2.1 -2.1M1274 600.1l2.6 2.6M1277 597.7l2.1 0M1281.5 598.3l1.7 1.7M1292.1 601.7l1.1 -1.1M1294.6 599.8l2.8 0M1299.7 601.5l2.9 0M1304.4 600.4l3.3 0M1311.5 600.2l-3.3 1.5M1313.9 597.8l0.9 0.9M1317.7 596.9l2.5 2.5M1278.8 601.6l0 2.8M1281.3 602.5l4.8 0M1287.5 603.2l2.1 0M1291.2 605.8l5.1 0M1303.3 601.2l0 4.9M1365.6 551.6l0 2.8M1368.7 558.5l1.1 0.5M1371.2 556.7l1.4 1.4M1364.3 564.6l3.7 -3.7M1372 557.4l0 5M1377 560.6l-2.5 0.5M1364.3 564.9l4.8 0M1372.6 566.8l0 2.2M1371.8 571l3 -3M1372.8 571.3l3.5 0M1372.7 574.6l4.9 0M1361.9 581.3l3.3 -3.3M1367.2 583.2l2 0M1302.1 484l3.3 0M1316.9 494.1l1.4 -1.4M1322.1 493.9l0.8 0.8M1327.2 491.5l3.8 3.8M1329 492.4l3.7 0M1334.1 495.4l3.9 0M1319.8 495.5l0 4.1M1330.3 495.6l2.3 1.8M1334.4 499.1l3.7 0M1328 504.9l1.8 0M1334.5 503.2l2.9 0M1337.1 489.7l3 -3M1344.1 491l4.2 0M1352.8 485.6l4.9 0M1360 485.7l2.2 -2.2M1368.2 485.8l2.1 2.1M1351.7 489l4.5 0M1359.2 490.2l0 3.2M1365.8 491.5l-4.8 0.7M1364.3 489.7l3.2 0M1308.7 505.8l2 2M1309 514.5l1.1 1.1M1247.8 495.5l3.4 -3.4M1254.5 491.9l1 0M1261 493.6l1.5 -1.5M1245.8 495.9l2.2 2.2M1248.5 496.6l1.6 -1.6M1254.2 499.9l1.8 -1.8M1264.9 495.6l-0.8 1.5M1267.2 497.7l4.2 0M1244.2 502.9l4.2 0M1250.2 500.9l1.9 0M1252.8 502.1l3.9 0M1257.1 505.2l3.8 -3.8M1263.1 501l0 4.1M1270.2 500.6l1.6 0M1277.3 498.8l0 4.5M1244.4 505.3l5.5 0M1251.3 504.6l1.2 1.2M1254.2 506.5l4.8 0M1261.4 503.2l0 4.6M1268 507.7l1.6 0M1273.3 507.8l3.6 0M1247.8 512l3.7 0M1252.2 510.1l4.6 0M1255.6 510.6l3.6 0M1267.3 508.8l0 3.8M1244.5 513.7l3.6 1M1252.7 512l0 5.1M1256.9 513.2l1.8 1.8M1262.4 514.2l0 2M1266 514.8l1.5 1.5M1271.4 515.3l-1.4 2M1246.2 517.9l1.5 1.5M1252.4 519.3l0 3.5M1254.1 517.9l0.8 1.9M1260 518.9l0 1.1M1242.8 526.5l4.1 0M1251.7 522.8l0 5M1252.1 525.7l4.7 0M1243.9 530l2.1 2.1M1250.6 527.6l0 3.8M1250.8 533.1l3.5 3.5M1245.7 540l5.3 0M1244.6 541.3l1.9 1.9M1239.4 548l2.3 2.3M1241.4 547.1l4.5 0M1234.9 551.8l5.1 0M1241.8 551l-0.8 3.1M1245.4 549.7l0 2.4M1230.4 556.7l4.5 0M1238.2 553.9l3.8 3.8M1241.8 559.6l2.9 2.9M1228 566.9l4.1 0.1M1233.2 564.5l2.8 0M1233.7 568.8l1.2 0M1431.6 479.4l4 0M1437.3 477.7l1.7 1.7M1440 475.1l2.5 2.5M1427.9 481.7l2 2M1432.7 484.1l1.1 0M1423.5 484.7l2.8 2.8M1425.8 485.3l3.4 3.4M1429.5 486.9l2.7 0M1436 486.8l1.7 -1.7M1420.1 489.7l4.3 0.1M1427.7 492.1l-0.5 2.4M1432.6 489.9l0 4.9M1434.2 488.8l1.3 1.3M1436.6 491.6l3.5 0M1418.9 496.4l2.4 2.4M1425.5 495.5l2.6 0M1418.7 503l3.1 -3.1M1424.4 499.7l2.3 2.3M1423.3 504.3l0 1.5M1424 505.1l3.2 3.2M1421.4 508.8l1.4 0M1426.4 513.8l2.4 0M1433 515.4l-3.3 1M1431.5 519.3l1.8 1.8M1436.7 520.1l1.6 1.6M1426.9 523.8l3.5 -3.5M1440.2 521l0 3.4M1431.2 527.2l3.5 3.5M1433.4 529.1l4.4 0M1425.3 532l4.9 0M1430.7 534.6l3.7 0M1435.3 534.3l1.1 0.9M1431.6 535.2l0.4 2.6M1433.6 536l0 1.1M1430.9 540.1l0 3.1M1437 542.7l0 1.4M1438.8 543.8l2.3 -2.3M1435.1 543.6l0 3.9M1436 546.3l4.9 0M1430.1 550l4.2 0M1435.9 551.1l1.7 1.7M1431.6 558.4l1.5 -1.5M1439.2 556.1l-1.3 1.1M1434.4 557.7l1.1 3.9M1435 562l0 3.3M1435.3 565.4l3.1 -3.1M1434.6 566.7l0 5.1M1432.5 572.4l1.3 0M1436.4 573l3.6 0M1433.7 576.2l0 4.8M1429.5 583.4l2.3 2.3M1427.2 589.1l4.5 0.4M1425.6 592.8l3 3M1432.2 590.9l-1.1 0.3M1421.8 598.7l2 0M1426.1 594.2l2.3 2.3M1420.7 599.1l2.1 2.1M1422.9 602.9l3.5 0M1421.7 603.6l0.9 1.9M1407.5 615.9l0.3 2M1411.1 616l0 1M1414.4 616l4.2 0M1406.3 619.5l4.4 0M1404.1 625.3l5.4 0M1409.8 624.4l2.8 2.8M1413.2 625.4l3.2 0M1416.5 625.3l2.2 -2.2M1401.6 629.5l1.1 0M1405.1 626.7l1.7 1.7M1407.7 630.9l3.4 -3.4M1413.2 633l3.5 -3.5M1420 626.4l0 2.3M1412 632.8l-3.4 1.8M1443.5 478.8l5.5 0M1451.1 477.3l1.5 1.5M1459.7 477.1l1.3 0M1447.8 484.2l3.7 -3.7M1451.5 480.8l0 3M1454.1 481.1l3.7 3.7M1444.4 487.4l1.2 0M1447.2 484.3l2.6 2.6M1443.1 495.5l2.8 -2.8M1440.1 502.7l3.3 -3.3M1443.6 504.3l2 0M1445.7 507.9l1.5 0M1445.2 515l0 2.6M1448.2 517.8l0 1.6M1451 525.5l2.1 0M1456.8 523.2l-2.3 1.5M1454.6 530.6l2.6 -2.6M1460.8 526.4l-1.1 1.4M1550.8 257.1l0 4.4M1556.4 258.3l1.8 -1.8M1567 256.2l-1.9 0.8M1567.8 257.3l0.9 -0.9M1540.5 261.6l0 2.6M1543.4 264.3l2.4 -2.4M1549.9 260.1l1.5 1.5M1556 263.6l1.3 -1.3M1560.5 262.5l0 2.4M1563.5 265l1.7 -1.7M1566.5 260.8l2 2M1570 262.2l5.5 0M1576.1 257.6l0 5.4M1531.4 263.1l-2.5 3.4M1529.8 264.4l3.4 3.4M1536 269.8l3.7 -3.7M1539.3 265.4l2.2 0M1545.1 265.5l4.7 0M1549.6 266.7l1.5 -1.5M1559.4 265.8l1.3 1.3M1566.7 268l-0.1 1M1568.9 267.5l-1 0.1M1576.1 266.4l-0.1 3.4M1538.4 270.3l0 4.3M1540.7 267.1l0.8 4.8M1545.5 271.8l0 2.6M1549.1 272.8l3.9 0M1561.3 266.9l0 5.2M1561.4 271.4l4.1 0M1573.1 270.9l3.4 0M1529.9 277.5l3.2 -3.2M1535.9 278.5l3.2 -3.2M1545 274.3l4.1 0M1547.5 273.5l3 3M1554 274.2l0 1.2M1560.2 277.3l2.6 0M1568.5 277.5l2.4 -2.4M1571.8 278.5l2.4 -2.4M1525.6 281.8l3.7 -3.7M1540.4 281.1l-2 2.8M1542.6 278.1l3.4 2.6M1553.4 279.2l1.4 1.4M1554.4 279.1l1.6 1.6M1565.6 284.4l3.8 -3.8M1576.7 282.3l2.5 -2.5M1526.3 286.4l3.6 0M1531.6 285l0 2.6M1537.7 284.7l2.4 2.4M1545.3 281.6l-1.4 3.5M1548.1 287.5l3 -3M1552 285.9l4.1 0M1556.2 285.3l2.7 2.4M1567.3 283.8l-0.8 0.8M1572.4 281.7l2.9 2.9M1576.1 285.7l0.8 0.8M1577.7 284.6l4.1 0.5M1527.3 288l3.4 0M1532.4 288.3l3.9 0M1551.5 290.5l3.5 0M1559.8 288.3l4.8 0M1564.1 290.9l5.2 0M1567.6 288.2l3 3M1573.1 289.5l4.1 0.7M1578.2 290.1l5.4 0M1589.2 289.9l-0.1 2.7M1522.7 294.8l1.6 0M1526.7 294.5l5.5 0M1533 294.5l2.2 0M1536.5 291.9l2 2M1541 293.7l4.9 0M1547 294.7l0 1.1M1551.8 293.4l-1.9 0.9M1556 294.1l-1 0.3M1569.9 295.4l1.4 0M1576.3 291.7l0 1.4M1577.2 293.9l1.6 0M1584.2 294.6l3.2 0M1590.1 295.9l4.4 0M1522.9 298.1l2.6 2.6M1530.4 299.3l-0.8 1.4M1534.9 299l2.7 0M1537.2 300.6l2.4 -2.4M1543.7 299.6l1.3 -1.3M1545.9 299.2l5 1.7M1552.7 298l1.6 -1.6M1557 298.7l0 3M1560.4 300.6l3.1 0M1566.4 297.5l0 2M1574.3 301.2l3.2 -3.2M1581.1 297.5l0.5 3.7M1584.8 300.2l1.8 0M1588.6 299.6l0 1.8M1594.4 298.5l1.4 0M1527.3 304.8l2.4 0M1533.8 302.8l0 1.9M1542.3 301.2l-2.5 3.3M1546.1 300l1.4 5.1M1558.1 305l2.6 0M1563.5 303.7l1.2 0M1564.3 303.2l2.2 2.2M1570.9 304.6l0.7 -0.7M1576.3 305.3l2.7 0M1582.9 303.2l3.6 0M1524.5 307.9l3.6 3.6M1529.7 308.8l3.9 0M1537.4 305.4l0 3.7M1541.4 308.1l1.8 0M1545.7 307.8l2.6 2.6M1549 307.4l2.1 -2.1M1556.3 308.4l2 2M1559.8 311.4l2.6 -2.6M1562.6 308.5l5.2 0M1577.4 309.1l-5.1 0.4M1575.5 307.7l4.5 0M1582.4 307.8l1.6 1.6M1585.1 306.9l2.1 0M1592.1 306.5l0 1.4M1595.7 305.8l3.6 3.6M1537.5 315.4l3.6 -3.6M1540.4 311.5l2 3M1543.7 314.1l2.9 -2.9M1551.8 312.4l0 2.9M1555.1 313.3l4.2 0M1558.3 314.3l2.2 -2.2M1565.9 312.8l2.1 0M1570.9 312.6l0 3.8M1572.7 312.8l1 -1M1581.9 310.3l2 2M1592 311.7l3.4 0M1599.1 310.6l-3.9 3.6M1598 311.7l5 0M1529.7 316.2l4.3 0M1535.2 318.1l3 0M1538.3 316.8l3.6 3.6M1541.4 317.8l2.8 -2.8M1548.4 314.7l0 5.2M1551.4 316l4.4 0M1562.2 316.5l2.5 3.3M1568.3 316.3l-1.3 1.9M1585.6 317.4l3.6 -3.6M1590.5 315.7l0 2.4M1594.9 316.7l2.7 0M1541.3 320.4l5.4 0M1545.6 321.7l4.9 0M1551.9 321.2l2.1 -2.1M1555.7 321.6l0 2.4M1558.3 322.1l2.9 -2.9M1586.6 320.3l5.3 0M1594.1 321.5l1.8 -1.8M1540.7 325.4l1.9 0M1546.2 326.7l0.9 -0.9M1558.9 326.4l5 0M1550.6 331.5l2.2 -2.2M1555.6 330.4l3.7 3.7M1561.4 331.6l2.1 0M1581.9 253.8l2.5 2.5M1599.1 254.2l2 3.2M1589.2 260.8l0.7 -0.7M1614.1 256.5l2.5 2.5M1616.8 260.4l4.6 0M1585.7 266.1l1.8 -1.8M1593.9 262.6l0 4.9M1593.5 263.7l3.4 0.2M1618.9 262.8l0 5.2M1587.3 267.1l4 0M1593.2 270.2l0.8 0.8M1598 270.4l2.2 0M1589.7 273.7l1.3 -1.3M1609.6 275.7l2.6 -2.6M1611 273.7l2.1 2.1M1580.9 278.8l3.3 -3.3M1591.3 279.7l3.7 -3.7M1600.4 289.2l2 2M1612.5 291l2 2.5M1618.8 289.9l0.6 0.9M1605.8 299.7l0 1.9M1608.1 282.3l2.5 -2.5M1616.2 281.2l2.8 0M1605.9 290.1l2.6 -2.6M1613.9 285.1l0 1.4M1618.7 288.3l1 -1M1607.7 294.7l3.1 -3.1M1613.9 290.5l2.9 0M1621.9 294.9l2.2 -2.2M1624.7 292.8l5.2 0M1630.5 294.4l5.3 0M1624 295.7l4.7 0M1630.6 295.6l1.7 0M1637.5 295.2l0 1.8M1623.8 303.1l2.1 0M1633.9 300.9l3.1 0M1637 299.5l1.9 1.9M1634.9 275.9l0 5.3M1639.8 276.9l2.7 0M1630.5 285.5l2.7 -2.7M1636.7 281.4l1.4 0M1643.2 284.1l1.5 0M1634.7 286l2.1 0.2M1639 314l0.7 0.7M1643.2 314.4l1.6 0M1645.6 313.5l4.3 0M1654.4 311.2l0 3.3M1658.6 314.4l2.8 0M1633.2 318.2l1 1M1641.8 318.1l-1.8 0.5M1645.1 318l5.2 0M1648.6 318.2l4.2 0M1654.8 317.7l4.6 0M1658.6 313.4l0 5M1625 324.2l2.5 -2.5M1629.2 322.1l2.6 0M1636.5 321.2l0 1.5M1645.3 321.3l-3.4 2.5M1647.9 324.2l3.3 -3.3M1650.4 319.8l5.4 0.3M1657.3 322.5l2 0.2M1614.4 325.6l2.4 2.4M1617.8 326.3l4.4 0M1627.5 326.7l0.7 0.7M1634.1 328.4l2.6 -2.6M1637.4 324.1l0 2.2M1640.9 326.7l1.8 0M1646.5 325.1l-1.4 3.3M1650 327.4l1.3 0M1658.2 323.9l0 5.1M1608 330.3l0 1.3M1614 329.3l0 3.3M1624.1 332l2 -2M1632.2 330.8l3 -3M1639.3 327.1l-1.3 4.5M1640.4 331.5l1.5 1.5M1645.5 329.6l4 0M1653.8 331.7l0 2.4M1657 329.6l5 0M1604.1 334.6l1.1 -1.1M1605.9 336.5l4.4 0M1614.8 334.2l-0.6 2.3M1619.9 332.6l0 2.9M1594 340.2l0 2M1602 340.5l2.7 1.2M1609.1 340l1.7 1.7M1610.6 340.6l2.3 0M1591 343.4l5.3 0M1596.4 344.7l1.4 0M1602.9 341l0 3.9M1607.1 344.9l0 3.7M1582.1 346.5l2.2 3.2M1584.2 350.8l4 0M1592.4 345.9l3.2 3.2M1597.6 349.3l1.6 1.6M1600.9 347.6l-1.5 1.4M1579.4 353.5l3.2 3.2M1591.4 354.8l-4.1 0.3M1576.5 358.6l3.6 -3.6M1585.5 356.2l0 3.5M1578 363.2l3.3 -3.3M1577.5 363.2l1.2 1.3M1580.5 363.9l1.8 1.8M1584.9 361.5l5.2 0M1588.3 362.3l4.1 0M1577.7 367l4.9 0M1582.1 367.5l1.2 0M1587.5 365.7l-0 5.3M1592.9 366.8l1.9 0M1576.2 371.5l4.2 0M1581.4 371l2.8 2.8M1588.6 370l-3.2 3.3M1626.9 187l-2.5 2.7M1624.9 194.5l1.8 -1.8M1627.8 192.5l3.1 0M1625.1 199.5l1.9 -1.9M1632 198.2l1 -1M1627.9 202.2l4.9 0.5M1622.9 209l3.7 -3.7M1628.8 206.2l2.7 0.3M1624.2 210.5l1.1 -1.1M1623.9 211.5l3.4 -3.4M1630.4 210.8l1.7 0M1628.1 216l3.5 0M1631.1 214.8l2.9 0M1619.8 220.3l3.7 -3.7M1629 218.3l5 0M1620.1 226.2l1.5 0M1630.8 223l0 3.5M1627.8 229.1l3.9 0M1615.4 233.7l1.8 0M1617.1 234.3l1.7 1.7M1620.5 233l3.3 0M1625 232.5l4.9 0M1613.4 238l5.4 0M1614.7 239.6l5.2 0M1614.8 240.7l1.7 1.7M1617.4 241.9l4.4 0M1568.7 195.7l0 2.8M1572.2 199.2l2.2 0M1569.3 201.4l4.6 0M1580.6 200.8l-1.4 0.3M1580.1 206.9l2.9 -2.9M1577 211.5l4.8 0M1580.4 211.2l2.1 0M1568.8 217.1l2.5 0.8M1567.4 224.6l1 -1M1558.5 231.9l3.3 -3.3M1558.2 235.2l2.7 0M1564.1 232.6l0 5.2M1560.3 241.7l1.4 -1.4M1481.5 276.3l1.1 -1.1M1486.1 276.9l4 0M1494.1 274.9l-1.1 2.9M1497 274.8l1.5 0M1498.8 275.3l3.9 0M1506.9 274.5l0 4.7M1514.2 274.3l2.6 2.6M1519.4 275.3l3.5 0M1521.7 279.4l2.7 -2.7M1528.5 278.2l1.8 0M1480.8 279.6l4.7 0M1486.1 279.1l-0.3 2.8M1492.5 278.9l0.9 0.9M1501.9 282.3l4.2 0M1514.6 282.5l2 0M1515.6 282.6l3.7 0M1523.2 280.6l0.9 -0.9M1525.5 280.4l3.9 0M1496.2 285.8l3.3 -3.3M1497.5 287.1l5.1 0M1507.4 284.9l3 3M1515.4 285.1l-3.5 3.8M1522.8 283.2l0 2.9M1506.6 288.7l5.4 0M1514.8 289.1l1.8 0M1520.3 289.3l2.9 0M1548.7 539.3l0 2.4M1551.1 543.8l5.5 0M1549.2 548.8l0 4.3M1554 551.2l1.5 0.6M1205.7 551.9l0 2.3M1212.6 554.7l2.9 2.9M1204.2 560l5 0M1208.8 564.6l0.7 -0.7M1214.4 567.1l0 1M1230.7 554.8l1.2 -1.2M1232.3 555.3l4.6 0M1238.5 556.5l3.1 -3.1M1248.3 555.4l3.3 -3.3M1231.4 560.1l3.2 0M1241.4 558.9l0 2M1246.3 556.9l1.4 1.4M1249 559.5l0 2.4M1234.6 564.6l2.7 0M1241.2 563.8l2 0.7M1243.8 564.4l2 2M1232.8 564.7l0 4.6M1240.4 566.6l4 0M1237.3 571.3l0 1.5M1242.2 571.3l1.6 2M1238.7 578.6l2.6 -2.6M1243.2 577.3l1.6 1.6M1479.9 555.1l-2.4 2.7M1482.5 552.8l0.9 4.8M1490.8 552.4l0 4.6M1480 556.2l1.5 2.2M1501.4 694.4l4.4 0M1512.5 693.7l0 2.1M1517.2 695.4l1.4 -1.4M1499.4 698.8l1.8 -1.8M1504.4 700.3l0.9 0.9M1510.8 699.5l1.8 1.4M1516.7 696.7l0 4.7M1499.3 709.6l4.9 0M1506.8 707.2l1.5 1.5M1495.4 713.3l3.2 -3.2M1498.7 713.2l2 2M1492.4 717.2l1.4 0M1495.7 713.9l0 4M1495.1 725.4l0 3.8M1482.9 744.1l1.8 0M1487.8 743.7l-1.5 2.4M1480 747.9l3 0M1484.2 750.4l-1.4 0.4M1491 747.9l0 1.6M1481.9 756.4l2.7 0M1485.4 754.6l0 3.2M1483 761.3l1.4 1.4M1488.7 763.7l-1.7 1.6M1483.7 767.3l1.6 -1.6M1401 718.9l3.4 -3.4M1403.3 717.8l4.9 0M1400.9 727.4l4.5 2.3M1404.1 735.4l4.2 0M1410.9 731.7l-2.1 3.9M1406.9 738l2 2M1398.8 765.1l5.3 0M1404.4 764.5l3.6 0M1411.3 762.9l3.2 3M1394.5 765.8l-1.5 2.9M1393.2 770.7l3.6 0M1400.2 769l1.3 0M1396 773.6l2.7 2.7M1403.7 771.2l-1.4 3.1M1411.3 772l0 3.4M1418.1 771.3l-2.3 2.3M1394.4 776.6l3.8 0M1404.4 777.4l2.5 -2.5M1525.7 699l1.5 3.8M1529.2 703l3.2 0M1526.6 702.9l0 4.6M1528.5 705.3l1.7 1.7M1529.5 709.8l3.6 0M1484.7 777.4l1.1 0M1502.3 775.7l2.1 -2.1M1449.7 777.7l2.7 2.7M1451.9 778.8l1.7 1.7M1468.1 779.5l2.2 0M1470.9 778.3l2.7 2.7M1474.6 780.3l1.5 0M1484.7 779.3l1.4 0M1489.9 778.8l2 0M1499 778.1l1.7 1.7M1502.9 782.7l2.8 -2.8M1446.5 786.5l0.7 0.7M1461.3 783.6l4.7 0M1479.8 784.5l0.9 0.9M1502.9 787.2l3.4 -3.4M1451.6 790l3.3 0M1456.3 789.5l3.4 0M1459.6 788.7l5.3 0M1467 787.2l1.6 1.6M1475.9 785.9l0 5.1M1478.8 788l5.1 0M1491 789.9l0 2.3M1449.3 794.2l0.9 0.9M1453.2 793.4l2.8 0M1461.5 794.7l-2.6 1.7M1481.6 793.3l1.7 -1.7M1486.4 791l0 4.8M1487.9 796l2.5 0M1501.1 793.1l3.4 3.4M1509.1 796.3l3.1 -3.1M1443.3 799.3l2.4 -2.4M1487.4 798l0 4M1488.9 797.1l3 3M1504.7 798.6l2.9 0M1442.3 802.8l2.7 -2.7M1449.1 801l2.9 2.9M1459.5 801.9l2.2 0M1470.6 805.4l3.2 -3.2M1481.2 804l0.9 -0.9M1488.5 801.6l0 3.2M1490.4 801.4l3 3M1495.4 800.5l3.5 3.5M1437.9 808.4l4.9 0M1461.8 805.4l2.3 2.3M1466.6 808.3l5.4 0M1475.6 807.8l1.5 1.5M1487 805.9l0.7 0.9M1447 812.2l3.8 3.8M1457.9 811.2l3.1 3.1M1461.6 812.8l-0.4 3.4M1483.8 811.7l1.4 0M1436.8 818.3l3.3 0M1443.4 814.6l0 3.7M1454.1 817.1l0 3.2M1461.4 813.9l0.3 2.7M1474.8 817.7l3.9 -3.9M1432.7 824.9l2.9 -2.9M1442.9 820.9l-1.4 0.3M1466 822.4l3.3 0M1440.4 826.1l1.7 0.5M1455 827.3l2.2 -2.2M1545.5 795.9l1.7 0M1549.1 790.7l3.7 3.7M1559.4 794.3l0 3.1M1556.6 797.5l2.2 0M1563.6 799.2l2.4 -2.4M1568.5 796.1l0 4.2M1572.9 797.8l0 3.4M1548.7 802.5l2 0M1557.9 801.7l0 3.5M1569.3 802.7l1.2 1.2M1572.3 802.6l0 4.9M1578.6 806.1l3.6 -3.6M1584.2 804l2.2 2.2M1548.7 808.6l3.9 -3.9M1557.6 806.5l5 0M1565.3 806.6l0.4 1.1M1568.4 808.3l4 0M1579 805.4l0 3.4M1588.7 806l1.8 4.4M1564.2 810.9l0 5.4M1579.6 812.2l1.2 -1.2M1582.6 813.3l5.2 0M1578.2 816.1l2.8 2.8M1582.7 819.3l2.5 -2.5M1588.2 814.7l2.5 2.5M1593.6 817.1l3.7 3.7M1581.3 820.3l-2.8 2.1M1581.2 822l1.2 -1.2M1586 822.1l2.7 -2.7M1593.5 821l3.3 0M1578.9 823.9l0 1.3M1597.2 825.4l2.1 -2.1M1384.9 814.4l4.4 0M1393.6 815.6l4.4 0M1370.5 819.2l2 2M1386.7 820.3l3.7 -3.7M1398.9 818.2l1.7 -1.7M1375.4 825.3l1.4 1.4M1722.4 275.7l3 3M1726.6 277.3l0 1.3M1736 276.8l0 3.9M1741.2 276.5l2.1 0.4M1747.9 276.3l0 2.3M1754.5 278.4l0 3.4M1727.4 282.5l4.9 0M1735.3 283.5l1.9 0M1743.9 280.4l2 2M1745.7 281.2l4.9 0M1749.8 284.6l3.8 -3.8M1789.3 290.4l3.8 -3.8M1791 291.8l2.9 0M1731 564.1l3.9 0M1740.3 594.6l3.3 0M1741.9 592.2l3.9 0M1742.7 595.5l1.4 0M1729.5 606.4l2.9 0M1733.5 605.8l1.9 0.6M1729.5 610.7l1.1 0M1735 613.1l2.5 2.5M1731.4 618.1l3 3M1723.4 621.3l1.5 4.2M1719.7 627.2l1.7 1.7M1710.5 635.3l3.1 3.1M1694.4 642.2l1.5 0M1698.1 641l3.5 1M1708.5 642.5l4 0M1692 647.1l0.9 -0.9M1702.8 644.5l0.6 1.3M1690 649.9l1 1M1697.3 662.3l3.3 -3.3M1700.4 661.8l0 4.6M1789.7 622.6l0.8 0.8M1787.9 628.3l1.7 -1.7M1790.1 628.5l3.8 -3.8M1788.2 630.3l4.3 0M1789.9 633.9l0 3.8M1790.5 654.6l3.1 0M1788.2 655.3l3.9 3.9M1744.6 671.4l-0.8 2.9M1746.9 674.8l4.7 0M1756.6 674.3l2 3.1M1749.2 676.4l2 2M1757.9 678.6l1.1 0M1852.6 554.9l1.6 -1.6M1847.3 562.9l1.5 2M1840.4 568.9l1.5 -1.5M1845.8 571.3l3.7 -3.7M1840.2 572.2l1.3 1.3M1844.9 572.6l4 0M1832.8 577.1l4 0M1838.4 575.5l-0.4 1M1832.5 583.6l1.1 1.1M1836.3 578.4l0 5.5M1832.3 582.3l0 5.3M1871.7 564.8l3.3 1M1876.4 568.7l2.5 0M1876.9 571l0 5.1M1683.3 748.3l1.5 0M1688.6 747.8l1.2 0M1680.1 748l0 5.2M1686.2 751.6l3.4 0M1661.5 756l0 2.5M1667.2 757.3l3.4 0M1678.9 756.7l-4 0.4M1680.4 754.6l2.3 0M1683.5 753.5l4.8 0M1659.8 759.3l2.7 0M1665.4 755.8l-1 4.6M1671.8 758.3l2.4 0.8M1676.9 759.1l2.3 0M1648.5 763.3l-0.2 3.3M1654.1 766.6l2.2 0M1663.7 765.9l1.4 -1.4M1643.3 767.7l0.9 1.9M1654 769.8l0.5 2.3M1656.8 769.3l2.7 0M1652.9 769.4l0 5.3M1634 778l1.3 1.3M1638.6 775.9l2 2M1642.9 774.8l3.8 3.8M1628.9 790.3l2.1 -2.1M1631.6 789.3l1.9 0M1630.1 793.4l-0.8 1.2M1639.6 792.2l0.6 0.9M1636.1 795.6l2.6 2.6M1627.8 803.3l2.9 -2.9M1630.9 802l1.6 0M1635.2 799.6l3.2 3.2M1633.2 805.7l2.1 2.6M1626.4 811.5l1.9 0M1632.3 810.6l1.6 0M1633.1 809.7l3.6 0M1622.2 814.2l1.7 0M1627.3 813.5l1.5 1.5M1622.9 821.1l3 0M1627 820l1.9 0M1622.8 824.4l1.3 -1.3M1715.6 721.9l-2.1 1.6M1711.3 725.2l0 3.4M1700.7 734l3.2 0M1675.6 778.1l0.9 0.9M1670.8 782.9l1.8 1.8M1675.9 783.5l1.6 0M1672.4 788.6l2.1 -2.1M1728.1 786.3l3.4 3.4M1726.1 793.7l1.1 -1.1M1726.5 796.3l0 5.4M1720.9 798.3l3.1 3.1M1723.7 803.7l0.7 -0.7M1723.5 808.3l4.9 0" fill="none" stroke="#a97ddb" stroke-width="4.200" stroke-linecap="round"/>
<path d="M1450.7 74C1452.9 71.6 1458.7 68.1 1462.7 68.3C1466.8 68.5 1473.3 72 1475 75C1476.7 78 1475.4 83.6 1472.7 86C1470 88.4 1462.9 89.8 1459 89.3C1455.1 88.8 1450.7 85.2 1449.3 82.7C1447.9 80.2 1448.5 76.4 1450.7 74z" fill="#eef0d5" stroke="#a97ddb" stroke-width="1.5"/>
<path d="M1188 263C1188.4 259.4 1194 261.9 1197 266C1200 270.1 1203.3 281 1206.2 287.5C1209.1 294 1211.9 298.8 1214.5 305C1217.1 311.2 1219.8 318.3 1222 325C1224.2 331.7 1226.1 338.8 1227.5 345C1228.9 351.2 1229.9 357.2 1230.5 362.5C1231.1 367.8 1231.9 374.4 1231 376.8C1230.1 379.2 1226.5 379.2 1225 376.8C1223.5 374.4 1223.3 367.8 1222 362.5C1220.7 357.2 1218.9 351.2 1217 345C1215.1 338.8 1212.8 331.7 1210.5 325C1208.2 318.3 1205.7 311.2 1203 305C1200.3 298.8 1197 294.5 1194.5 287.5C1192 280.5 1187.6 266.6 1188 263z" fill="#aad3df"/>
<path d="M1227.5 377C1227.3 378.7 1227.5 382.4 1226.2 387C1225 391.6 1222.3 398.7 1220 404.5C1217.7 410.3 1214.5 415.8 1212.5 422C1210.5 428.2 1208.2 436.6 1208 442C1207.8 447.4 1208.8 450.3 1211.2 454.5C1213.6 458.7 1219 463.2 1222.5 467C1226 470.8 1230.8 475.3 1232.5 477" fill="none" stroke="#aad3df" stroke-width="3"/>
<path d="M1227.5 317.5C1229.7 315 1236.7 313.8 1240 315C1243.3 316.2 1246.5 321.2 1247.5 325C1248.5 328.8 1248.7 335.2 1246.2 337.5C1243.7 339.8 1235.7 340.1 1232.5 338.8C1229.3 337.6 1227.8 333.6 1227 330C1226.2 326.4 1225.3 320 1227.5 317.5z" fill="#b3b5e6"/>
<path d="M1520 10C1518.3 15 1511.7 28.9 1510 40C1508.3 51.1 1513.9 66.7 1510 76.7C1506.1 86.7 1493.4 92.8 1486.7 100C1480 107.2 1473.6 112.8 1470 120C1466.4 127.2 1465 134.4 1465 143.3C1465 152.2 1467.5 162.7 1470 173.3C1472.5 183.9 1477.8 195.6 1480 206.7C1482.2 217.8 1483 228.5 1483.3 240C1483.6 251.5 1482 269.8 1481.7 275.7" fill="none" stroke="#a9cfe3" stroke-width="3.6" stroke-opacity=".85"/>
<path d="M1566.7 0C1565 5.5 1561.2 22.2 1556.7 33.3C1552.2 44.4 1546.1 56.7 1540 66.7C1533.9 76.7 1527.8 84.4 1520 93.3C1512.2 102.2 1501.6 112.2 1493.3 120C1485 127.8 1473.9 136.7 1470 140" fill="none" stroke="#a9cfe3" stroke-width="1.8" stroke-opacity=".85"/>
<g opacity=".5"><text x="1145" y="362" font-size="13.5" fill="#3f8a46" textLength="50" lengthAdjust="spacingAndGlyphs" font-style="italic">Parque</text><text x="1139" y="380.5" font-size="13.5" fill="#3f8a46" textLength="62" lengthAdjust="spacingAndGlyphs" font-style="italic">Nacional</text><text x="1132" y="399" font-size="13.5" fill="#3f8a46" textLength="76" lengthAdjust="spacingAndGlyphs" font-style="italic">de Doñana</text></g>
<linearGradient id="sh" x1="0" x2="1" y1="0" y2="0"><stop offset="0" stop-color="#000" stop-opacity=".26"/><stop offset="1" stop-color="#000" stop-opacity="0"/></linearGradient><rect x="960" y="0" width="4" height="827" fill="url(#sh)"/>
</svg>
<!--/MAPSVG-->
<div class="mb" style="left:626px"><svg width="48" height="48" viewBox="0 0 48 48"><path d="M24.500 16.800L35.600 35.900H13.400z" fill="none" stroke="#cd5064" stroke-width="2.900" stroke-linejoin="round"/><path d="M24.500 16.800L35.600 35.900H13.400z" fill="none" stroke="#f0bcc4" stroke-width=".8" stroke-linejoin="round"/><path d="M22.800 21.600H26.200L25.500 30.200H23.500z" fill="#cd5064"/><circle cx="24.500" cy="32.300" r="1.700" fill="#cd5064"/></svg></div>
<div class="mb" style="left:734px"><svg width="48" height="48" viewBox="0 0 48 48"><path d="M24 12L35.600 21.200 24 30.500 12.400 21.200z" fill="#ad1d2d"/><path d="M13.500 27L24 35.200 34.500 27" fill="none" stroke="#ad1d2d" stroke-width="3"/></svg></div>
<div id="attr"><span>© <i>OpenStreetMap</i> contributors.</span></div>

</div>
<div id="bottom"></div>
</div>
</body>
</html>
